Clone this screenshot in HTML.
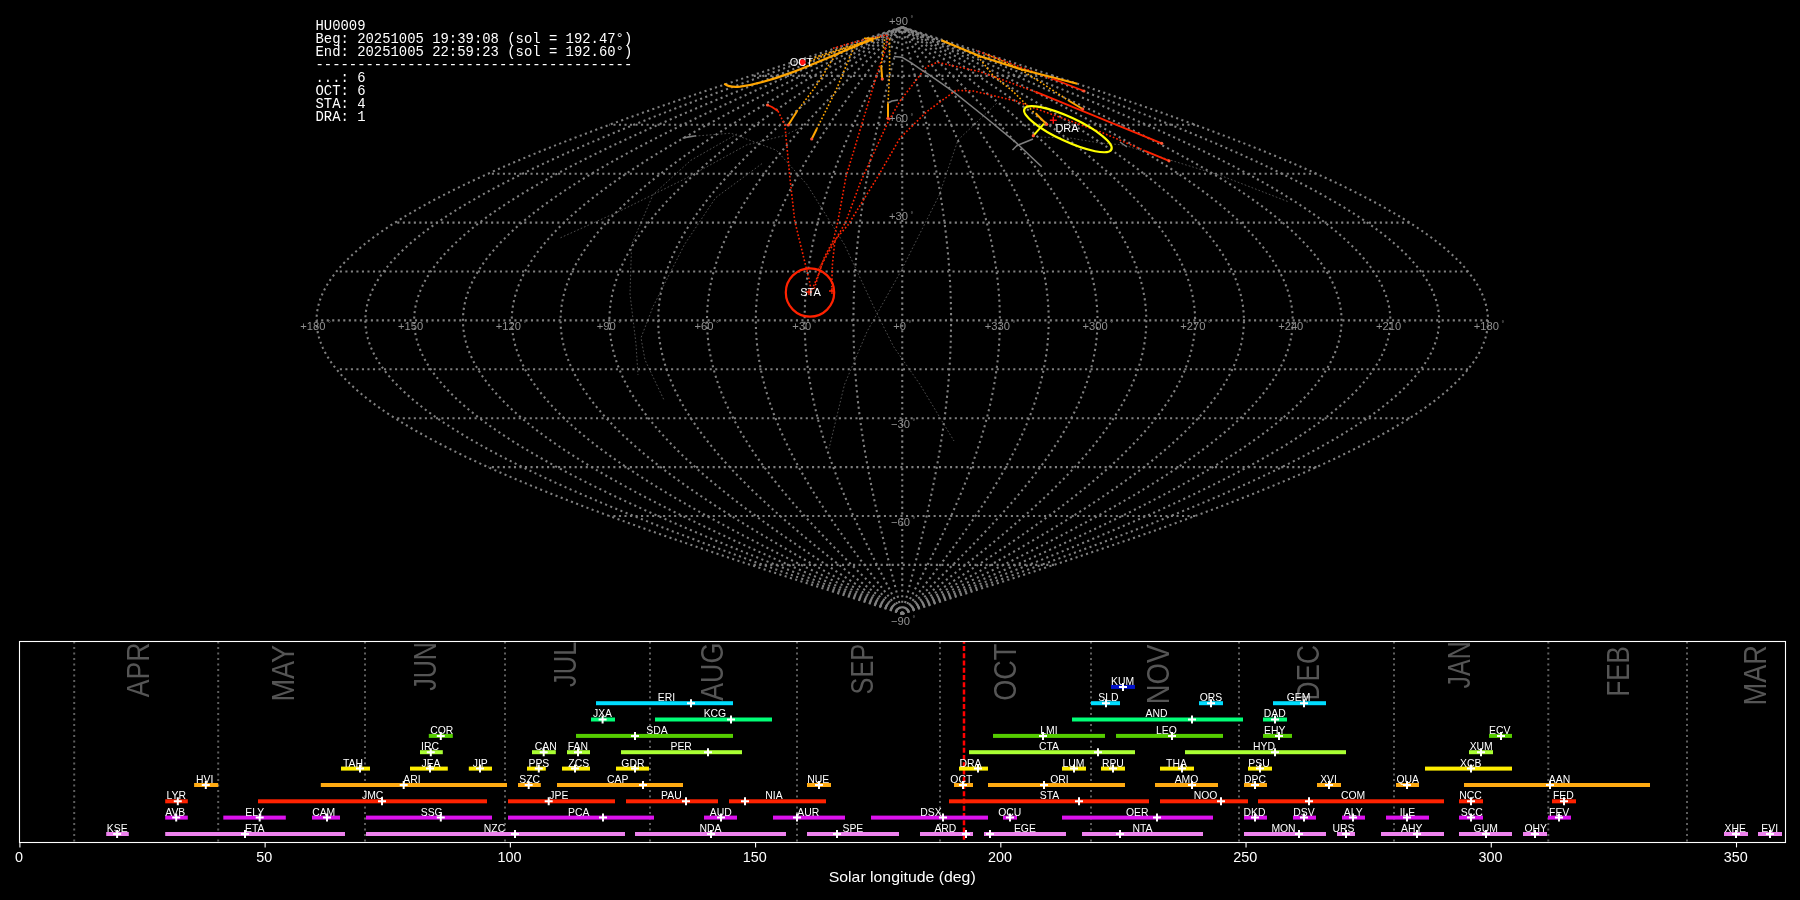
<!DOCTYPE html><html><head><meta charset="utf-8"><style>html,body{margin:0;padding:0;background:#000;width:1800px;height:900px;overflow:hidden}svg{display:block;will-change:transform}</style></head><body><svg width="1800" height="900" viewBox="0 0 1800 900"><rect width="1800" height="900" fill="#000"/><g fill="none" stroke="#808080" stroke-width="2.08" stroke-dasharray="2.08 3.44">
<polyline points="902.25,613.80 907.36,612.17 912.47,610.54 917.58,608.91 922.69,607.28 927.80,605.65 932.90,604.02 938.01,602.39 943.11,600.76 948.21,599.13 953.30,597.50 958.39,595.87 963.47,594.24 968.56,592.61 973.63,590.98 978.70,589.35 983.77,587.72 988.82,586.09 993.88,584.46 998.92,582.83 1003.96,581.20 1008.99,579.57 1014.01,577.94 1019.02,576.31 1024.03,574.68 1029.02,573.05 1034.01,571.42 1038.98,569.79 1043.95,568.16 1048.90,566.53 1053.85,564.90 1058.78,563.27 1063.70,561.64 1068.60,560.01 1073.50,558.38 1078.38,556.75 1083.25,555.12 1088.10,553.49 1092.94,551.86 1097.77,550.23 1102.58,548.60 1107.37,546.97 1112.15,545.34 1116.92,543.71 1121.66,542.08 1126.40,540.45 1131.11,538.82 1135.81,537.19 1140.48,535.56 1145.14,533.93 1149.79,532.30 1154.41,530.67 1159.01,529.04 1163.60,527.41 1168.16,525.78 1172.71,524.15 1177.23,522.52 1181.73,520.89 1186.21,519.26 1190.67,517.63 1195.11,516.00 1199.53,514.37 1203.92,512.74 1208.29,511.11 1212.63,509.48 1216.96,507.85 1221.26,506.22 1225.53,504.59 1229.78,502.96 1234.01,501.33 1238.21,499.70 1242.38,498.07 1246.53,496.44 1250.65,494.81 1254.75,493.18 1258.81,491.55 1262.86,489.92 1266.87,488.29 1270.86,486.66 1274.81,485.03 1278.74,483.40 1282.64,481.77 1286.52,480.14 1290.36,478.51 1294.17,476.88 1297.96,475.25 1301.71,473.62 1305.43,471.99 1309.13,470.36 1312.79,468.73 1316.42,467.10 1320.02,465.47 1323.58,463.84 1327.12,462.21 1330.62,460.58 1334.09,458.95 1337.52,457.32 1340.93,455.69 1344.30,454.06 1347.63,452.43 1350.94,450.80 1354.21,449.17 1357.44,447.54 1360.64,445.91 1363.80,444.28 1366.93,442.65 1370.03,441.02 1373.09,439.39 1376.11,437.76 1379.09,436.13 1382.04,434.50 1384.96,432.87 1387.83,431.24 1390.67,429.61 1393.48,427.98 1396.24,426.35 1398.97,424.72 1401.66,423.09 1404.31,421.46 1406.92,419.83 1409.50,418.20 1412.03,416.57 1414.53,414.94 1416.99,413.31 1419.41,411.68 1421.79,410.05 1424.13,408.42 1426.43,406.79 1428.69,405.16 1430.91,403.53 1433.09,401.90 1435.23,400.27 1437.33,398.64 1439.39,397.01 1441.41,395.38 1443.38,393.75 1445.32,392.12 1447.21,390.49 1449.07,388.86 1450.88,387.23 1452.65,385.60 1454.37,383.97 1456.06,382.34 1457.70,380.71 1459.30,379.08 1460.86,377.45 1462.38,375.82 1463.85,374.19 1465.28,372.56 1466.67,370.93 1468.01,369.30 1469.31,367.67 1470.57,366.04 1471.79,364.41 1472.96,362.78 1474.09,361.15 1475.17,359.52 1476.21,357.89 1477.21,356.26 1478.16,354.63 1479.07,353.00 1479.94,351.37 1480.76,349.74 1481.54,348.11 1482.27,346.48 1482.96,344.85 1483.60,343.22 1484.20,341.59 1484.76,339.96 1485.27,338.33 1485.74,336.70 1486.16,335.07 1486.54,333.44 1486.88,331.81 1487.17,330.18 1487.41,328.55 1487.61,326.92 1487.77,325.29 1487.88,323.66 1487.95,322.03 1487.97,320.40 1487.95,318.77 1487.88,317.14 1487.77,315.51 1487.61,313.88 1487.41,312.25 1487.17,310.62 1486.88,308.99 1486.54,307.36 1486.16,305.73 1485.74,304.10 1485.27,302.47 1484.76,300.84 1484.20,299.21 1483.60,297.58 1482.96,295.95 1482.27,294.32 1481.54,292.69 1480.76,291.06 1479.94,289.43 1479.07,287.80 1478.16,286.17 1477.21,284.54 1476.21,282.91 1475.17,281.28 1474.09,279.65 1472.96,278.02 1471.79,276.39 1470.57,274.76 1469.31,273.13 1468.01,271.50 1466.67,269.87 1465.28,268.24 1463.85,266.61 1462.38,264.98 1460.86,263.35 1459.30,261.72 1457.70,260.09 1456.06,258.46 1454.37,256.83 1452.65,255.20 1450.88,253.57 1449.07,251.94 1447.21,250.31 1445.32,248.68 1443.38,247.05 1441.41,245.42 1439.39,243.79 1437.33,242.16 1435.23,240.53 1433.09,238.90 1430.91,237.27 1428.69,235.64 1426.43,234.01 1424.13,232.38 1421.79,230.75 1419.41,229.12 1416.99,227.49 1414.53,225.86 1412.03,224.23 1409.50,222.60 1406.92,220.97 1404.31,219.34 1401.66,217.71 1398.97,216.08 1396.24,214.45 1393.48,212.82 1390.67,211.19 1387.83,209.56 1384.96,207.93 1382.04,206.30 1379.09,204.67 1376.11,203.04 1373.09,201.41 1370.03,199.78 1366.93,198.15 1363.80,196.52 1360.64,194.89 1357.44,193.26 1354.21,191.63 1350.94,190.00 1347.63,188.37 1344.30,186.74 1340.93,185.11 1337.52,183.48 1334.09,181.85 1330.62,180.22 1327.12,178.59 1323.58,176.96 1320.02,175.33 1316.42,173.70 1312.79,172.07 1309.13,170.44 1305.43,168.81 1301.71,167.18 1297.96,165.55 1294.17,163.92 1290.36,162.29 1286.52,160.66 1282.64,159.03 1278.74,157.40 1274.81,155.77 1270.86,154.14 1266.87,152.51 1262.86,150.88 1258.81,149.25 1254.75,147.62 1250.65,145.99 1246.53,144.36 1242.38,142.73 1238.21,141.10 1234.01,139.47 1229.78,137.84 1225.53,136.21 1221.26,134.58 1216.96,132.95 1212.63,131.32 1208.29,129.69 1203.92,128.06 1199.53,126.43 1195.11,124.80 1190.67,123.17 1186.21,121.54 1181.73,119.91 1177.23,118.28 1172.71,116.65 1168.16,115.02 1163.60,113.39 1159.01,111.76 1154.41,110.13 1149.79,108.50 1145.14,106.87 1140.48,105.24 1135.81,103.61 1131.11,101.98 1126.40,100.35 1121.66,98.72 1116.92,97.09 1112.15,95.46 1107.37,93.83 1102.58,92.20 1097.77,90.57 1092.94,88.94 1088.10,87.31 1083.25,85.68 1078.38,84.05 1073.50,82.42 1068.60,80.79 1063.70,79.16 1058.78,77.53 1053.85,75.90 1048.90,74.27 1043.95,72.64 1038.98,71.01 1034.01,69.38 1029.02,67.75 1024.03,66.12 1019.02,64.49 1014.01,62.86 1008.99,61.23 1003.96,59.60 998.92,57.97 993.88,56.34 988.82,54.71 983.77,53.08 978.70,51.45 973.63,49.82 968.56,48.19 963.47,46.56 958.39,44.93 953.30,43.30 948.21,41.67 943.11,40.04 938.01,38.41 932.90,36.78 927.80,35.15 922.69,33.52 917.58,31.89 912.47,30.26 907.36,28.63 902.25,27.00"/>
<polyline points="902.25,613.80 906.94,612.17 911.62,610.54 916.30,608.91 920.99,607.28 925.67,605.65 930.35,604.02 935.03,602.39 939.70,600.76 944.38,599.13 949.04,597.50 953.71,595.87 958.37,594.24 963.03,592.61 967.68,590.98 972.33,589.35 976.97,587.72 981.61,586.09 986.24,584.46 990.87,582.83 995.48,581.20 1000.09,579.57 1004.70,577.94 1009.29,576.31 1013.88,574.68 1018.46,573.05 1023.03,571.42 1027.59,569.79 1032.14,568.16 1036.68,566.53 1041.21,564.90 1045.73,563.27 1050.24,561.64 1054.74,560.01 1059.23,558.38 1063.70,556.75 1068.16,555.12 1072.61,553.49 1077.05,551.86 1081.47,550.23 1085.88,548.60 1090.28,546.97 1094.66,545.34 1099.03,543.71 1103.38,542.08 1107.72,540.45 1112.04,538.82 1116.34,537.19 1120.63,535.56 1124.90,533.93 1129.16,532.30 1133.40,530.67 1137.62,529.04 1141.82,527.41 1146.00,525.78 1150.17,524.15 1154.31,522.52 1158.44,520.89 1162.55,519.26 1166.64,517.63 1170.70,516.00 1174.75,514.37 1178.78,512.74 1182.78,511.11 1186.77,509.48 1190.73,507.85 1194.67,506.22 1198.59,504.59 1202.49,502.96 1206.36,501.33 1210.21,499.70 1214.04,498.07 1217.84,496.44 1221.62,494.81 1225.37,493.18 1229.10,491.55 1232.80,489.92 1236.48,488.29 1240.14,486.66 1243.77,485.03 1247.37,483.40 1250.95,481.77 1254.49,480.14 1258.02,478.51 1261.51,476.88 1264.98,475.25 1268.42,473.62 1271.83,471.99 1275.22,470.36 1278.58,468.73 1281.90,467.10 1285.20,465.47 1288.47,463.84 1291.71,462.21 1294.92,460.58 1298.10,458.95 1301.25,457.32 1304.37,455.69 1307.46,454.06 1310.52,452.43 1313.55,450.80 1316.54,449.17 1319.51,447.54 1322.44,445.91 1325.34,444.28 1328.21,442.65 1331.05,441.02 1333.85,439.39 1336.62,437.76 1339.36,436.13 1342.06,434.50 1344.73,432.87 1347.37,431.24 1349.97,429.61 1352.54,427.98 1355.08,426.35 1357.58,424.72 1360.04,423.09 1362.47,421.46 1364.87,419.83 1367.23,418.20 1369.55,416.57 1371.84,414.94 1374.10,413.31 1376.31,411.68 1378.49,410.05 1380.64,408.42 1382.75,406.79 1384.82,405.16 1386.86,403.53 1388.86,401.90 1390.82,400.27 1392.74,398.64 1394.63,397.01 1396.48,395.38 1398.29,393.75 1400.06,392.12 1401.80,390.49 1403.50,388.86 1405.16,387.23 1406.78,385.60 1408.36,383.97 1409.91,382.34 1411.41,380.71 1412.88,379.08 1414.31,377.45 1415.70,375.82 1417.05,374.19 1418.36,372.56 1419.63,370.93 1420.87,369.30 1422.06,367.67 1423.21,366.04 1424.33,364.41 1425.40,362.78 1426.43,361.15 1427.43,359.52 1428.38,357.89 1429.30,356.26 1430.17,354.63 1431.00,353.00 1431.80,351.37 1432.55,349.74 1433.26,348.11 1433.93,346.48 1434.57,344.85 1435.16,343.22 1435.71,341.59 1436.22,339.96 1436.69,338.33 1437.12,336.70 1437.50,335.07 1437.85,333.44 1438.16,331.81 1438.42,330.18 1438.65,328.55 1438.83,326.92 1438.98,325.29 1439.08,323.66 1439.14,322.03 1439.16,320.40 1439.14,318.77 1439.08,317.14 1438.98,315.51 1438.83,313.88 1438.65,312.25 1438.42,310.62 1438.16,308.99 1437.85,307.36 1437.50,305.73 1437.12,304.10 1436.69,302.47 1436.22,300.84 1435.71,299.21 1435.16,297.58 1434.57,295.95 1433.93,294.32 1433.26,292.69 1432.55,291.06 1431.80,289.43 1431.00,287.80 1430.17,286.17 1429.30,284.54 1428.38,282.91 1427.43,281.28 1426.43,279.65 1425.40,278.02 1424.33,276.39 1423.21,274.76 1422.06,273.13 1420.87,271.50 1419.63,269.87 1418.36,268.24 1417.05,266.61 1415.70,264.98 1414.31,263.35 1412.88,261.72 1411.41,260.09 1409.91,258.46 1408.36,256.83 1406.78,255.20 1405.16,253.57 1403.50,251.94 1401.80,250.31 1400.06,248.68 1398.29,247.05 1396.48,245.42 1394.63,243.79 1392.74,242.16 1390.82,240.53 1388.86,238.90 1386.86,237.27 1384.82,235.64 1382.75,234.01 1380.64,232.38 1378.49,230.75 1376.31,229.12 1374.10,227.49 1371.84,225.86 1369.55,224.23 1367.23,222.60 1364.87,220.97 1362.47,219.34 1360.04,217.71 1357.58,216.08 1355.08,214.45 1352.54,212.82 1349.97,211.19 1347.37,209.56 1344.73,207.93 1342.06,206.30 1339.36,204.67 1336.62,203.04 1333.85,201.41 1331.05,199.78 1328.21,198.15 1325.34,196.52 1322.44,194.89 1319.51,193.26 1316.54,191.63 1313.55,190.00 1310.52,188.37 1307.46,186.74 1304.37,185.11 1301.25,183.48 1298.10,181.85 1294.92,180.22 1291.71,178.59 1288.47,176.96 1285.20,175.33 1281.90,173.70 1278.58,172.07 1275.22,170.44 1271.83,168.81 1268.42,167.18 1264.98,165.55 1261.51,163.92 1258.02,162.29 1254.49,160.66 1250.95,159.03 1247.37,157.40 1243.77,155.77 1240.14,154.14 1236.48,152.51 1232.80,150.88 1229.10,149.25 1225.37,147.62 1221.62,145.99 1217.84,144.36 1214.04,142.73 1210.21,141.10 1206.36,139.47 1202.49,137.84 1198.59,136.21 1194.67,134.58 1190.73,132.95 1186.77,131.32 1182.78,129.69 1178.78,128.06 1174.75,126.43 1170.70,124.80 1166.64,123.17 1162.55,121.54 1158.44,119.91 1154.31,118.28 1150.17,116.65 1146.00,115.02 1141.82,113.39 1137.62,111.76 1133.40,110.13 1129.16,108.50 1124.90,106.87 1120.63,105.24 1116.34,103.61 1112.04,101.98 1107.72,100.35 1103.38,98.72 1099.03,97.09 1094.66,95.46 1090.28,93.83 1085.88,92.20 1081.47,90.57 1077.05,88.94 1072.61,87.31 1068.16,85.68 1063.70,84.05 1059.23,82.42 1054.74,80.79 1050.24,79.16 1045.73,77.53 1041.21,75.90 1036.68,74.27 1032.14,72.64 1027.59,71.01 1023.03,69.38 1018.46,67.75 1013.88,66.12 1009.29,64.49 1004.70,62.86 1000.09,61.23 995.48,59.60 990.87,57.97 986.24,56.34 981.61,54.71 976.97,53.08 972.33,51.45 967.68,49.82 963.03,48.19 958.37,46.56 953.71,44.93 949.04,43.30 944.38,41.67 939.70,40.04 935.03,38.41 930.35,36.78 925.67,35.15 920.99,33.52 916.30,31.89 911.62,30.26 906.94,28.63 902.25,27.00"/>
<polyline points="902.25,613.80 906.51,612.17 910.77,610.54 915.03,608.91 919.28,607.28 923.54,605.65 927.80,604.02 932.05,602.39 936.30,600.76 940.55,599.13 944.79,597.50 949.03,595.87 953.27,594.24 957.50,592.61 961.73,590.98 965.96,589.35 970.18,587.72 974.40,586.09 978.61,584.46 982.81,582.83 987.01,581.20 991.20,579.57 995.38,577.94 999.56,576.31 1003.73,574.68 1007.89,573.05 1012.05,571.42 1016.19,569.79 1020.33,568.16 1024.46,566.53 1028.58,564.90 1032.69,563.27 1036.79,561.64 1040.88,560.01 1044.96,558.38 1049.02,556.75 1053.08,555.12 1057.13,553.49 1061.16,551.86 1065.18,550.23 1069.19,548.60 1073.19,546.97 1077.17,545.34 1081.14,543.71 1085.10,542.08 1089.04,540.45 1092.97,538.82 1096.88,537.19 1100.78,535.56 1104.66,533.93 1108.53,532.30 1112.38,530.67 1116.22,529.04 1120.04,527.41 1123.84,525.78 1127.63,524.15 1131.40,522.52 1135.15,520.89 1138.89,519.26 1142.60,517.63 1146.30,516.00 1149.98,514.37 1153.64,512.74 1157.28,511.11 1160.90,509.48 1164.51,507.85 1168.09,506.22 1171.65,504.59 1175.19,502.96 1178.71,501.33 1182.21,499.70 1185.69,498.07 1189.15,496.44 1192.58,494.81 1196.00,493.18 1199.39,491.55 1202.75,489.92 1206.10,488.29 1209.42,486.66 1212.72,485.03 1215.99,483.40 1219.25,481.77 1222.47,480.14 1225.67,478.51 1228.85,476.88 1232.01,475.25 1235.13,473.62 1238.24,471.99 1241.31,470.36 1244.36,468.73 1247.39,467.10 1250.39,465.47 1253.36,463.84 1256.31,462.21 1259.22,460.58 1262.12,458.95 1264.98,457.32 1267.82,455.69 1270.62,454.06 1273.40,452.43 1276.16,450.80 1278.88,449.17 1281.57,447.54 1284.24,445.91 1286.88,444.28 1289.49,442.65 1292.06,441.02 1294.61,439.39 1297.13,437.76 1299.62,436.13 1302.08,434.50 1304.51,432.87 1306.90,431.24 1309.27,429.61 1311.61,427.98 1313.91,426.35 1316.18,424.72 1318.42,423.09 1320.63,421.46 1322.81,419.83 1324.96,418.20 1327.07,416.57 1329.15,414.94 1331.20,413.31 1333.22,411.68 1335.20,410.05 1337.15,408.42 1339.07,406.79 1340.95,405.16 1342.80,403.53 1344.62,401.90 1346.40,400.27 1348.15,398.64 1349.87,397.01 1351.55,395.38 1353.20,393.75 1354.81,392.12 1356.39,390.49 1357.93,388.86 1359.44,387.23 1360.91,385.60 1362.35,383.97 1363.76,382.34 1365.13,380.71 1366.46,379.08 1367.76,377.45 1369.02,375.82 1370.25,374.19 1371.44,372.56 1372.60,370.93 1373.72,369.30 1374.80,367.67 1375.85,366.04 1376.86,364.41 1377.84,362.78 1378.78,361.15 1379.68,359.52 1380.55,357.89 1381.38,356.26 1382.18,354.63 1382.93,353.00 1383.66,351.37 1384.34,349.74 1384.99,348.11 1385.60,346.48 1386.17,344.85 1386.71,343.22 1387.21,341.59 1387.68,339.96 1388.10,338.33 1388.49,336.70 1388.85,335.07 1389.16,333.44 1389.44,331.81 1389.68,330.18 1389.89,328.55 1390.05,326.92 1390.18,325.29 1390.28,323.66 1390.33,322.03 1390.35,320.40 1390.33,318.77 1390.28,317.14 1390.18,315.51 1390.05,313.88 1389.89,312.25 1389.68,310.62 1389.44,308.99 1389.16,307.36 1388.85,305.73 1388.49,304.10 1388.10,302.47 1387.68,300.84 1387.21,299.21 1386.71,297.58 1386.17,295.95 1385.60,294.32 1384.99,292.69 1384.34,291.06 1383.66,289.43 1382.93,287.80 1382.18,286.17 1381.38,284.54 1380.55,282.91 1379.68,281.28 1378.78,279.65 1377.84,278.02 1376.86,276.39 1375.85,274.76 1374.80,273.13 1373.72,271.50 1372.60,269.87 1371.44,268.24 1370.25,266.61 1369.02,264.98 1367.76,263.35 1366.46,261.72 1365.13,260.09 1363.76,258.46 1362.35,256.83 1360.91,255.20 1359.44,253.57 1357.93,251.94 1356.39,250.31 1354.81,248.68 1353.20,247.05 1351.55,245.42 1349.87,243.79 1348.15,242.16 1346.40,240.53 1344.62,238.90 1342.80,237.27 1340.95,235.64 1339.07,234.01 1337.15,232.38 1335.20,230.75 1333.22,229.12 1331.20,227.49 1329.15,225.86 1327.07,224.23 1324.96,222.60 1322.81,220.97 1320.63,219.34 1318.42,217.71 1316.18,216.08 1313.91,214.45 1311.61,212.82 1309.27,211.19 1306.90,209.56 1304.51,207.93 1302.08,206.30 1299.62,204.67 1297.13,203.04 1294.61,201.41 1292.06,199.78 1289.49,198.15 1286.88,196.52 1284.24,194.89 1281.57,193.26 1278.88,191.63 1276.16,190.00 1273.40,188.37 1270.62,186.74 1267.82,185.11 1264.98,183.48 1262.12,181.85 1259.22,180.22 1256.31,178.59 1253.36,176.96 1250.39,175.33 1247.39,173.70 1244.36,172.07 1241.31,170.44 1238.24,168.81 1235.13,167.18 1232.01,165.55 1228.85,163.92 1225.67,162.29 1222.47,160.66 1219.25,159.03 1215.99,157.40 1212.72,155.77 1209.42,154.14 1206.10,152.51 1202.75,150.88 1199.39,149.25 1196.00,147.62 1192.58,145.99 1189.15,144.36 1185.69,142.73 1182.21,141.10 1178.71,139.47 1175.19,137.84 1171.65,136.21 1168.09,134.58 1164.51,132.95 1160.90,131.32 1157.28,129.69 1153.64,128.06 1149.98,126.43 1146.30,124.80 1142.60,123.17 1138.89,121.54 1135.15,119.91 1131.40,118.28 1127.63,116.65 1123.84,115.02 1120.04,113.39 1116.22,111.76 1112.38,110.13 1108.53,108.50 1104.66,106.87 1100.78,105.24 1096.88,103.61 1092.97,101.98 1089.04,100.35 1085.10,98.72 1081.14,97.09 1077.17,95.46 1073.19,93.83 1069.19,92.20 1065.18,90.57 1061.16,88.94 1057.13,87.31 1053.08,85.68 1049.02,84.05 1044.96,82.42 1040.88,80.79 1036.79,79.16 1032.69,77.53 1028.58,75.90 1024.46,74.27 1020.33,72.64 1016.19,71.01 1012.05,69.38 1007.89,67.75 1003.73,66.12 999.56,64.49 995.38,62.86 991.20,61.23 987.01,59.60 982.81,57.97 978.61,56.34 974.40,54.71 970.18,53.08 965.96,51.45 961.73,49.82 957.50,48.19 953.27,46.56 949.03,44.93 944.79,43.30 940.55,41.67 936.30,40.04 932.05,38.41 927.80,36.78 923.54,35.15 919.28,33.52 915.03,31.89 910.77,30.26 906.51,28.63 902.25,27.00"/>
<polyline points="902.25,613.80 906.08,612.17 909.92,610.54 913.75,608.91 917.58,607.28 921.41,605.65 925.24,604.02 929.07,602.39 932.89,600.76 936.72,599.13 940.54,597.50 944.35,595.87 948.17,594.24 951.98,592.61 955.79,590.98 959.59,589.35 963.39,587.72 967.18,586.09 970.97,584.46 974.75,582.83 978.53,581.20 982.30,579.57 986.07,577.94 989.83,576.31 993.58,574.68 997.33,573.05 1001.07,571.42 1004.80,569.79 1008.52,568.16 1012.24,566.53 1015.95,564.90 1019.65,563.27 1023.33,561.64 1027.02,560.01 1030.69,558.38 1034.35,556.75 1038.00,555.12 1041.64,553.49 1045.27,551.86 1048.89,550.23 1052.50,548.60 1056.09,546.97 1059.68,545.34 1063.25,543.71 1066.81,542.08 1070.36,540.45 1073.89,538.82 1077.42,537.19 1080.93,535.56 1084.42,533.93 1087.90,532.30 1091.37,530.67 1094.82,529.04 1098.26,527.41 1101.68,525.78 1105.09,524.15 1108.48,522.52 1111.86,520.89 1115.22,519.26 1118.57,517.63 1121.89,516.00 1125.21,514.37 1128.50,512.74 1131.78,511.11 1135.04,509.48 1138.28,507.85 1141.50,506.22 1144.71,504.59 1147.90,502.96 1151.07,501.33 1154.22,499.70 1157.35,498.07 1160.46,496.44 1163.55,494.81 1166.62,493.18 1169.67,491.55 1172.70,489.92 1175.71,488.29 1178.70,486.66 1181.67,485.03 1184.62,483.40 1187.55,481.77 1190.45,480.14 1193.33,478.51 1196.19,476.88 1199.03,475.25 1201.85,473.62 1204.64,471.99 1207.41,470.36 1210.15,468.73 1212.87,467.10 1215.57,465.47 1218.25,463.84 1220.90,462.21 1223.53,460.58 1226.13,458.95 1228.71,457.32 1231.26,455.69 1233.79,454.06 1236.29,452.43 1238.77,450.80 1241.22,449.17 1243.64,447.54 1246.04,445.91 1248.42,444.28 1250.76,442.65 1253.08,441.02 1255.38,439.39 1257.64,437.76 1259.88,436.13 1262.10,434.50 1264.28,432.87 1266.44,431.24 1268.57,429.61 1270.67,427.98 1272.74,426.35 1274.79,424.72 1276.81,423.09 1278.80,421.46 1280.76,419.83 1282.69,418.20 1284.59,416.57 1286.46,414.94 1288.31,413.31 1290.12,411.68 1291.90,410.05 1293.66,408.42 1295.39,406.79 1297.08,405.16 1298.75,403.53 1300.38,401.90 1301.99,400.27 1303.56,398.64 1305.11,397.01 1306.62,395.38 1308.10,393.75 1309.55,392.12 1310.97,390.49 1312.36,388.86 1313.72,387.23 1315.05,385.60 1316.34,383.97 1317.61,382.34 1318.84,380.71 1320.04,379.08 1321.21,377.45 1322.35,375.82 1323.45,374.19 1324.52,372.56 1325.56,370.93 1326.57,369.30 1327.55,367.67 1328.49,366.04 1329.40,364.41 1330.28,362.78 1331.13,361.15 1331.94,359.52 1332.72,357.89 1333.47,356.26 1334.18,354.63 1334.87,353.00 1335.52,351.37 1336.13,349.74 1336.71,348.11 1337.26,346.48 1337.78,344.85 1338.27,343.22 1338.72,341.59 1339.13,339.96 1339.52,338.33 1339.87,336.70 1340.19,335.07 1340.47,333.44 1340.72,331.81 1340.94,330.18 1341.12,328.55 1341.27,326.92 1341.39,325.29 1341.47,323.66 1341.52,322.03 1341.54,320.40 1341.52,318.77 1341.47,317.14 1341.39,315.51 1341.27,313.88 1341.12,312.25 1340.94,310.62 1340.72,308.99 1340.47,307.36 1340.19,305.73 1339.87,304.10 1339.52,302.47 1339.13,300.84 1338.72,299.21 1338.27,297.58 1337.78,295.95 1337.26,294.32 1336.71,292.69 1336.13,291.06 1335.52,289.43 1334.87,287.80 1334.18,286.17 1333.47,284.54 1332.72,282.91 1331.94,281.28 1331.13,279.65 1330.28,278.02 1329.40,276.39 1328.49,274.76 1327.55,273.13 1326.57,271.50 1325.56,269.87 1324.52,268.24 1323.45,266.61 1322.35,264.98 1321.21,263.35 1320.04,261.72 1318.84,260.09 1317.61,258.46 1316.34,256.83 1315.05,255.20 1313.72,253.57 1312.36,251.94 1310.97,250.31 1309.55,248.68 1308.10,247.05 1306.62,245.42 1305.11,243.79 1303.56,242.16 1301.99,240.53 1300.38,238.90 1298.75,237.27 1297.08,235.64 1295.39,234.01 1293.66,232.38 1291.90,230.75 1290.12,229.12 1288.31,227.49 1286.46,225.86 1284.59,224.23 1282.69,222.60 1280.76,220.97 1278.80,219.34 1276.81,217.71 1274.79,216.08 1272.74,214.45 1270.67,212.82 1268.57,211.19 1266.44,209.56 1264.28,207.93 1262.10,206.30 1259.88,204.67 1257.64,203.04 1255.38,201.41 1253.08,199.78 1250.76,198.15 1248.42,196.52 1246.04,194.89 1243.64,193.26 1241.22,191.63 1238.77,190.00 1236.29,188.37 1233.79,186.74 1231.26,185.11 1228.71,183.48 1226.13,181.85 1223.53,180.22 1220.90,178.59 1218.25,176.96 1215.57,175.33 1212.87,173.70 1210.15,172.07 1207.41,170.44 1204.64,168.81 1201.85,167.18 1199.03,165.55 1196.19,163.92 1193.33,162.29 1190.45,160.66 1187.55,159.03 1184.62,157.40 1181.67,155.77 1178.70,154.14 1175.71,152.51 1172.70,150.88 1169.67,149.25 1166.62,147.62 1163.55,145.99 1160.46,144.36 1157.35,142.73 1154.22,141.10 1151.07,139.47 1147.90,137.84 1144.71,136.21 1141.50,134.58 1138.28,132.95 1135.04,131.32 1131.78,129.69 1128.50,128.06 1125.21,126.43 1121.89,124.80 1118.57,123.17 1115.22,121.54 1111.86,119.91 1108.48,118.28 1105.09,116.65 1101.68,115.02 1098.26,113.39 1094.82,111.76 1091.37,110.13 1087.90,108.50 1084.42,106.87 1080.93,105.24 1077.42,103.61 1073.89,101.98 1070.36,100.35 1066.81,98.72 1063.25,97.09 1059.68,95.46 1056.09,93.83 1052.50,92.20 1048.89,90.57 1045.27,88.94 1041.64,87.31 1038.00,85.68 1034.35,84.05 1030.69,82.42 1027.02,80.79 1023.33,79.16 1019.65,77.53 1015.95,75.90 1012.24,74.27 1008.52,72.64 1004.80,71.01 1001.07,69.38 997.33,67.75 993.58,66.12 989.83,64.49 986.07,62.86 982.30,61.23 978.53,59.60 974.75,57.97 970.97,56.34 967.18,54.71 963.39,53.08 959.59,51.45 955.79,49.82 951.98,48.19 948.17,46.56 944.35,44.93 940.54,43.30 936.72,41.67 932.89,40.04 929.07,38.41 925.24,36.78 921.41,35.15 917.58,33.52 913.75,31.89 909.92,30.26 906.08,28.63 902.25,27.00"/>
<polyline points="902.25,613.80 905.66,612.17 909.06,610.54 912.47,608.91 915.88,607.28 919.28,605.65 922.69,604.02 926.09,602.39 929.49,600.76 932.89,599.13 936.28,597.50 939.68,595.87 943.07,594.24 946.45,592.61 949.84,590.98 953.22,589.35 956.59,587.72 959.97,586.09 963.33,584.46 966.70,582.83 970.06,581.20 973.41,579.57 976.76,577.94 980.10,576.31 983.44,574.68 986.77,573.05 990.09,571.42 993.41,569.79 996.72,568.16 1000.02,566.53 1003.31,564.90 1006.60,563.27 1009.88,561.64 1013.15,560.01 1016.42,558.38 1019.67,556.75 1022.91,555.12 1026.15,553.49 1029.38,551.86 1032.59,550.23 1035.80,548.60 1039.00,546.97 1042.19,545.34 1045.36,543.71 1048.53,542.08 1051.68,540.45 1054.82,538.82 1057.95,537.19 1061.07,535.56 1064.18,533.93 1067.27,532.30 1070.36,530.67 1073.43,529.04 1076.48,527.41 1079.52,525.78 1082.55,524.15 1085.57,522.52 1088.57,520.89 1091.56,519.26 1094.53,517.63 1097.49,516.00 1100.43,514.37 1103.36,512.74 1106.28,511.11 1109.17,509.48 1112.05,507.85 1114.92,506.22 1117.77,504.59 1120.60,502.96 1123.42,501.33 1126.22,499.70 1129.00,498.07 1131.77,496.44 1134.52,494.81 1137.25,493.18 1139.96,491.55 1142.65,489.92 1145.33,488.29 1147.99,486.66 1150.63,485.03 1153.25,483.40 1155.85,481.77 1158.43,480.14 1160.99,478.51 1163.53,476.88 1166.05,475.25 1168.56,473.62 1171.04,471.99 1173.50,470.36 1175.94,468.73 1178.36,467.10 1180.76,465.47 1183.14,463.84 1185.49,462.21 1187.83,460.58 1190.14,458.95 1192.43,457.32 1194.70,455.69 1196.95,454.06 1199.17,452.43 1201.38,450.80 1203.55,449.17 1205.71,447.54 1207.84,445.91 1209.95,444.28 1212.04,442.65 1214.10,441.02 1216.14,439.39 1218.15,437.76 1220.15,436.13 1222.11,434.50 1224.05,432.87 1225.97,431.24 1227.87,429.61 1229.73,427.98 1231.58,426.35 1233.40,424.72 1235.19,423.09 1236.96,421.46 1238.70,419.83 1240.42,418.20 1242.11,416.57 1243.77,414.94 1245.41,413.31 1247.02,411.68 1248.61,410.05 1250.17,408.42 1251.70,406.79 1253.21,405.16 1254.69,403.53 1256.15,401.90 1257.57,400.27 1258.97,398.64 1260.34,397.01 1261.69,395.38 1263.01,393.75 1264.30,392.12 1265.56,390.49 1266.79,388.86 1268.00,387.23 1269.18,385.60 1270.33,383.97 1271.46,382.34 1272.55,380.71 1273.62,379.08 1274.66,377.45 1275.67,375.82 1276.65,374.19 1277.60,372.56 1278.53,370.93 1279.42,369.30 1280.29,367.67 1281.13,366.04 1281.94,364.41 1282.72,362.78 1283.47,361.15 1284.20,359.52 1284.89,357.89 1285.56,356.26 1286.19,354.63 1286.80,353.00 1287.37,351.37 1287.92,349.74 1288.44,348.11 1288.93,346.48 1289.39,344.85 1289.82,343.22 1290.22,341.59 1290.59,339.96 1290.93,338.33 1291.24,336.70 1291.53,335.07 1291.78,333.44 1292.00,331.81 1292.19,330.18 1292.36,328.55 1292.49,326.92 1292.60,325.29 1292.67,323.66 1292.72,322.03 1292.73,320.40 1292.72,318.77 1292.67,317.14 1292.60,315.51 1292.49,313.88 1292.36,312.25 1292.19,310.62 1292.00,308.99 1291.78,307.36 1291.53,305.73 1291.24,304.10 1290.93,302.47 1290.59,300.84 1290.22,299.21 1289.82,297.58 1289.39,295.95 1288.93,294.32 1288.44,292.69 1287.92,291.06 1287.37,289.43 1286.80,287.80 1286.19,286.17 1285.56,284.54 1284.89,282.91 1284.20,281.28 1283.47,279.65 1282.72,278.02 1281.94,276.39 1281.13,274.76 1280.29,273.13 1279.42,271.50 1278.53,269.87 1277.60,268.24 1276.65,266.61 1275.67,264.98 1274.66,263.35 1273.62,261.72 1272.55,260.09 1271.46,258.46 1270.33,256.83 1269.18,255.20 1268.00,253.57 1266.79,251.94 1265.56,250.31 1264.30,248.68 1263.01,247.05 1261.69,245.42 1260.34,243.79 1258.97,242.16 1257.57,240.53 1256.15,238.90 1254.69,237.27 1253.21,235.64 1251.70,234.01 1250.17,232.38 1248.61,230.75 1247.02,229.12 1245.41,227.49 1243.77,225.86 1242.11,224.23 1240.42,222.60 1238.70,220.97 1236.96,219.34 1235.19,217.71 1233.40,216.08 1231.58,214.45 1229.73,212.82 1227.87,211.19 1225.97,209.56 1224.05,207.93 1222.11,206.30 1220.15,204.67 1218.15,203.04 1216.14,201.41 1214.10,199.78 1212.04,198.15 1209.95,196.52 1207.84,194.89 1205.71,193.26 1203.55,191.63 1201.38,190.00 1199.17,188.37 1196.95,186.74 1194.70,185.11 1192.43,183.48 1190.14,181.85 1187.83,180.22 1185.49,178.59 1183.14,176.96 1180.76,175.33 1178.36,173.70 1175.94,172.07 1173.50,170.44 1171.04,168.81 1168.56,167.18 1166.05,165.55 1163.53,163.92 1160.99,162.29 1158.43,160.66 1155.85,159.03 1153.25,157.40 1150.63,155.77 1147.99,154.14 1145.33,152.51 1142.65,150.88 1139.96,149.25 1137.25,147.62 1134.52,145.99 1131.77,144.36 1129.00,142.73 1126.22,141.10 1123.42,139.47 1120.60,137.84 1117.77,136.21 1114.92,134.58 1112.05,132.95 1109.17,131.32 1106.28,129.69 1103.36,128.06 1100.43,126.43 1097.49,124.80 1094.53,123.17 1091.56,121.54 1088.57,119.91 1085.57,118.28 1082.55,116.65 1079.52,115.02 1076.48,113.39 1073.43,111.76 1070.36,110.13 1067.27,108.50 1064.18,106.87 1061.07,105.24 1057.95,103.61 1054.82,101.98 1051.68,100.35 1048.53,98.72 1045.36,97.09 1042.19,95.46 1039.00,93.83 1035.80,92.20 1032.59,90.57 1029.38,88.94 1026.15,87.31 1022.91,85.68 1019.67,84.05 1016.42,82.42 1013.15,80.79 1009.88,79.16 1006.60,77.53 1003.31,75.90 1000.02,74.27 996.72,72.64 993.41,71.01 990.09,69.38 986.77,67.75 983.44,66.12 980.10,64.49 976.76,62.86 973.41,61.23 970.06,59.60 966.70,57.97 963.33,56.34 959.97,54.71 956.59,53.08 953.22,51.45 949.84,49.82 946.45,48.19 943.07,46.56 939.68,44.93 936.28,43.30 932.89,41.67 929.49,40.04 926.09,38.41 922.69,36.78 919.28,35.15 915.88,33.52 912.47,31.89 909.06,30.26 905.66,28.63 902.25,27.00"/>
<polyline points="902.25,613.80 905.23,612.17 908.21,610.54 911.19,608.91 914.17,607.28 917.15,605.65 920.13,604.02 923.11,602.39 926.08,600.76 929.06,599.13 932.03,597.50 935.00,595.87 937.96,594.24 940.93,592.61 943.89,590.98 946.85,589.35 949.80,587.72 952.75,586.09 955.70,584.46 958.64,582.83 961.58,581.20 964.51,579.57 967.44,577.94 970.37,576.31 973.29,574.68 976.20,573.05 979.11,571.42 982.01,569.79 984.91,568.16 987.80,566.53 990.68,564.90 993.56,563.27 996.43,561.64 999.29,560.01 1002.14,558.38 1004.99,556.75 1007.83,555.12 1010.66,553.49 1013.49,551.86 1016.30,550.23 1019.11,548.60 1021.91,546.97 1024.69,545.34 1027.47,543.71 1030.24,542.08 1033.00,540.45 1035.75,538.82 1038.49,537.19 1041.22,535.56 1043.94,533.93 1046.65,532.30 1049.34,530.67 1052.03,529.04 1054.70,527.41 1057.36,525.78 1060.02,524.15 1062.65,522.52 1065.28,520.89 1067.89,519.26 1070.50,517.63 1073.09,516.00 1075.66,514.37 1078.22,512.74 1080.77,511.11 1083.31,509.48 1085.83,507.85 1088.34,506.22 1090.83,504.59 1093.31,502.96 1095.77,501.33 1098.22,499.70 1100.66,498.07 1103.08,496.44 1105.48,494.81 1107.87,493.18 1110.25,491.55 1112.60,489.92 1114.94,488.29 1117.27,486.66 1119.58,485.03 1121.87,483.40 1124.15,481.77 1126.41,480.14 1128.65,478.51 1130.87,476.88 1133.08,475.25 1135.27,473.62 1137.44,471.99 1139.59,470.36 1141.73,468.73 1143.85,467.10 1145.95,465.47 1148.03,463.84 1150.09,462.21 1152.13,460.58 1154.16,458.95 1156.16,457.32 1158.15,455.69 1160.11,454.06 1162.06,452.43 1163.98,450.80 1165.89,449.17 1167.78,447.54 1169.64,445.91 1171.49,444.28 1173.32,442.65 1175.12,441.02 1176.90,439.39 1178.67,437.76 1180.41,436.13 1182.13,434.50 1183.83,432.87 1185.51,431.24 1187.16,429.61 1188.80,427.98 1190.41,426.35 1192.00,424.72 1193.57,423.09 1195.12,421.46 1196.64,419.83 1198.14,418.20 1199.62,416.57 1201.08,414.94 1202.52,413.31 1203.93,411.68 1205.31,410.05 1206.68,408.42 1208.02,406.79 1209.34,405.16 1210.64,403.53 1211.91,401.90 1213.16,400.27 1214.38,398.64 1215.58,397.01 1216.76,395.38 1217.91,393.75 1219.04,392.12 1220.15,390.49 1221.23,388.86 1222.28,387.23 1223.31,385.60 1224.32,383.97 1225.31,382.34 1226.26,380.71 1227.20,379.08 1228.11,377.45 1228.99,375.82 1229.85,374.19 1230.68,372.56 1231.49,370.93 1232.28,369.30 1233.04,367.67 1233.77,366.04 1234.48,364.41 1235.16,362.78 1235.82,361.15 1236.45,359.52 1237.06,357.89 1237.64,356.26 1238.20,354.63 1238.73,353.00 1239.23,351.37 1239.71,349.74 1240.17,348.11 1240.59,346.48 1241.00,344.85 1241.37,343.22 1241.72,341.59 1242.05,339.96 1242.35,338.33 1242.62,336.70 1242.87,335.07 1243.09,333.44 1243.28,331.81 1243.45,330.18 1243.59,328.55 1243.71,326.92 1243.80,325.29 1243.87,323.66 1243.91,322.03 1243.92,320.40 1243.91,318.77 1243.87,317.14 1243.80,315.51 1243.71,313.88 1243.59,312.25 1243.45,310.62 1243.28,308.99 1243.09,307.36 1242.87,305.73 1242.62,304.10 1242.35,302.47 1242.05,300.84 1241.72,299.21 1241.37,297.58 1241.00,295.95 1240.59,294.32 1240.17,292.69 1239.71,291.06 1239.23,289.43 1238.73,287.80 1238.20,286.17 1237.64,284.54 1237.06,282.91 1236.45,281.28 1235.82,279.65 1235.16,278.02 1234.48,276.39 1233.77,274.76 1233.04,273.13 1232.28,271.50 1231.49,269.87 1230.68,268.24 1229.85,266.61 1228.99,264.98 1228.11,263.35 1227.20,261.72 1226.26,260.09 1225.31,258.46 1224.32,256.83 1223.31,255.20 1222.28,253.57 1221.23,251.94 1220.15,250.31 1219.04,248.68 1217.91,247.05 1216.76,245.42 1215.58,243.79 1214.38,242.16 1213.16,240.53 1211.91,238.90 1210.64,237.27 1209.34,235.64 1208.02,234.01 1206.68,232.38 1205.31,230.75 1203.93,229.12 1202.52,227.49 1201.08,225.86 1199.62,224.23 1198.14,222.60 1196.64,220.97 1195.12,219.34 1193.57,217.71 1192.00,216.08 1190.41,214.45 1188.80,212.82 1187.16,211.19 1185.51,209.56 1183.83,207.93 1182.13,206.30 1180.41,204.67 1178.67,203.04 1176.90,201.41 1175.12,199.78 1173.32,198.15 1171.49,196.52 1169.64,194.89 1167.78,193.26 1165.89,191.63 1163.98,190.00 1162.06,188.37 1160.11,186.74 1158.15,185.11 1156.16,183.48 1154.16,181.85 1152.13,180.22 1150.09,178.59 1148.03,176.96 1145.95,175.33 1143.85,173.70 1141.73,172.07 1139.59,170.44 1137.44,168.81 1135.27,167.18 1133.08,165.55 1130.87,163.92 1128.65,162.29 1126.41,160.66 1124.15,159.03 1121.87,157.40 1119.58,155.77 1117.27,154.14 1114.94,152.51 1112.60,150.88 1110.25,149.25 1107.87,147.62 1105.48,145.99 1103.08,144.36 1100.66,142.73 1098.22,141.10 1095.77,139.47 1093.31,137.84 1090.83,136.21 1088.34,134.58 1085.83,132.95 1083.31,131.32 1080.77,129.69 1078.22,128.06 1075.66,126.43 1073.09,124.80 1070.50,123.17 1067.89,121.54 1065.28,119.91 1062.65,118.28 1060.02,116.65 1057.36,115.02 1054.70,113.39 1052.03,111.76 1049.34,110.13 1046.65,108.50 1043.94,106.87 1041.22,105.24 1038.49,103.61 1035.75,101.98 1033.00,100.35 1030.24,98.72 1027.47,97.09 1024.69,95.46 1021.91,93.83 1019.11,92.20 1016.30,90.57 1013.49,88.94 1010.66,87.31 1007.83,85.68 1004.99,84.05 1002.14,82.42 999.29,80.79 996.43,79.16 993.56,77.53 990.68,75.90 987.80,74.27 984.91,72.64 982.01,71.01 979.11,69.38 976.20,67.75 973.29,66.12 970.37,64.49 967.44,62.86 964.51,61.23 961.58,59.60 958.64,57.97 955.70,56.34 952.75,54.71 949.80,53.08 946.85,51.45 943.89,49.82 940.93,48.19 937.96,46.56 935.00,44.93 932.03,43.30 929.06,41.67 926.08,40.04 923.11,38.41 920.13,36.78 917.15,35.15 914.17,33.52 911.19,31.89 908.21,30.26 905.23,28.63 902.25,27.00"/>
<polyline points="902.25,613.80 904.81,612.17 907.36,610.54 909.92,608.91 912.47,607.28 915.02,605.65 917.58,604.02 920.13,602.39 922.68,600.76 925.23,599.13 927.77,597.50 930.32,595.87 932.86,594.24 935.40,592.61 937.94,590.98 940.48,589.35 943.01,587.72 945.54,586.09 948.06,584.46 950.59,582.83 953.10,581.20 955.62,579.57 958.13,577.94 960.64,576.31 963.14,574.68 965.64,573.05 968.13,571.42 970.62,569.79 973.10,568.16 975.58,566.53 978.05,564.90 980.51,563.27 982.97,561.64 985.43,560.01 987.87,558.38 990.31,556.75 992.75,555.12 995.18,553.49 997.60,551.86 1000.01,550.23 1002.41,548.60 1004.81,546.97 1007.20,545.34 1009.58,543.71 1011.96,542.08 1014.32,540.45 1016.68,538.82 1019.03,537.19 1021.37,535.56 1023.70,533.93 1026.02,532.30 1028.33,530.67 1030.63,529.04 1032.92,527.41 1035.21,525.78 1037.48,524.15 1039.74,522.52 1041.99,520.89 1044.23,519.26 1046.46,517.63 1048.68,516.00 1050.89,514.37 1053.08,512.74 1055.27,511.11 1057.44,509.48 1059.60,507.85 1061.75,506.22 1063.89,504.59 1066.02,502.96 1068.13,501.33 1070.23,499.70 1072.31,498.07 1074.39,496.44 1076.45,494.81 1078.50,493.18 1080.53,491.55 1082.55,489.92 1084.56,488.29 1086.55,486.66 1088.53,485.03 1090.50,483.40 1092.45,481.77 1094.38,480.14 1096.30,478.51 1098.21,476.88 1100.10,475.25 1101.98,473.62 1103.84,471.99 1105.69,470.36 1107.52,468.73 1109.33,467.10 1111.13,465.47 1112.92,463.84 1114.68,462.21 1116.43,460.58 1118.17,458.95 1119.89,457.32 1121.59,455.69 1123.27,454.06 1124.94,452.43 1126.59,450.80 1128.23,449.17 1129.84,447.54 1131.44,445.91 1133.03,444.28 1134.59,442.65 1136.14,441.02 1137.67,439.39 1139.18,437.76 1140.67,436.13 1142.15,434.50 1143.60,432.87 1145.04,431.24 1146.46,429.61 1147.86,427.98 1149.25,426.35 1150.61,424.72 1151.95,423.09 1153.28,421.46 1154.59,419.83 1155.87,418.20 1157.14,416.57 1158.39,414.94 1159.62,413.31 1160.83,411.68 1162.02,410.05 1163.19,408.42 1164.34,406.79 1165.47,405.16 1166.58,403.53 1167.67,401.90 1168.74,400.27 1169.79,398.64 1170.82,397.01 1171.83,395.38 1172.82,393.75 1173.79,392.12 1174.73,390.49 1175.66,388.86 1176.56,387.23 1177.45,385.60 1178.31,383.97 1179.15,382.34 1179.98,380.71 1180.78,379.08 1181.56,377.45 1182.31,375.82 1183.05,374.19 1183.77,372.56 1184.46,370.93 1185.13,369.30 1185.78,367.67 1186.41,366.04 1187.02,364.41 1187.60,362.78 1188.17,361.15 1188.71,359.52 1189.23,357.89 1189.73,356.26 1190.21,354.63 1190.66,353.00 1191.09,351.37 1191.50,349.74 1191.89,348.11 1192.26,346.48 1192.60,344.85 1192.93,343.22 1193.23,341.59 1193.51,339.96 1193.76,338.33 1194.00,336.70 1194.21,335.07 1194.40,333.44 1194.56,331.81 1194.71,330.18 1194.83,328.55 1194.93,326.92 1195.01,325.29 1195.07,323.66 1195.10,322.03 1195.11,320.40 1195.10,318.77 1195.07,317.14 1195.01,315.51 1194.93,313.88 1194.83,312.25 1194.71,310.62 1194.56,308.99 1194.40,307.36 1194.21,305.73 1194.00,304.10 1193.76,302.47 1193.51,300.84 1193.23,299.21 1192.93,297.58 1192.60,295.95 1192.26,294.32 1191.89,292.69 1191.50,291.06 1191.09,289.43 1190.66,287.80 1190.21,286.17 1189.73,284.54 1189.23,282.91 1188.71,281.28 1188.17,279.65 1187.60,278.02 1187.02,276.39 1186.41,274.76 1185.78,273.13 1185.13,271.50 1184.46,269.87 1183.77,268.24 1183.05,266.61 1182.31,264.98 1181.56,263.35 1180.78,261.72 1179.98,260.09 1179.15,258.46 1178.31,256.83 1177.45,255.20 1176.56,253.57 1175.66,251.94 1174.73,250.31 1173.79,248.68 1172.82,247.05 1171.83,245.42 1170.82,243.79 1169.79,242.16 1168.74,240.53 1167.67,238.90 1166.58,237.27 1165.47,235.64 1164.34,234.01 1163.19,232.38 1162.02,230.75 1160.83,229.12 1159.62,227.49 1158.39,225.86 1157.14,224.23 1155.87,222.60 1154.59,220.97 1153.28,219.34 1151.95,217.71 1150.61,216.08 1149.25,214.45 1147.86,212.82 1146.46,211.19 1145.04,209.56 1143.60,207.93 1142.15,206.30 1140.67,204.67 1139.18,203.04 1137.67,201.41 1136.14,199.78 1134.59,198.15 1133.03,196.52 1131.44,194.89 1129.84,193.26 1128.23,191.63 1126.59,190.00 1124.94,188.37 1123.27,186.74 1121.59,185.11 1119.89,183.48 1118.17,181.85 1116.43,180.22 1114.68,178.59 1112.92,176.96 1111.13,175.33 1109.33,173.70 1107.52,172.07 1105.69,170.44 1103.84,168.81 1101.98,167.18 1100.10,165.55 1098.21,163.92 1096.30,162.29 1094.38,160.66 1092.45,159.03 1090.50,157.40 1088.53,155.77 1086.55,154.14 1084.56,152.51 1082.55,150.88 1080.53,149.25 1078.50,147.62 1076.45,145.99 1074.39,144.36 1072.31,142.73 1070.23,141.10 1068.13,139.47 1066.02,137.84 1063.89,136.21 1061.75,134.58 1059.60,132.95 1057.44,131.32 1055.27,129.69 1053.08,128.06 1050.89,126.43 1048.68,124.80 1046.46,123.17 1044.23,121.54 1041.99,119.91 1039.74,118.28 1037.48,116.65 1035.21,115.02 1032.92,113.39 1030.63,111.76 1028.33,110.13 1026.02,108.50 1023.70,106.87 1021.37,105.24 1019.03,103.61 1016.68,101.98 1014.32,100.35 1011.96,98.72 1009.58,97.09 1007.20,95.46 1004.81,93.83 1002.41,92.20 1000.01,90.57 997.60,88.94 995.18,87.31 992.75,85.68 990.31,84.05 987.87,82.42 985.43,80.79 982.97,79.16 980.51,77.53 978.05,75.90 975.58,74.27 973.10,72.64 970.62,71.01 968.13,69.38 965.64,67.75 963.14,66.12 960.64,64.49 958.13,62.86 955.62,61.23 953.10,59.60 950.59,57.97 948.06,56.34 945.54,54.71 943.01,53.08 940.48,51.45 937.94,49.82 935.40,48.19 932.86,46.56 930.32,44.93 927.77,43.30 925.23,41.67 922.68,40.04 920.13,38.41 917.58,36.78 915.02,35.15 912.47,33.52 909.92,31.89 907.36,30.26 904.81,28.63 902.25,27.00"/>
<polyline points="902.25,613.80 904.38,612.17 906.51,610.54 908.64,608.91 910.77,607.28 912.90,605.65 915.02,604.02 917.15,602.39 919.27,600.76 921.40,599.13 923.52,597.50 925.64,595.87 927.76,594.24 929.88,592.61 931.99,590.98 934.10,589.35 936.22,587.72 938.32,586.09 940.43,584.46 942.53,582.83 944.63,581.20 946.72,579.57 948.82,577.94 950.91,576.31 952.99,574.68 955.07,573.05 957.15,571.42 959.22,569.79 961.29,568.16 963.36,566.53 965.41,564.90 967.47,563.27 969.52,561.64 971.56,560.01 973.60,558.38 975.64,556.75 977.67,555.12 979.69,553.49 981.70,551.86 983.72,550.23 985.72,548.60 987.72,546.97 989.71,545.34 991.69,543.71 993.67,542.08 995.64,540.45 997.61,538.82 999.56,537.19 1001.51,535.56 1003.46,533.93 1005.39,532.30 1007.32,530.67 1009.23,529.04 1011.14,527.41 1013.05,525.78 1014.94,524.15 1016.82,522.52 1018.70,520.89 1020.57,519.26 1022.43,517.63 1024.28,516.00 1026.11,514.37 1027.95,512.74 1029.77,511.11 1031.58,509.48 1033.38,507.85 1035.17,506.22 1036.95,504.59 1038.72,502.96 1040.48,501.33 1042.23,499.70 1043.97,498.07 1045.70,496.44 1047.42,494.81 1049.12,493.18 1050.82,491.55 1052.50,489.92 1054.17,488.29 1055.84,486.66 1057.48,485.03 1059.12,483.40 1060.75,481.77 1062.36,480.14 1063.96,478.51 1065.55,476.88 1067.13,475.25 1068.69,473.62 1070.24,471.99 1071.78,470.36 1073.31,468.73 1074.82,467.10 1076.32,465.47 1077.80,463.84 1079.28,462.21 1080.74,460.58 1082.18,458.95 1083.61,457.32 1085.03,455.69 1086.44,454.06 1087.83,452.43 1089.20,450.80 1090.56,449.17 1091.91,447.54 1093.25,445.91 1094.56,444.28 1095.87,442.65 1097.16,441.02 1098.43,439.39 1099.69,437.76 1100.93,436.13 1102.16,434.50 1103.38,432.87 1104.58,431.24 1105.76,429.61 1106.93,427.98 1108.08,426.35 1109.22,424.72 1110.34,423.09 1111.44,421.46 1112.53,419.83 1113.60,418.20 1114.66,416.57 1115.70,414.94 1116.73,413.31 1117.73,411.68 1118.72,410.05 1119.70,408.42 1120.66,406.79 1121.60,405.16 1122.53,403.53 1123.43,401.90 1124.33,400.27 1125.20,398.64 1126.06,397.01 1126.90,395.38 1127.72,393.75 1128.53,392.12 1129.32,390.49 1130.09,388.86 1130.84,387.23 1131.58,385.60 1132.30,383.97 1133.00,382.34 1133.69,380.71 1134.36,379.08 1135.00,377.45 1135.64,375.82 1136.25,374.19 1136.85,372.56 1137.42,370.93 1137.98,369.30 1138.53,367.67 1139.05,366.04 1139.56,364.41 1140.05,362.78 1140.52,361.15 1140.97,359.52 1141.40,357.89 1141.82,356.26 1142.21,354.63 1142.59,353.00 1142.95,351.37 1143.30,349.74 1143.62,348.11 1143.92,346.48 1144.21,344.85 1144.48,343.22 1144.73,341.59 1144.96,339.96 1145.18,338.33 1145.37,336.70 1145.55,335.07 1145.71,333.44 1145.84,331.81 1145.97,330.18 1146.07,328.55 1146.15,326.92 1146.22,325.29 1146.26,323.66 1146.29,322.03 1146.30,320.40 1146.29,318.77 1146.26,317.14 1146.22,315.51 1146.15,313.88 1146.07,312.25 1145.97,310.62 1145.84,308.99 1145.71,307.36 1145.55,305.73 1145.37,304.10 1145.18,302.47 1144.96,300.84 1144.73,299.21 1144.48,297.58 1144.21,295.95 1143.92,294.32 1143.62,292.69 1143.30,291.06 1142.95,289.43 1142.59,287.80 1142.21,286.17 1141.82,284.54 1141.40,282.91 1140.97,281.28 1140.52,279.65 1140.05,278.02 1139.56,276.39 1139.05,274.76 1138.53,273.13 1137.98,271.50 1137.42,269.87 1136.85,268.24 1136.25,266.61 1135.64,264.98 1135.00,263.35 1134.36,261.72 1133.69,260.09 1133.00,258.46 1132.30,256.83 1131.58,255.20 1130.84,253.57 1130.09,251.94 1129.32,250.31 1128.53,248.68 1127.72,247.05 1126.90,245.42 1126.06,243.79 1125.20,242.16 1124.33,240.53 1123.43,238.90 1122.53,237.27 1121.60,235.64 1120.66,234.01 1119.70,232.38 1118.72,230.75 1117.73,229.12 1116.73,227.49 1115.70,225.86 1114.66,224.23 1113.60,222.60 1112.53,220.97 1111.44,219.34 1110.34,217.71 1109.22,216.08 1108.08,214.45 1106.93,212.82 1105.76,211.19 1104.58,209.56 1103.38,207.93 1102.16,206.30 1100.93,204.67 1099.69,203.04 1098.43,201.41 1097.16,199.78 1095.87,198.15 1094.56,196.52 1093.25,194.89 1091.91,193.26 1090.56,191.63 1089.20,190.00 1087.83,188.37 1086.44,186.74 1085.03,185.11 1083.61,183.48 1082.18,181.85 1080.74,180.22 1079.28,178.59 1077.80,176.96 1076.32,175.33 1074.82,173.70 1073.31,172.07 1071.78,170.44 1070.24,168.81 1068.69,167.18 1067.13,165.55 1065.55,163.92 1063.96,162.29 1062.36,160.66 1060.75,159.03 1059.12,157.40 1057.48,155.77 1055.84,154.14 1054.17,152.51 1052.50,150.88 1050.82,149.25 1049.12,147.62 1047.42,145.99 1045.70,144.36 1043.97,142.73 1042.23,141.10 1040.48,139.47 1038.72,137.84 1036.95,136.21 1035.17,134.58 1033.38,132.95 1031.58,131.32 1029.77,129.69 1027.95,128.06 1026.11,126.43 1024.28,124.80 1022.43,123.17 1020.57,121.54 1018.70,119.91 1016.82,118.28 1014.94,116.65 1013.05,115.02 1011.14,113.39 1009.23,111.76 1007.32,110.13 1005.39,108.50 1003.46,106.87 1001.51,105.24 999.56,103.61 997.61,101.98 995.64,100.35 993.67,98.72 991.69,97.09 989.71,95.46 987.72,93.83 985.72,92.20 983.72,90.57 981.70,88.94 979.69,87.31 977.67,85.68 975.64,84.05 973.60,82.42 971.56,80.79 969.52,79.16 967.47,77.53 965.41,75.90 963.36,74.27 961.29,72.64 959.22,71.01 957.15,69.38 955.07,67.75 952.99,66.12 950.91,64.49 948.82,62.86 946.72,61.23 944.63,59.60 942.53,57.97 940.43,56.34 938.32,54.71 936.22,53.08 934.10,51.45 931.99,49.82 929.88,48.19 927.76,46.56 925.64,44.93 923.52,43.30 921.40,41.67 919.27,40.04 917.15,38.41 915.02,36.78 912.90,35.15 910.77,33.52 908.64,31.89 906.51,30.26 904.38,28.63 902.25,27.00"/>
<polyline points="902.25,613.80 903.95,612.17 905.66,610.54 907.36,608.91 909.06,607.28 910.77,605.65 912.47,604.02 914.17,602.39 915.87,600.76 917.57,599.13 919.27,597.50 920.96,595.87 922.66,594.24 924.35,592.61 926.04,590.98 927.73,589.35 929.42,587.72 931.11,586.09 932.79,584.46 934.47,582.83 936.15,581.20 937.83,579.57 939.50,577.94 941.17,576.31 942.84,574.68 944.51,573.05 946.17,571.42 947.83,569.79 949.48,568.16 951.13,566.53 952.78,564.90 954.43,563.27 956.07,561.64 957.70,560.01 959.33,558.38 960.96,556.75 962.58,555.12 964.20,553.49 965.81,551.86 967.42,550.23 969.03,548.60 970.62,546.97 972.22,545.34 973.81,543.71 975.39,542.08 976.97,540.45 978.54,538.82 980.10,537.19 981.66,535.56 983.21,533.93 984.76,532.30 986.30,530.67 987.84,529.04 989.37,527.41 990.89,525.78 992.40,524.15 993.91,522.52 995.41,520.89 996.90,519.26 998.39,517.63 999.87,516.00 1001.34,514.37 1002.81,512.74 1004.26,511.11 1005.71,509.48 1007.15,507.85 1008.59,506.22 1010.01,504.59 1011.43,502.96 1012.84,501.33 1014.24,499.70 1015.63,498.07 1017.01,496.44 1018.38,494.81 1019.75,493.18 1021.10,491.55 1022.45,489.92 1023.79,488.29 1025.12,486.66 1026.44,485.03 1027.75,483.40 1029.05,481.77 1030.34,480.14 1031.62,478.51 1032.89,476.88 1034.15,475.25 1035.40,473.62 1036.64,471.99 1037.88,470.36 1039.10,468.73 1040.31,467.10 1041.51,465.47 1042.69,463.84 1043.87,462.21 1045.04,460.58 1046.20,458.95 1047.34,457.32 1048.48,455.69 1049.60,454.06 1050.71,452.43 1051.81,450.80 1052.90,449.17 1053.98,447.54 1055.05,445.91 1056.10,444.28 1057.14,442.65 1058.18,441.02 1059.20,439.39 1060.20,437.76 1061.20,436.13 1062.18,434.50 1063.15,432.87 1064.11,431.24 1065.06,429.61 1065.99,427.98 1066.91,426.35 1067.82,424.72 1068.72,423.09 1069.60,421.46 1070.47,419.83 1071.33,418.20 1072.18,416.57 1073.01,414.94 1073.83,413.31 1074.64,411.68 1075.43,410.05 1076.21,408.42 1076.98,406.79 1077.73,405.16 1078.47,403.53 1079.20,401.90 1079.91,400.27 1080.61,398.64 1081.30,397.01 1081.97,395.38 1082.63,393.75 1083.27,392.12 1083.90,390.49 1084.52,388.86 1085.13,387.23 1085.72,385.60 1086.29,383.97 1086.85,382.34 1087.40,380.71 1087.93,379.08 1088.45,377.45 1088.96,375.82 1089.45,374.19 1089.93,372.56 1090.39,370.93 1090.84,369.30 1091.27,367.67 1091.69,366.04 1092.10,364.41 1092.49,362.78 1092.86,361.15 1093.22,359.52 1093.57,357.89 1093.90,356.26 1094.22,354.63 1094.52,353.00 1094.81,351.37 1095.09,349.74 1095.35,348.11 1095.59,346.48 1095.82,344.85 1096.03,343.22 1096.23,341.59 1096.42,339.96 1096.59,338.33 1096.75,336.70 1096.89,335.07 1097.01,333.44 1097.13,331.81 1097.22,330.18 1097.30,328.55 1097.37,326.92 1097.42,325.29 1097.46,323.66 1097.48,322.03 1097.49,320.40 1097.48,318.77 1097.46,317.14 1097.42,315.51 1097.37,313.88 1097.30,312.25 1097.22,310.62 1097.13,308.99 1097.01,307.36 1096.89,305.73 1096.75,304.10 1096.59,302.47 1096.42,300.84 1096.23,299.21 1096.03,297.58 1095.82,295.95 1095.59,294.32 1095.35,292.69 1095.09,291.06 1094.81,289.43 1094.52,287.80 1094.22,286.17 1093.90,284.54 1093.57,282.91 1093.22,281.28 1092.86,279.65 1092.49,278.02 1092.10,276.39 1091.69,274.76 1091.27,273.13 1090.84,271.50 1090.39,269.87 1089.93,268.24 1089.45,266.61 1088.96,264.98 1088.45,263.35 1087.93,261.72 1087.40,260.09 1086.85,258.46 1086.29,256.83 1085.72,255.20 1085.13,253.57 1084.52,251.94 1083.90,250.31 1083.27,248.68 1082.63,247.05 1081.97,245.42 1081.30,243.79 1080.61,242.16 1079.91,240.53 1079.20,238.90 1078.47,237.27 1077.73,235.64 1076.98,234.01 1076.21,232.38 1075.43,230.75 1074.64,229.12 1073.83,227.49 1073.01,225.86 1072.18,224.23 1071.33,222.60 1070.47,220.97 1069.60,219.34 1068.72,217.71 1067.82,216.08 1066.91,214.45 1065.99,212.82 1065.06,211.19 1064.11,209.56 1063.15,207.93 1062.18,206.30 1061.20,204.67 1060.20,203.04 1059.20,201.41 1058.18,199.78 1057.14,198.15 1056.10,196.52 1055.05,194.89 1053.98,193.26 1052.90,191.63 1051.81,190.00 1050.71,188.37 1049.60,186.74 1048.48,185.11 1047.34,183.48 1046.20,181.85 1045.04,180.22 1043.87,178.59 1042.69,176.96 1041.51,175.33 1040.31,173.70 1039.10,172.07 1037.88,170.44 1036.64,168.81 1035.40,167.18 1034.15,165.55 1032.89,163.92 1031.62,162.29 1030.34,160.66 1029.05,159.03 1027.75,157.40 1026.44,155.77 1025.12,154.14 1023.79,152.51 1022.45,150.88 1021.10,149.25 1019.75,147.62 1018.38,145.99 1017.01,144.36 1015.63,142.73 1014.24,141.10 1012.84,139.47 1011.43,137.84 1010.01,136.21 1008.59,134.58 1007.15,132.95 1005.71,131.32 1004.26,129.69 1002.81,128.06 1001.34,126.43 999.87,124.80 998.39,123.17 996.90,121.54 995.41,119.91 993.91,118.28 992.40,116.65 990.89,115.02 989.37,113.39 987.84,111.76 986.30,110.13 984.76,108.50 983.21,106.87 981.66,105.24 980.10,103.61 978.54,101.98 976.97,100.35 975.39,98.72 973.81,97.09 972.22,95.46 970.62,93.83 969.03,92.20 967.42,90.57 965.81,88.94 964.20,87.31 962.58,85.68 960.96,84.05 959.33,82.42 957.70,80.79 956.07,79.16 954.43,77.53 952.78,75.90 951.13,74.27 949.48,72.64 947.83,71.01 946.17,69.38 944.51,67.75 942.84,66.12 941.17,64.49 939.50,62.86 937.83,61.23 936.15,59.60 934.47,57.97 932.79,56.34 931.11,54.71 929.42,53.08 927.73,51.45 926.04,49.82 924.35,48.19 922.66,46.56 920.96,44.93 919.27,43.30 917.57,41.67 915.87,40.04 914.17,38.41 912.47,36.78 910.77,35.15 909.06,33.52 907.36,31.89 905.66,30.26 903.95,28.63 902.25,27.00"/>
<polyline points="902.25,613.80 903.53,612.17 904.81,610.54 906.08,608.91 907.36,607.28 908.64,605.65 909.91,604.02 911.19,602.39 912.46,600.76 913.74,599.13 915.01,597.50 916.28,595.87 917.56,594.24 918.83,592.61 920.10,590.98 921.36,589.35 922.63,587.72 923.89,586.09 925.16,584.46 926.42,582.83 927.68,581.20 928.93,579.57 930.19,577.94 931.44,576.31 932.69,574.68 933.94,573.05 935.19,571.42 936.43,569.79 937.67,568.16 938.91,566.53 940.15,564.90 941.38,563.27 942.61,561.64 943.84,560.01 945.06,558.38 946.28,556.75 947.50,555.12 948.71,553.49 949.92,551.86 951.13,550.23 952.33,548.60 953.53,546.97 954.73,545.34 955.92,543.71 957.10,542.08 958.29,540.45 959.46,538.82 960.64,537.19 961.81,535.56 962.97,533.93 964.13,532.30 965.29,530.67 966.44,529.04 967.59,527.41 968.73,525.78 969.86,524.15 970.99,522.52 972.12,520.89 973.24,519.26 974.36,517.63 975.47,516.00 976.57,514.37 977.67,512.74 978.76,511.11 979.85,509.48 980.93,507.85 982.00,506.22 983.07,504.59 984.13,502.96 985.19,501.33 986.24,499.70 987.28,498.07 988.32,496.44 989.35,494.81 990.37,493.18 991.39,491.55 992.40,489.92 993.40,488.29 994.40,486.66 995.39,485.03 996.37,483.40 997.35,481.77 998.32,480.14 999.28,478.51 1000.23,476.88 1001.18,475.25 1002.12,473.62 1003.05,471.99 1003.97,470.36 1004.88,468.73 1005.79,467.10 1006.69,465.47 1007.58,463.84 1008.47,462.21 1009.34,460.58 1010.21,458.95 1011.07,457.32 1011.92,455.69 1012.76,454.06 1013.60,452.43 1014.42,450.80 1015.24,449.17 1016.05,447.54 1016.85,445.91 1017.64,444.28 1018.42,442.65 1019.19,441.02 1019.96,439.39 1020.71,437.76 1021.46,436.13 1022.20,434.50 1022.93,432.87 1023.65,431.24 1024.36,429.61 1025.06,427.98 1025.75,426.35 1026.43,424.72 1027.10,423.09 1027.77,421.46 1028.42,419.83 1029.06,418.20 1029.70,416.57 1030.32,414.94 1030.94,413.31 1031.54,411.68 1032.13,410.05 1032.72,408.42 1033.30,406.79 1033.86,405.16 1034.42,403.53 1034.96,401.90 1035.50,400.27 1036.02,398.64 1036.54,397.01 1037.04,395.38 1037.53,393.75 1038.02,392.12 1038.49,390.49 1038.95,388.86 1039.41,387.23 1039.85,385.60 1040.28,383.97 1040.70,382.34 1041.11,380.71 1041.51,379.08 1041.90,377.45 1042.28,375.82 1042.65,374.19 1043.01,372.56 1043.35,370.93 1043.69,369.30 1044.02,367.67 1044.33,366.04 1044.63,364.41 1044.93,362.78 1045.21,361.15 1045.48,359.52 1045.74,357.89 1045.99,356.26 1046.23,354.63 1046.46,353.00 1046.67,351.37 1046.88,349.74 1047.07,348.11 1047.25,346.48 1047.43,344.85 1047.59,343.22 1047.74,341.59 1047.88,339.96 1048.01,338.33 1048.12,336.70 1048.23,335.07 1048.32,333.44 1048.41,331.81 1048.48,330.18 1048.54,328.55 1048.59,326.92 1048.63,325.29 1048.66,323.66 1048.67,322.03 1048.68,320.40 1048.67,318.77 1048.66,317.14 1048.63,315.51 1048.59,313.88 1048.54,312.25 1048.48,310.62 1048.41,308.99 1048.32,307.36 1048.23,305.73 1048.12,304.10 1048.01,302.47 1047.88,300.84 1047.74,299.21 1047.59,297.58 1047.43,295.95 1047.25,294.32 1047.07,292.69 1046.88,291.06 1046.67,289.43 1046.46,287.80 1046.23,286.17 1045.99,284.54 1045.74,282.91 1045.48,281.28 1045.21,279.65 1044.93,278.02 1044.63,276.39 1044.33,274.76 1044.02,273.13 1043.69,271.50 1043.35,269.87 1043.01,268.24 1042.65,266.61 1042.28,264.98 1041.90,263.35 1041.51,261.72 1041.11,260.09 1040.70,258.46 1040.28,256.83 1039.85,255.20 1039.41,253.57 1038.95,251.94 1038.49,250.31 1038.02,248.68 1037.53,247.05 1037.04,245.42 1036.54,243.79 1036.02,242.16 1035.50,240.53 1034.96,238.90 1034.42,237.27 1033.86,235.64 1033.30,234.01 1032.72,232.38 1032.13,230.75 1031.54,229.12 1030.94,227.49 1030.32,225.86 1029.70,224.23 1029.06,222.60 1028.42,220.97 1027.77,219.34 1027.10,217.71 1026.43,216.08 1025.75,214.45 1025.06,212.82 1024.36,211.19 1023.65,209.56 1022.93,207.93 1022.20,206.30 1021.46,204.67 1020.71,203.04 1019.96,201.41 1019.19,199.78 1018.42,198.15 1017.64,196.52 1016.85,194.89 1016.05,193.26 1015.24,191.63 1014.42,190.00 1013.60,188.37 1012.76,186.74 1011.92,185.11 1011.07,183.48 1010.21,181.85 1009.34,180.22 1008.47,178.59 1007.58,176.96 1006.69,175.33 1005.79,173.70 1004.88,172.07 1003.97,170.44 1003.05,168.81 1002.12,167.18 1001.18,165.55 1000.23,163.92 999.28,162.29 998.32,160.66 997.35,159.03 996.37,157.40 995.39,155.77 994.40,154.14 993.40,152.51 992.40,150.88 991.39,149.25 990.37,147.62 989.35,145.99 988.32,144.36 987.28,142.73 986.24,141.10 985.19,139.47 984.13,137.84 983.07,136.21 982.00,134.58 980.93,132.95 979.85,131.32 978.76,129.69 977.67,128.06 976.57,126.43 975.47,124.80 974.36,123.17 973.24,121.54 972.12,119.91 970.99,118.28 969.86,116.65 968.73,115.02 967.59,113.39 966.44,111.76 965.29,110.13 964.13,108.50 962.97,106.87 961.81,105.24 960.64,103.61 959.46,101.98 958.29,100.35 957.10,98.72 955.92,97.09 954.73,95.46 953.53,93.83 952.33,92.20 951.13,90.57 949.92,88.94 948.71,87.31 947.50,85.68 946.28,84.05 945.06,82.42 943.84,80.79 942.61,79.16 941.38,77.53 940.15,75.90 938.91,74.27 937.67,72.64 936.43,71.01 935.19,69.38 933.94,67.75 932.69,66.12 931.44,64.49 930.19,62.86 928.93,61.23 927.68,59.60 926.42,57.97 925.16,56.34 923.89,54.71 922.63,53.08 921.36,51.45 920.10,49.82 918.83,48.19 917.56,46.56 916.28,44.93 915.01,43.30 913.74,41.67 912.46,40.04 911.19,38.41 909.91,36.78 908.64,35.15 907.36,33.52 906.08,31.89 904.81,30.26 903.53,28.63 902.25,27.00"/>
<polyline points="902.25,613.80 903.10,612.17 903.95,610.54 904.81,608.91 905.66,607.28 906.51,605.65 907.36,604.02 908.21,602.39 909.06,600.76 909.91,599.13 910.76,597.50 911.61,595.87 912.45,594.24 913.30,592.61 914.15,590.98 914.99,589.35 915.84,587.72 916.68,586.09 917.52,584.46 918.36,582.83 919.20,581.20 920.04,579.57 920.88,577.94 921.71,576.31 922.55,574.68 923.38,573.05 924.21,571.42 925.04,569.79 925.87,568.16 926.69,566.53 927.52,564.90 928.34,563.27 929.16,561.64 929.98,560.01 930.79,558.38 931.60,556.75 932.42,555.12 933.23,553.49 934.03,551.86 934.84,550.23 935.64,548.60 936.44,546.97 937.23,545.34 938.03,543.71 938.82,542.08 939.61,540.45 940.39,538.82 941.18,537.19 941.96,535.56 942.73,533.93 943.51,532.30 944.28,530.67 945.04,529.04 945.81,527.41 946.57,525.78 947.33,524.15 948.08,522.52 948.83,520.89 949.58,519.26 950.32,517.63 951.06,516.00 951.80,514.37 952.53,512.74 953.26,511.11 953.98,509.48 954.70,507.85 955.42,506.22 956.13,504.59 956.84,502.96 957.54,501.33 958.24,499.70 958.94,498.07 959.63,496.44 960.32,494.81 961.00,493.18 961.68,491.55 962.35,489.92 963.02,488.29 963.68,486.66 964.34,485.03 965.00,483.40 965.65,481.77 966.29,480.14 966.93,478.51 967.57,476.88 968.20,475.25 968.83,473.62 969.45,471.99 970.06,470.36 970.67,468.73 971.28,467.10 971.88,465.47 972.47,463.84 973.06,462.21 973.64,460.58 974.22,458.95 974.80,457.32 975.36,455.69 975.92,454.06 976.48,452.43 977.03,450.80 977.58,449.17 978.11,447.54 978.65,445.91 979.18,444.28 979.70,442.65 980.21,441.02 980.72,439.39 981.23,437.76 981.72,436.13 982.22,434.50 982.70,432.87 983.18,431.24 983.65,429.61 984.12,427.98 984.58,426.35 985.04,424.72 985.48,423.09 985.93,421.46 986.36,419.83 986.79,418.20 987.21,416.57 987.63,414.94 988.04,413.31 988.44,411.68 988.84,410.05 989.23,408.42 989.61,406.79 989.99,405.16 990.36,403.53 990.72,401.90 991.08,400.27 991.43,398.64 991.77,397.01 992.11,395.38 992.44,393.75 992.76,392.12 993.08,390.49 993.39,388.86 993.69,387.23 993.98,385.60 994.27,383.97 994.55,382.34 994.83,380.71 995.09,379.08 995.35,377.45 995.60,375.82 995.85,374.19 996.09,372.56 996.32,370.93 996.54,369.30 996.76,367.67 996.97,366.04 997.17,364.41 997.37,362.78 997.56,361.15 997.74,359.52 997.91,357.89 998.08,356.26 998.24,354.63 998.39,353.00 998.53,351.37 998.67,349.74 998.80,348.11 998.92,346.48 999.03,344.85 999.14,343.22 999.24,341.59 999.34,339.96 999.42,338.33 999.50,336.70 999.57,335.07 999.63,333.44 999.69,331.81 999.74,330.18 999.78,328.55 999.81,326.92 999.84,325.29 999.86,323.66 999.87,322.03 999.87,320.40 999.87,318.77 999.86,317.14 999.84,315.51 999.81,313.88 999.78,312.25 999.74,310.62 999.69,308.99 999.63,307.36 999.57,305.73 999.50,304.10 999.42,302.47 999.34,300.84 999.24,299.21 999.14,297.58 999.03,295.95 998.92,294.32 998.80,292.69 998.67,291.06 998.53,289.43 998.39,287.80 998.24,286.17 998.08,284.54 997.91,282.91 997.74,281.28 997.56,279.65 997.37,278.02 997.17,276.39 996.97,274.76 996.76,273.13 996.54,271.50 996.32,269.87 996.09,268.24 995.85,266.61 995.60,264.98 995.35,263.35 995.09,261.72 994.83,260.09 994.55,258.46 994.27,256.83 993.98,255.20 993.69,253.57 993.39,251.94 993.08,250.31 992.76,248.68 992.44,247.05 992.11,245.42 991.77,243.79 991.43,242.16 991.08,240.53 990.72,238.90 990.36,237.27 989.99,235.64 989.61,234.01 989.23,232.38 988.84,230.75 988.44,229.12 988.04,227.49 987.63,225.86 987.21,224.23 986.79,222.60 986.36,220.97 985.93,219.34 985.48,217.71 985.04,216.08 984.58,214.45 984.12,212.82 983.65,211.19 983.18,209.56 982.70,207.93 982.22,206.30 981.72,204.67 981.23,203.04 980.72,201.41 980.21,199.78 979.70,198.15 979.18,196.52 978.65,194.89 978.11,193.26 977.58,191.63 977.03,190.00 976.48,188.37 975.92,186.74 975.36,185.11 974.80,183.48 974.22,181.85 973.64,180.22 973.06,178.59 972.47,176.96 971.88,175.33 971.28,173.70 970.67,172.07 970.06,170.44 969.45,168.81 968.83,167.18 968.20,165.55 967.57,163.92 966.93,162.29 966.29,160.66 965.65,159.03 965.00,157.40 964.34,155.77 963.68,154.14 963.02,152.51 962.35,150.88 961.68,149.25 961.00,147.62 960.32,145.99 959.63,144.36 958.94,142.73 958.24,141.10 957.54,139.47 956.84,137.84 956.13,136.21 955.42,134.58 954.70,132.95 953.98,131.32 953.26,129.69 952.53,128.06 951.80,126.43 951.06,124.80 950.32,123.17 949.58,121.54 948.83,119.91 948.08,118.28 947.33,116.65 946.57,115.02 945.81,113.39 945.04,111.76 944.28,110.13 943.51,108.50 942.73,106.87 941.96,105.24 941.18,103.61 940.39,101.98 939.61,100.35 938.82,98.72 938.03,97.09 937.23,95.46 936.44,93.83 935.64,92.20 934.84,90.57 934.03,88.94 933.23,87.31 932.42,85.68 931.60,84.05 930.79,82.42 929.98,80.79 929.16,79.16 928.34,77.53 927.52,75.90 926.69,74.27 925.87,72.64 925.04,71.01 924.21,69.38 923.38,67.75 922.55,66.12 921.71,64.49 920.88,62.86 920.04,61.23 919.20,59.60 918.36,57.97 917.52,56.34 916.68,54.71 915.84,53.08 914.99,51.45 914.15,49.82 913.30,48.19 912.45,46.56 911.61,44.93 910.76,43.30 909.91,41.67 909.06,40.04 908.21,38.41 907.36,36.78 906.51,35.15 905.66,33.52 904.81,31.89 903.95,30.26 903.10,28.63 902.25,27.00"/>
<polyline points="902.25,613.80 902.68,612.17 903.10,610.54 903.53,608.91 903.95,607.28 904.38,605.65 904.80,604.02 905.23,602.39 905.65,600.76 906.08,599.13 906.50,597.50 906.93,595.87 907.35,594.24 907.78,592.61 908.20,590.98 908.62,589.35 909.04,587.72 909.46,586.09 909.89,584.46 910.31,582.83 910.73,581.20 911.14,579.57 911.56,577.94 911.98,576.31 912.40,574.68 912.81,573.05 913.23,571.42 913.64,569.79 914.06,568.16 914.47,566.53 914.88,564.90 915.29,563.27 915.70,561.64 916.11,560.01 916.52,558.38 916.93,556.75 917.33,555.12 917.74,553.49 918.14,551.86 918.54,550.23 918.94,548.60 919.34,546.97 919.74,545.34 920.14,543.71 920.53,542.08 920.93,540.45 921.32,538.82 921.71,537.19 922.10,535.56 922.49,533.93 922.88,532.30 923.26,530.67 923.65,529.04 924.03,527.41 924.41,525.78 924.79,524.15 925.16,522.52 925.54,520.89 925.91,519.26 926.29,517.63 926.65,516.00 927.02,514.37 927.39,512.74 927.75,511.11 928.12,509.48 928.48,507.85 928.83,506.22 929.19,504.59 929.54,502.96 929.90,501.33 930.25,499.70 930.59,498.07 930.94,496.44 931.28,494.81 931.62,493.18 931.96,491.55 932.30,489.92 932.63,488.29 932.97,486.66 933.30,485.03 933.62,483.40 933.95,481.77 934.27,480.14 934.59,478.51 934.91,476.88 935.23,475.25 935.54,473.62 935.85,471.99 936.16,470.36 936.46,468.73 936.76,467.10 937.06,465.47 937.36,463.84 937.66,462.21 937.95,460.58 938.24,458.95 938.52,457.32 938.81,455.69 939.09,454.06 939.37,452.43 939.64,450.80 939.91,449.17 940.18,447.54 940.45,445.91 940.71,444.28 940.97,442.65 941.23,441.02 941.49,439.39 941.74,437.76 941.99,436.13 942.23,434.50 942.48,432.87 942.72,431.24 942.95,429.61 943.19,427.98 943.42,426.35 943.64,424.72 943.87,423.09 944.09,421.46 944.31,419.83 944.52,418.20 944.73,416.57 944.94,414.94 945.15,413.31 945.35,411.68 945.54,410.05 945.74,408.42 945.93,406.79 946.12,405.16 946.31,403.53 946.49,401.90 946.67,400.27 946.84,398.64 947.01,397.01 947.18,395.38 947.34,393.75 947.51,392.12 947.66,390.49 947.82,388.86 947.97,387.23 948.12,385.60 948.26,383.97 948.40,382.34 948.54,380.71 948.67,379.08 948.80,377.45 948.93,375.82 949.05,374.19 949.17,372.56 949.28,370.93 949.40,369.30 949.51,367.67 949.61,366.04 949.71,364.41 949.81,362.78 949.90,361.15 949.99,359.52 950.08,357.89 950.16,356.26 950.24,354.63 950.32,353.00 950.39,351.37 950.46,349.74 950.52,348.11 950.58,346.48 950.64,344.85 950.70,343.22 950.75,341.59 950.79,339.96 950.84,338.33 950.87,336.70 950.91,335.07 950.94,333.44 950.97,331.81 950.99,330.18 951.01,328.55 951.03,326.92 951.04,325.29 951.05,323.66 951.06,322.03 951.06,320.40 951.06,318.77 951.05,317.14 951.04,315.51 951.03,313.88 951.01,312.25 950.99,310.62 950.97,308.99 950.94,307.36 950.91,305.73 950.87,304.10 950.84,302.47 950.79,300.84 950.75,299.21 950.70,297.58 950.64,295.95 950.58,294.32 950.52,292.69 950.46,291.06 950.39,289.43 950.32,287.80 950.24,286.17 950.16,284.54 950.08,282.91 949.99,281.28 949.90,279.65 949.81,278.02 949.71,276.39 949.61,274.76 949.51,273.13 949.40,271.50 949.28,269.87 949.17,268.24 949.05,266.61 948.93,264.98 948.80,263.35 948.67,261.72 948.54,260.09 948.40,258.46 948.26,256.83 948.12,255.20 947.97,253.57 947.82,251.94 947.66,250.31 947.51,248.68 947.34,247.05 947.18,245.42 947.01,243.79 946.84,242.16 946.67,240.53 946.49,238.90 946.31,237.27 946.12,235.64 945.93,234.01 945.74,232.38 945.54,230.75 945.35,229.12 945.15,227.49 944.94,225.86 944.73,224.23 944.52,222.60 944.31,220.97 944.09,219.34 943.87,217.71 943.64,216.08 943.42,214.45 943.19,212.82 942.95,211.19 942.72,209.56 942.48,207.93 942.23,206.30 941.99,204.67 941.74,203.04 941.49,201.41 941.23,199.78 940.97,198.15 940.71,196.52 940.45,194.89 940.18,193.26 939.91,191.63 939.64,190.00 939.37,188.37 939.09,186.74 938.81,185.11 938.52,183.48 938.24,181.85 937.95,180.22 937.66,178.59 937.36,176.96 937.06,175.33 936.76,173.70 936.46,172.07 936.16,170.44 935.85,168.81 935.54,167.18 935.23,165.55 934.91,163.92 934.59,162.29 934.27,160.66 933.95,159.03 933.62,157.40 933.30,155.77 932.97,154.14 932.63,152.51 932.30,150.88 931.96,149.25 931.62,147.62 931.28,145.99 930.94,144.36 930.59,142.73 930.25,141.10 929.90,139.47 929.54,137.84 929.19,136.21 928.83,134.58 928.48,132.95 928.12,131.32 927.75,129.69 927.39,128.06 927.02,126.43 926.65,124.80 926.29,123.17 925.91,121.54 925.54,119.91 925.16,118.28 924.79,116.65 924.41,115.02 924.03,113.39 923.65,111.76 923.26,110.13 922.88,108.50 922.49,106.87 922.10,105.24 921.71,103.61 921.32,101.98 920.93,100.35 920.53,98.72 920.14,97.09 919.74,95.46 919.34,93.83 918.94,92.20 918.54,90.57 918.14,88.94 917.74,87.31 917.33,85.68 916.93,84.05 916.52,82.42 916.11,80.79 915.70,79.16 915.29,77.53 914.88,75.90 914.47,74.27 914.06,72.64 913.64,71.01 913.23,69.38 912.81,67.75 912.40,66.12 911.98,64.49 911.56,62.86 911.14,61.23 910.73,59.60 910.31,57.97 909.89,56.34 909.46,54.71 909.04,53.08 908.62,51.45 908.20,49.82 907.78,48.19 907.35,46.56 906.93,44.93 906.50,43.30 906.08,41.67 905.65,40.04 905.23,38.41 904.80,36.78 904.38,35.15 903.95,33.52 903.53,31.89 903.10,30.26 902.68,28.63 902.25,27.00"/>
<polyline points="902.25,613.80 902.25,612.17 902.25,610.54 902.25,608.91 902.25,607.28 902.25,605.65 902.25,604.02 902.25,602.39 902.25,600.76 902.25,599.13 902.25,597.50 902.25,595.87 902.25,594.24 902.25,592.61 902.25,590.98 902.25,589.35 902.25,587.72 902.25,586.09 902.25,584.46 902.25,582.83 902.25,581.20 902.25,579.57 902.25,577.94 902.25,576.31 902.25,574.68 902.25,573.05 902.25,571.42 902.25,569.79 902.25,568.16 902.25,566.53 902.25,564.90 902.25,563.27 902.25,561.64 902.25,560.01 902.25,558.38 902.25,556.75 902.25,555.12 902.25,553.49 902.25,551.86 902.25,550.23 902.25,548.60 902.25,546.97 902.25,545.34 902.25,543.71 902.25,542.08 902.25,540.45 902.25,538.82 902.25,537.19 902.25,535.56 902.25,533.93 902.25,532.30 902.25,530.67 902.25,529.04 902.25,527.41 902.25,525.78 902.25,524.15 902.25,522.52 902.25,520.89 902.25,519.26 902.25,517.63 902.25,516.00 902.25,514.37 902.25,512.74 902.25,511.11 902.25,509.48 902.25,507.85 902.25,506.22 902.25,504.59 902.25,502.96 902.25,501.33 902.25,499.70 902.25,498.07 902.25,496.44 902.25,494.81 902.25,493.18 902.25,491.55 902.25,489.92 902.25,488.29 902.25,486.66 902.25,485.03 902.25,483.40 902.25,481.77 902.25,480.14 902.25,478.51 902.25,476.88 902.25,475.25 902.25,473.62 902.25,471.99 902.25,470.36 902.25,468.73 902.25,467.10 902.25,465.47 902.25,463.84 902.25,462.21 902.25,460.58 902.25,458.95 902.25,457.32 902.25,455.69 902.25,454.06 902.25,452.43 902.25,450.80 902.25,449.17 902.25,447.54 902.25,445.91 902.25,444.28 902.25,442.65 902.25,441.02 902.25,439.39 902.25,437.76 902.25,436.13 902.25,434.50 902.25,432.87 902.25,431.24 902.25,429.61 902.25,427.98 902.25,426.35 902.25,424.72 902.25,423.09 902.25,421.46 902.25,419.83 902.25,418.20 902.25,416.57 902.25,414.94 902.25,413.31 902.25,411.68 902.25,410.05 902.25,408.42 902.25,406.79 902.25,405.16 902.25,403.53 902.25,401.90 902.25,400.27 902.25,398.64 902.25,397.01 902.25,395.38 902.25,393.75 902.25,392.12 902.25,390.49 902.25,388.86 902.25,387.23 902.25,385.60 902.25,383.97 902.25,382.34 902.25,380.71 902.25,379.08 902.25,377.45 902.25,375.82 902.25,374.19 902.25,372.56 902.25,370.93 902.25,369.30 902.25,367.67 902.25,366.04 902.25,364.41 902.25,362.78 902.25,361.15 902.25,359.52 902.25,357.89 902.25,356.26 902.25,354.63 902.25,353.00 902.25,351.37 902.25,349.74 902.25,348.11 902.25,346.48 902.25,344.85 902.25,343.22 902.25,341.59 902.25,339.96 902.25,338.33 902.25,336.70 902.25,335.07 902.25,333.44 902.25,331.81 902.25,330.18 902.25,328.55 902.25,326.92 902.25,325.29 902.25,323.66 902.25,322.03 902.25,320.40 902.25,318.77 902.25,317.14 902.25,315.51 902.25,313.88 902.25,312.25 902.25,310.62 902.25,308.99 902.25,307.36 902.25,305.73 902.25,304.10 902.25,302.47 902.25,300.84 902.25,299.21 902.25,297.58 902.25,295.95 902.25,294.32 902.25,292.69 902.25,291.06 902.25,289.43 902.25,287.80 902.25,286.17 902.25,284.54 902.25,282.91 902.25,281.28 902.25,279.65 902.25,278.02 902.25,276.39 902.25,274.76 902.25,273.13 902.25,271.50 902.25,269.87 902.25,268.24 902.25,266.61 902.25,264.98 902.25,263.35 902.25,261.72 902.25,260.09 902.25,258.46 902.25,256.83 902.25,255.20 902.25,253.57 902.25,251.94 902.25,250.31 902.25,248.68 902.25,247.05 902.25,245.42 902.25,243.79 902.25,242.16 902.25,240.53 902.25,238.90 902.25,237.27 902.25,235.64 902.25,234.01 902.25,232.38 902.25,230.75 902.25,229.12 902.25,227.49 902.25,225.86 902.25,224.23 902.25,222.60 902.25,220.97 902.25,219.34 902.25,217.71 902.25,216.08 902.25,214.45 902.25,212.82 902.25,211.19 902.25,209.56 902.25,207.93 902.25,206.30 902.25,204.67 902.25,203.04 902.25,201.41 902.25,199.78 902.25,198.15 902.25,196.52 902.25,194.89 902.25,193.26 902.25,191.63 902.25,190.00 902.25,188.37 902.25,186.74 902.25,185.11 902.25,183.48 902.25,181.85 902.25,180.22 902.25,178.59 902.25,176.96 902.25,175.33 902.25,173.70 902.25,172.07 902.25,170.44 902.25,168.81 902.25,167.18 902.25,165.55 902.25,163.92 902.25,162.29 902.25,160.66 902.25,159.03 902.25,157.40 902.25,155.77 902.25,154.14 902.25,152.51 902.25,150.88 902.25,149.25 902.25,147.62 902.25,145.99 902.25,144.36 902.25,142.73 902.25,141.10 902.25,139.47 902.25,137.84 902.25,136.21 902.25,134.58 902.25,132.95 902.25,131.32 902.25,129.69 902.25,128.06 902.25,126.43 902.25,124.80 902.25,123.17 902.25,121.54 902.25,119.91 902.25,118.28 902.25,116.65 902.25,115.02 902.25,113.39 902.25,111.76 902.25,110.13 902.25,108.50 902.25,106.87 902.25,105.24 902.25,103.61 902.25,101.98 902.25,100.35 902.25,98.72 902.25,97.09 902.25,95.46 902.25,93.83 902.25,92.20 902.25,90.57 902.25,88.94 902.25,87.31 902.25,85.68 902.25,84.05 902.25,82.42 902.25,80.79 902.25,79.16 902.25,77.53 902.25,75.90 902.25,74.27 902.25,72.64 902.25,71.01 902.25,69.38 902.25,67.75 902.25,66.12 902.25,64.49 902.25,62.86 902.25,61.23 902.25,59.60 902.25,57.97 902.25,56.34 902.25,54.71 902.25,53.08 902.25,51.45 902.25,49.82 902.25,48.19 902.25,46.56 902.25,44.93 902.25,43.30 902.25,41.67 902.25,40.04 902.25,38.41 902.25,36.78 902.25,35.15 902.25,33.52 902.25,31.89 902.25,30.26 902.25,28.63 902.25,27.00"/>
<polyline points="902.25,613.80 901.82,612.17 901.40,610.54 900.97,608.91 900.55,607.28 900.12,605.65 899.70,604.02 899.27,602.39 898.85,600.76 898.42,599.13 898.00,597.50 897.57,595.87 897.15,594.24 896.72,592.61 896.30,590.98 895.88,589.35 895.46,587.72 895.04,586.09 894.61,584.46 894.19,582.83 893.77,581.20 893.36,579.57 892.94,577.94 892.52,576.31 892.10,574.68 891.69,573.05 891.27,571.42 890.86,569.79 890.44,568.16 890.03,566.53 889.62,564.90 889.21,563.27 888.80,561.64 888.39,560.01 887.98,558.38 887.57,556.75 887.17,555.12 886.76,553.49 886.36,551.86 885.96,550.23 885.56,548.60 885.16,546.97 884.76,545.34 884.36,543.71 883.97,542.08 883.57,540.45 883.18,538.82 882.79,537.19 882.40,535.56 882.01,533.93 881.62,532.30 881.24,530.67 880.85,529.04 880.47,527.41 880.09,525.78 879.71,524.15 879.34,522.52 878.96,520.89 878.59,519.26 878.21,517.63 877.85,516.00 877.48,514.37 877.11,512.74 876.75,511.11 876.38,509.48 876.02,507.85 875.67,506.22 875.31,504.59 874.96,502.96 874.60,501.33 874.25,499.70 873.91,498.07 873.56,496.44 873.22,494.81 872.88,493.18 872.54,491.55 872.20,489.92 871.87,488.29 871.53,486.66 871.20,485.03 870.88,483.40 870.55,481.77 870.23,480.14 869.91,478.51 869.59,476.88 869.27,475.25 868.96,473.62 868.65,471.99 868.34,470.36 868.04,468.73 867.74,467.10 867.44,465.47 867.14,463.84 866.84,462.21 866.55,460.58 866.26,458.95 865.98,457.32 865.69,455.69 865.41,454.06 865.13,452.43 864.86,450.80 864.59,449.17 864.32,447.54 864.05,445.91 863.79,444.28 863.53,442.65 863.27,441.02 863.01,439.39 862.76,437.76 862.51,436.13 862.27,434.50 862.02,432.87 861.78,431.24 861.55,429.61 861.31,427.98 861.08,426.35 860.86,424.72 860.63,423.09 860.41,421.46 860.19,419.83 859.98,418.20 859.77,416.57 859.56,414.94 859.35,413.31 859.15,411.68 858.96,410.05 858.76,408.42 858.57,406.79 858.38,405.16 858.19,403.53 858.01,401.90 857.83,400.27 857.66,398.64 857.49,397.01 857.32,395.38 857.16,393.75 856.99,392.12 856.84,390.49 856.68,388.86 856.53,387.23 856.38,385.60 856.24,383.97 856.10,382.34 855.96,380.71 855.83,379.08 855.70,377.45 855.57,375.82 855.45,374.19 855.33,372.56 855.22,370.93 855.10,369.30 854.99,367.67 854.89,366.04 854.79,364.41 854.69,362.78 854.60,361.15 854.51,359.52 854.42,357.89 854.34,356.26 854.26,354.63 854.18,353.00 854.11,351.37 854.04,349.74 853.98,348.11 853.92,346.48 853.86,344.85 853.80,343.22 853.75,341.59 853.71,339.96 853.66,338.33 853.63,336.70 853.59,335.07 853.56,333.44 853.53,331.81 853.51,330.18 853.49,328.55 853.47,326.92 853.46,325.29 853.45,323.66 853.44,322.03 853.44,320.40 853.44,318.77 853.45,317.14 853.46,315.51 853.47,313.88 853.49,312.25 853.51,310.62 853.53,308.99 853.56,307.36 853.59,305.73 853.63,304.10 853.66,302.47 853.71,300.84 853.75,299.21 853.80,297.58 853.86,295.95 853.92,294.32 853.98,292.69 854.04,291.06 854.11,289.43 854.18,287.80 854.26,286.17 854.34,284.54 854.42,282.91 854.51,281.28 854.60,279.65 854.69,278.02 854.79,276.39 854.89,274.76 854.99,273.13 855.10,271.50 855.22,269.87 855.33,268.24 855.45,266.61 855.57,264.98 855.70,263.35 855.83,261.72 855.96,260.09 856.10,258.46 856.24,256.83 856.38,255.20 856.53,253.57 856.68,251.94 856.84,250.31 856.99,248.68 857.16,247.05 857.32,245.42 857.49,243.79 857.66,242.16 857.83,240.53 858.01,238.90 858.19,237.27 858.38,235.64 858.57,234.01 858.76,232.38 858.96,230.75 859.15,229.12 859.35,227.49 859.56,225.86 859.77,224.23 859.98,222.60 860.19,220.97 860.41,219.34 860.63,217.71 860.86,216.08 861.08,214.45 861.31,212.82 861.55,211.19 861.78,209.56 862.02,207.93 862.27,206.30 862.51,204.67 862.76,203.04 863.01,201.41 863.27,199.78 863.53,198.15 863.79,196.52 864.05,194.89 864.32,193.26 864.59,191.63 864.86,190.00 865.13,188.37 865.41,186.74 865.69,185.11 865.98,183.48 866.26,181.85 866.55,180.22 866.84,178.59 867.14,176.96 867.44,175.33 867.74,173.70 868.04,172.07 868.34,170.44 868.65,168.81 868.96,167.18 869.27,165.55 869.59,163.92 869.91,162.29 870.23,160.66 870.55,159.03 870.88,157.40 871.20,155.77 871.53,154.14 871.87,152.51 872.20,150.88 872.54,149.25 872.88,147.62 873.22,145.99 873.56,144.36 873.91,142.73 874.25,141.10 874.60,139.47 874.96,137.84 875.31,136.21 875.67,134.58 876.02,132.95 876.38,131.32 876.75,129.69 877.11,128.06 877.48,126.43 877.85,124.80 878.21,123.17 878.59,121.54 878.96,119.91 879.34,118.28 879.71,116.65 880.09,115.02 880.47,113.39 880.85,111.76 881.24,110.13 881.62,108.50 882.01,106.87 882.40,105.24 882.79,103.61 883.18,101.98 883.57,100.35 883.97,98.72 884.36,97.09 884.76,95.46 885.16,93.83 885.56,92.20 885.96,90.57 886.36,88.94 886.76,87.31 887.17,85.68 887.57,84.05 887.98,82.42 888.39,80.79 888.80,79.16 889.21,77.53 889.62,75.90 890.03,74.27 890.44,72.64 890.86,71.01 891.27,69.38 891.69,67.75 892.10,66.12 892.52,64.49 892.94,62.86 893.36,61.23 893.77,59.60 894.19,57.97 894.61,56.34 895.04,54.71 895.46,53.08 895.88,51.45 896.30,49.82 896.72,48.19 897.15,46.56 897.57,44.93 898.00,43.30 898.42,41.67 898.85,40.04 899.27,38.41 899.70,36.78 900.12,35.15 900.55,33.52 900.97,31.89 901.40,30.26 901.82,28.63 902.25,27.00"/>
<polyline points="902.25,613.80 901.40,612.17 900.55,610.54 899.69,608.91 898.84,607.28 897.99,605.65 897.14,604.02 896.29,602.39 895.44,600.76 894.59,599.13 893.74,597.50 892.89,595.87 892.05,594.24 891.20,592.61 890.35,590.98 889.51,589.35 888.66,587.72 887.82,586.09 886.98,584.46 886.14,582.83 885.30,581.20 884.46,579.57 883.62,577.94 882.79,576.31 881.95,574.68 881.12,573.05 880.29,571.42 879.46,569.79 878.63,568.16 877.81,566.53 876.98,564.90 876.16,563.27 875.34,561.64 874.52,560.01 873.71,558.38 872.90,556.75 872.08,555.12 871.27,553.49 870.47,551.86 869.66,550.23 868.86,548.60 868.06,546.97 867.27,545.34 866.47,543.71 865.68,542.08 864.89,540.45 864.11,538.82 863.32,537.19 862.54,535.56 861.77,533.93 860.99,532.30 860.22,530.67 859.46,529.04 858.69,527.41 857.93,525.78 857.17,524.15 856.42,522.52 855.67,520.89 854.92,519.26 854.18,517.63 853.44,516.00 852.70,514.37 851.97,512.74 851.24,511.11 850.52,509.48 849.80,507.85 849.08,506.22 848.37,504.59 847.66,502.96 846.96,501.33 846.26,499.70 845.56,498.07 844.87,496.44 844.18,494.81 843.50,493.18 842.82,491.55 842.15,489.92 841.48,488.29 840.82,486.66 840.16,485.03 839.50,483.40 838.85,481.77 838.21,480.14 837.57,478.51 836.93,476.88 836.30,475.25 835.67,473.62 835.05,471.99 834.44,470.36 833.83,468.73 833.22,467.10 832.62,465.47 832.03,463.84 831.44,462.21 830.86,460.58 830.28,458.95 829.70,457.32 829.14,455.69 828.58,454.06 828.02,452.43 827.47,450.80 826.92,449.17 826.39,447.54 825.85,445.91 825.32,444.28 824.80,442.65 824.29,441.02 823.78,439.39 823.27,437.76 822.78,436.13 822.28,434.50 821.80,432.87 821.32,431.24 820.85,429.61 820.38,427.98 819.92,426.35 819.46,424.72 819.02,423.09 818.57,421.46 818.14,419.83 817.71,418.20 817.29,416.57 816.87,414.94 816.46,413.31 816.06,411.68 815.66,410.05 815.27,408.42 814.89,406.79 814.51,405.16 814.14,403.53 813.78,401.90 813.42,400.27 813.07,398.64 812.73,397.01 812.39,395.38 812.06,393.75 811.74,392.12 811.42,390.49 811.11,388.86 810.81,387.23 810.52,385.60 810.23,383.97 809.95,382.34 809.67,380.71 809.41,379.08 809.15,377.45 808.90,375.82 808.65,374.19 808.41,372.56 808.18,370.93 807.96,369.30 807.74,367.67 807.53,366.04 807.33,364.41 807.13,362.78 806.94,361.15 806.76,359.52 806.59,357.89 806.42,356.26 806.26,354.63 806.11,353.00 805.97,351.37 805.83,349.74 805.70,348.11 805.58,346.48 805.47,344.85 805.36,343.22 805.26,341.59 805.16,339.96 805.08,338.33 805.00,336.70 804.93,335.07 804.87,333.44 804.81,331.81 804.76,330.18 804.72,328.55 804.69,326.92 804.66,325.29 804.64,323.66 804.63,322.03 804.63,320.40 804.63,318.77 804.64,317.14 804.66,315.51 804.69,313.88 804.72,312.25 804.76,310.62 804.81,308.99 804.87,307.36 804.93,305.73 805.00,304.10 805.08,302.47 805.16,300.84 805.26,299.21 805.36,297.58 805.47,295.95 805.58,294.32 805.70,292.69 805.83,291.06 805.97,289.43 806.11,287.80 806.26,286.17 806.42,284.54 806.59,282.91 806.76,281.28 806.94,279.65 807.13,278.02 807.33,276.39 807.53,274.76 807.74,273.13 807.96,271.50 808.18,269.87 808.41,268.24 808.65,266.61 808.90,264.98 809.15,263.35 809.41,261.72 809.67,260.09 809.95,258.46 810.23,256.83 810.52,255.20 810.81,253.57 811.11,251.94 811.42,250.31 811.74,248.68 812.06,247.05 812.39,245.42 812.73,243.79 813.07,242.16 813.42,240.53 813.78,238.90 814.14,237.27 814.51,235.64 814.89,234.01 815.27,232.38 815.66,230.75 816.06,229.12 816.46,227.49 816.87,225.86 817.29,224.23 817.71,222.60 818.14,220.97 818.57,219.34 819.02,217.71 819.46,216.08 819.92,214.45 820.38,212.82 820.85,211.19 821.32,209.56 821.80,207.93 822.28,206.30 822.78,204.67 823.27,203.04 823.78,201.41 824.29,199.78 824.80,198.15 825.32,196.52 825.85,194.89 826.39,193.26 826.92,191.63 827.47,190.00 828.02,188.37 828.58,186.74 829.14,185.11 829.70,183.48 830.28,181.85 830.86,180.22 831.44,178.59 832.03,176.96 832.62,175.33 833.22,173.70 833.83,172.07 834.44,170.44 835.05,168.81 835.67,167.18 836.30,165.55 836.93,163.92 837.57,162.29 838.21,160.66 838.85,159.03 839.50,157.40 840.16,155.77 840.82,154.14 841.48,152.51 842.15,150.88 842.82,149.25 843.50,147.62 844.18,145.99 844.87,144.36 845.56,142.73 846.26,141.10 846.96,139.47 847.66,137.84 848.37,136.21 849.08,134.58 849.80,132.95 850.52,131.32 851.24,129.69 851.97,128.06 852.70,126.43 853.44,124.80 854.18,123.17 854.92,121.54 855.67,119.91 856.42,118.28 857.17,116.65 857.93,115.02 858.69,113.39 859.46,111.76 860.22,110.13 860.99,108.50 861.77,106.87 862.54,105.24 863.32,103.61 864.11,101.98 864.89,100.35 865.68,98.72 866.47,97.09 867.27,95.46 868.06,93.83 868.86,92.20 869.66,90.57 870.47,88.94 871.27,87.31 872.08,85.68 872.90,84.05 873.71,82.42 874.52,80.79 875.34,79.16 876.16,77.53 876.98,75.90 877.81,74.27 878.63,72.64 879.46,71.01 880.29,69.38 881.12,67.75 881.95,66.12 882.79,64.49 883.62,62.86 884.46,61.23 885.30,59.60 886.14,57.97 886.98,56.34 887.82,54.71 888.66,53.08 889.51,51.45 890.35,49.82 891.20,48.19 892.05,46.56 892.89,44.93 893.74,43.30 894.59,41.67 895.44,40.04 896.29,38.41 897.14,36.78 897.99,35.15 898.84,33.52 899.69,31.89 900.55,30.26 901.40,28.63 902.25,27.00"/>
<polyline points="902.25,613.80 900.97,612.17 899.69,610.54 898.42,608.91 897.14,607.28 895.86,605.65 894.59,604.02 893.31,602.39 892.04,600.76 890.76,599.13 889.49,597.50 888.22,595.87 886.94,594.24 885.67,592.61 884.40,590.98 883.14,589.35 881.87,587.72 880.61,586.09 879.34,584.46 878.08,582.83 876.82,581.20 875.57,579.57 874.31,577.94 873.06,576.31 871.81,574.68 870.56,573.05 869.31,571.42 868.07,569.79 866.83,568.16 865.59,566.53 864.35,564.90 863.12,563.27 861.89,561.64 860.66,560.01 859.44,558.38 858.22,556.75 857.00,555.12 855.79,553.49 854.58,551.86 853.37,550.23 852.17,548.60 850.97,546.97 849.77,545.34 848.58,543.71 847.40,542.08 846.21,540.45 845.04,538.82 843.86,537.19 842.69,535.56 841.53,533.93 840.37,532.30 839.21,530.67 838.06,529.04 836.91,527.41 835.77,525.78 834.64,524.15 833.51,522.52 832.38,520.89 831.26,519.26 830.14,517.63 829.03,516.00 827.93,514.37 826.83,512.74 825.74,511.11 824.65,509.48 823.57,507.85 822.50,506.22 821.43,504.59 820.37,502.96 819.31,501.33 818.26,499.70 817.22,498.07 816.18,496.44 815.15,494.81 814.13,493.18 813.11,491.55 812.10,489.92 811.10,488.29 810.10,486.66 809.11,485.03 808.13,483.40 807.15,481.77 806.18,480.14 805.22,478.51 804.27,476.88 803.32,475.25 802.38,473.62 801.45,471.99 800.53,470.36 799.62,468.73 798.71,467.10 797.81,465.47 796.92,463.84 796.03,462.21 795.16,460.58 794.29,458.95 793.43,457.32 792.58,455.69 791.74,454.06 790.90,452.43 790.08,450.80 789.26,449.17 788.45,447.54 787.65,445.91 786.86,444.28 786.08,442.65 785.31,441.02 784.54,439.39 783.79,437.76 783.04,436.13 782.30,434.50 781.57,432.87 780.85,431.24 780.14,429.61 779.44,427.98 778.75,426.35 778.07,424.72 777.40,423.09 776.73,421.46 776.08,419.83 775.44,418.20 774.80,416.57 774.18,414.94 773.56,413.31 772.96,411.68 772.37,410.05 771.78,408.42 771.20,406.79 770.64,405.16 770.08,403.53 769.54,401.90 769.00,400.27 768.48,398.64 767.96,397.01 767.46,395.38 766.97,393.75 766.48,392.12 766.01,390.49 765.55,388.86 765.09,387.23 764.65,385.60 764.22,383.97 763.80,382.34 763.39,380.71 762.99,379.08 762.60,377.45 762.22,375.82 761.85,374.19 761.49,372.56 761.15,370.93 760.81,369.30 760.48,367.67 760.17,366.04 759.87,364.41 759.57,362.78 759.29,361.15 759.02,359.52 758.76,357.89 758.51,356.26 758.27,354.63 758.04,353.00 757.83,351.37 757.62,349.74 757.43,348.11 757.25,346.48 757.07,344.85 756.91,343.22 756.76,341.59 756.62,339.96 756.49,338.33 756.38,336.70 756.27,335.07 756.18,333.44 756.09,331.81 756.02,330.18 755.96,328.55 755.91,326.92 755.87,325.29 755.84,323.66 755.83,322.03 755.82,320.40 755.83,318.77 755.84,317.14 755.87,315.51 755.91,313.88 755.96,312.25 756.02,310.62 756.09,308.99 756.18,307.36 756.27,305.73 756.38,304.10 756.49,302.47 756.62,300.84 756.76,299.21 756.91,297.58 757.07,295.95 757.25,294.32 757.43,292.69 757.62,291.06 757.83,289.43 758.04,287.80 758.27,286.17 758.51,284.54 758.76,282.91 759.02,281.28 759.29,279.65 759.57,278.02 759.87,276.39 760.17,274.76 760.48,273.13 760.81,271.50 761.15,269.87 761.49,268.24 761.85,266.61 762.22,264.98 762.60,263.35 762.99,261.72 763.39,260.09 763.80,258.46 764.22,256.83 764.65,255.20 765.09,253.57 765.55,251.94 766.01,250.31 766.48,248.68 766.97,247.05 767.46,245.42 767.96,243.79 768.48,242.16 769.00,240.53 769.54,238.90 770.08,237.27 770.64,235.64 771.20,234.01 771.78,232.38 772.37,230.75 772.96,229.12 773.56,227.49 774.18,225.86 774.80,224.23 775.44,222.60 776.08,220.97 776.73,219.34 777.40,217.71 778.07,216.08 778.75,214.45 779.44,212.82 780.14,211.19 780.85,209.56 781.57,207.93 782.30,206.30 783.04,204.67 783.79,203.04 784.54,201.41 785.31,199.78 786.08,198.15 786.86,196.52 787.65,194.89 788.45,193.26 789.26,191.63 790.08,190.00 790.90,188.37 791.74,186.74 792.58,185.11 793.43,183.48 794.29,181.85 795.16,180.22 796.03,178.59 796.92,176.96 797.81,175.33 798.71,173.70 799.62,172.07 800.53,170.44 801.45,168.81 802.38,167.18 803.32,165.55 804.27,163.92 805.22,162.29 806.18,160.66 807.15,159.03 808.13,157.40 809.11,155.77 810.10,154.14 811.10,152.51 812.10,150.88 813.11,149.25 814.13,147.62 815.15,145.99 816.18,144.36 817.22,142.73 818.26,141.10 819.31,139.47 820.37,137.84 821.43,136.21 822.50,134.58 823.57,132.95 824.65,131.32 825.74,129.69 826.83,128.06 827.93,126.43 829.03,124.80 830.14,123.17 831.26,121.54 832.38,119.91 833.51,118.28 834.64,116.65 835.77,115.02 836.91,113.39 838.06,111.76 839.21,110.13 840.37,108.50 841.53,106.87 842.69,105.24 843.86,103.61 845.04,101.98 846.21,100.35 847.40,98.72 848.58,97.09 849.77,95.46 850.97,93.83 852.17,92.20 853.37,90.57 854.58,88.94 855.79,87.31 857.00,85.68 858.22,84.05 859.44,82.42 860.66,80.79 861.89,79.16 863.12,77.53 864.35,75.90 865.59,74.27 866.83,72.64 868.07,71.01 869.31,69.38 870.56,67.75 871.81,66.12 873.06,64.49 874.31,62.86 875.57,61.23 876.82,59.60 878.08,57.97 879.34,56.34 880.61,54.71 881.87,53.08 883.14,51.45 884.40,49.82 885.67,48.19 886.94,46.56 888.22,44.93 889.49,43.30 890.76,41.67 892.04,40.04 893.31,38.41 894.59,36.78 895.86,35.15 897.14,33.52 898.42,31.89 899.69,30.26 900.97,28.63 902.25,27.00"/>
<polyline points="902.25,613.80 900.55,612.17 898.84,610.54 897.14,608.91 895.44,607.28 893.73,605.65 892.03,604.02 890.33,602.39 888.63,600.76 886.93,599.13 885.23,597.50 883.54,595.87 881.84,594.24 880.15,592.61 878.46,590.98 876.77,589.35 875.08,587.72 873.39,586.09 871.71,584.46 870.03,582.83 868.35,581.20 866.67,579.57 865.00,577.94 863.33,576.31 861.66,574.68 859.99,573.05 858.33,571.42 856.67,569.79 855.02,568.16 853.37,566.53 851.72,564.90 850.07,563.27 848.43,561.64 846.80,560.01 845.17,558.38 843.54,556.75 841.92,555.12 840.30,553.49 838.69,551.86 837.08,550.23 835.47,548.60 833.88,546.97 832.28,545.34 830.69,543.71 829.11,542.08 827.53,540.45 825.96,538.82 824.40,537.19 822.84,535.56 821.29,533.93 819.74,532.30 818.20,530.67 816.66,529.04 815.13,527.41 813.61,525.78 812.10,524.15 810.59,522.52 809.09,520.89 807.60,519.26 806.11,517.63 804.63,516.00 803.16,514.37 801.69,512.74 800.24,511.11 798.79,509.48 797.35,507.85 795.91,506.22 794.49,504.59 793.07,502.96 791.66,501.33 790.26,499.70 788.87,498.07 787.49,496.44 786.12,494.81 784.75,493.18 783.40,491.55 782.05,489.92 780.71,488.29 779.38,486.66 778.06,485.03 776.75,483.40 775.45,481.77 774.16,480.14 772.88,478.51 771.61,476.88 770.35,475.25 769.10,473.62 767.86,471.99 766.62,470.36 765.40,468.73 764.19,467.10 762.99,465.47 761.81,463.84 760.63,462.21 759.46,460.58 758.30,458.95 757.16,457.32 756.02,455.69 754.90,454.06 753.79,452.43 752.69,450.80 751.60,449.17 750.52,447.54 749.45,445.91 748.40,444.28 747.36,442.65 746.32,441.02 745.30,439.39 744.30,437.76 743.30,436.13 742.32,434.50 741.35,432.87 740.39,431.24 739.44,429.61 738.51,427.98 737.59,426.35 736.68,424.72 735.78,423.09 734.90,421.46 734.03,419.83 733.17,418.20 732.32,416.57 731.49,414.94 730.67,413.31 729.86,411.68 729.07,410.05 728.29,408.42 727.52,406.79 726.77,405.16 726.03,403.53 725.30,401.90 724.59,400.27 723.89,398.64 723.20,397.01 722.53,395.38 721.87,393.75 721.23,392.12 720.60,390.49 719.98,388.86 719.37,387.23 718.78,385.60 718.21,383.97 717.65,382.34 717.10,380.71 716.57,379.08 716.05,377.45 715.54,375.82 715.05,374.19 714.57,372.56 714.11,370.93 713.66,369.30 713.23,367.67 712.81,366.04 712.40,364.41 712.01,362.78 711.64,361.15 711.28,359.52 710.93,357.89 710.60,356.26 710.28,354.63 709.98,353.00 709.69,351.37 709.41,349.74 709.15,348.11 708.91,346.48 708.68,344.85 708.47,343.22 708.27,341.59 708.08,339.96 707.91,338.33 707.75,336.70 707.61,335.07 707.49,333.44 707.37,331.81 707.28,330.18 707.20,328.55 707.13,326.92 707.08,325.29 707.04,323.66 707.02,322.03 707.01,320.40 707.02,318.77 707.04,317.14 707.08,315.51 707.13,313.88 707.20,312.25 707.28,310.62 707.37,308.99 707.49,307.36 707.61,305.73 707.75,304.10 707.91,302.47 708.08,300.84 708.27,299.21 708.47,297.58 708.68,295.95 708.91,294.32 709.15,292.69 709.41,291.06 709.69,289.43 709.98,287.80 710.28,286.17 710.60,284.54 710.93,282.91 711.28,281.28 711.64,279.65 712.01,278.02 712.40,276.39 712.81,274.76 713.23,273.13 713.66,271.50 714.11,269.87 714.57,268.24 715.05,266.61 715.54,264.98 716.05,263.35 716.57,261.72 717.10,260.09 717.65,258.46 718.21,256.83 718.78,255.20 719.37,253.57 719.98,251.94 720.60,250.31 721.23,248.68 721.87,247.05 722.53,245.42 723.20,243.79 723.89,242.16 724.59,240.53 725.30,238.90 726.03,237.27 726.77,235.64 727.52,234.01 728.29,232.38 729.07,230.75 729.86,229.12 730.67,227.49 731.49,225.86 732.32,224.23 733.17,222.60 734.03,220.97 734.90,219.34 735.78,217.71 736.68,216.08 737.59,214.45 738.51,212.82 739.44,211.19 740.39,209.56 741.35,207.93 742.32,206.30 743.30,204.67 744.30,203.04 745.30,201.41 746.32,199.78 747.36,198.15 748.40,196.52 749.45,194.89 750.52,193.26 751.60,191.63 752.69,190.00 753.79,188.37 754.90,186.74 756.02,185.11 757.16,183.48 758.30,181.85 759.46,180.22 760.63,178.59 761.81,176.96 762.99,175.33 764.19,173.70 765.40,172.07 766.62,170.44 767.86,168.81 769.10,167.18 770.35,165.55 771.61,163.92 772.88,162.29 774.16,160.66 775.45,159.03 776.75,157.40 778.06,155.77 779.38,154.14 780.71,152.51 782.05,150.88 783.40,149.25 784.75,147.62 786.12,145.99 787.49,144.36 788.87,142.73 790.26,141.10 791.66,139.47 793.07,137.84 794.49,136.21 795.91,134.58 797.35,132.95 798.79,131.32 800.24,129.69 801.69,128.06 803.16,126.43 804.63,124.80 806.11,123.17 807.60,121.54 809.09,119.91 810.59,118.28 812.10,116.65 813.61,115.02 815.13,113.39 816.66,111.76 818.20,110.13 819.74,108.50 821.29,106.87 822.84,105.24 824.40,103.61 825.96,101.98 827.53,100.35 829.11,98.72 830.69,97.09 832.28,95.46 833.88,93.83 835.47,92.20 837.08,90.57 838.69,88.94 840.30,87.31 841.92,85.68 843.54,84.05 845.17,82.42 846.80,80.79 848.43,79.16 850.07,77.53 851.72,75.90 853.37,74.27 855.02,72.64 856.67,71.01 858.33,69.38 859.99,67.75 861.66,66.12 863.33,64.49 865.00,62.86 866.67,61.23 868.35,59.60 870.03,57.97 871.71,56.34 873.39,54.71 875.08,53.08 876.77,51.45 878.46,49.82 880.15,48.19 881.84,46.56 883.54,44.93 885.23,43.30 886.93,41.67 888.63,40.04 890.33,38.41 892.03,36.78 893.73,35.15 895.44,33.52 897.14,31.89 898.84,30.26 900.55,28.63 902.25,27.00"/>
<polyline points="902.25,613.80 900.12,612.17 897.99,610.54 895.86,608.91 893.73,607.28 891.60,605.65 889.48,604.02 887.35,602.39 885.23,600.76 883.10,599.13 880.98,597.50 878.86,595.87 876.74,594.24 874.62,592.61 872.51,590.98 870.40,589.35 868.28,587.72 866.18,586.09 864.07,584.46 861.97,582.83 859.87,581.20 857.78,579.57 855.68,577.94 853.59,576.31 851.51,574.68 849.43,573.05 847.35,571.42 845.28,569.79 843.21,568.16 841.14,566.53 839.09,564.90 837.03,563.27 834.98,561.64 832.94,560.01 830.90,558.38 828.86,556.75 826.83,555.12 824.81,553.49 822.80,551.86 820.78,550.23 818.78,548.60 816.78,546.97 814.79,545.34 812.81,543.71 810.83,542.08 808.86,540.45 806.89,538.82 804.94,537.19 802.99,535.56 801.04,533.93 799.11,532.30 797.18,530.67 795.27,529.04 793.36,527.41 791.45,525.78 789.56,524.15 787.68,522.52 785.80,520.89 783.93,519.26 782.07,517.63 780.23,516.00 778.39,514.37 776.55,512.74 774.73,511.11 772.92,509.48 771.12,507.85 769.33,506.22 767.55,504.59 765.78,502.96 764.02,501.33 762.27,499.70 760.53,498.07 758.80,496.44 757.08,494.81 755.38,493.18 753.68,491.55 752.00,489.92 750.33,488.29 748.66,486.66 747.02,485.03 745.38,483.40 743.75,481.77 742.14,480.14 740.54,478.51 738.95,476.88 737.37,475.25 735.81,473.62 734.26,471.99 732.72,470.36 731.19,468.73 729.68,467.10 728.18,465.47 726.70,463.84 725.22,462.21 723.76,460.58 722.32,458.95 720.89,457.32 719.47,455.69 718.06,454.06 716.67,452.43 715.30,450.80 713.94,449.17 712.59,447.54 711.25,445.91 709.94,444.28 708.63,442.65 707.34,441.02 706.07,439.39 704.81,437.76 703.57,436.13 702.34,434.50 701.12,432.87 699.92,431.24 698.74,429.61 697.57,427.98 696.42,426.35 695.28,424.72 694.16,423.09 693.06,421.46 691.97,419.83 690.90,418.20 689.84,416.57 688.80,414.94 687.77,413.31 686.77,411.68 685.78,410.05 684.80,408.42 683.84,406.79 682.90,405.16 681.97,403.53 681.07,401.90 680.17,400.27 679.30,398.64 678.44,397.01 677.60,395.38 676.78,393.75 675.97,392.12 675.18,390.49 674.41,388.86 673.66,387.23 672.92,385.60 672.20,383.97 671.50,382.34 670.81,380.71 670.14,379.08 669.50,377.45 668.86,375.82 668.25,374.19 667.65,372.56 667.08,370.93 666.52,369.30 665.97,367.67 665.45,366.04 664.94,364.41 664.45,362.78 663.98,361.15 663.53,359.52 663.10,357.89 662.68,356.26 662.29,354.63 661.91,353.00 661.55,351.37 661.20,349.74 660.88,348.11 660.58,346.48 660.29,344.85 660.02,343.22 659.77,341.59 659.54,339.96 659.32,338.33 659.13,336.70 658.95,335.07 658.79,333.44 658.66,331.81 658.53,330.18 658.43,328.55 658.35,326.92 658.28,325.29 658.24,323.66 658.21,322.03 658.20,320.40 658.21,318.77 658.24,317.14 658.28,315.51 658.35,313.88 658.43,312.25 658.53,310.62 658.66,308.99 658.79,307.36 658.95,305.73 659.13,304.10 659.32,302.47 659.54,300.84 659.77,299.21 660.02,297.58 660.29,295.95 660.58,294.32 660.88,292.69 661.20,291.06 661.55,289.43 661.91,287.80 662.29,286.17 662.68,284.54 663.10,282.91 663.53,281.28 663.98,279.65 664.45,278.02 664.94,276.39 665.45,274.76 665.97,273.13 666.52,271.50 667.08,269.87 667.65,268.24 668.25,266.61 668.86,264.98 669.50,263.35 670.14,261.72 670.81,260.09 671.50,258.46 672.20,256.83 672.92,255.20 673.66,253.57 674.41,251.94 675.18,250.31 675.97,248.68 676.78,247.05 677.60,245.42 678.44,243.79 679.30,242.16 680.17,240.53 681.07,238.90 681.97,237.27 682.90,235.64 683.84,234.01 684.80,232.38 685.78,230.75 686.77,229.12 687.77,227.49 688.80,225.86 689.84,224.23 690.90,222.60 691.97,220.97 693.06,219.34 694.16,217.71 695.28,216.08 696.42,214.45 697.57,212.82 698.74,211.19 699.92,209.56 701.12,207.93 702.34,206.30 703.57,204.67 704.81,203.04 706.07,201.41 707.34,199.78 708.63,198.15 709.94,196.52 711.25,194.89 712.59,193.26 713.94,191.63 715.30,190.00 716.67,188.37 718.06,186.74 719.47,185.11 720.89,183.48 722.32,181.85 723.76,180.22 725.22,178.59 726.70,176.96 728.18,175.33 729.68,173.70 731.19,172.07 732.72,170.44 734.26,168.81 735.81,167.18 737.37,165.55 738.95,163.92 740.54,162.29 742.14,160.66 743.75,159.03 745.38,157.40 747.02,155.77 748.66,154.14 750.33,152.51 752.00,150.88 753.68,149.25 755.38,147.62 757.08,145.99 758.80,144.36 760.53,142.73 762.27,141.10 764.02,139.47 765.78,137.84 767.55,136.21 769.33,134.58 771.12,132.95 772.92,131.32 774.73,129.69 776.55,128.06 778.39,126.43 780.23,124.80 782.07,123.17 783.93,121.54 785.80,119.91 787.68,118.28 789.56,116.65 791.45,115.02 793.36,113.39 795.27,111.76 797.18,110.13 799.11,108.50 801.04,106.87 802.99,105.24 804.94,103.61 806.89,101.98 808.86,100.35 810.83,98.72 812.81,97.09 814.79,95.46 816.78,93.83 818.78,92.20 820.78,90.57 822.80,88.94 824.81,87.31 826.83,85.68 828.86,84.05 830.90,82.42 832.94,80.79 834.98,79.16 837.03,77.53 839.09,75.90 841.14,74.27 843.21,72.64 845.28,71.01 847.35,69.38 849.43,67.75 851.51,66.12 853.59,64.49 855.68,62.86 857.78,61.23 859.87,59.60 861.97,57.97 864.07,56.34 866.18,54.71 868.28,53.08 870.40,51.45 872.51,49.82 874.62,48.19 876.74,46.56 878.86,44.93 880.98,43.30 883.10,41.67 885.23,40.04 887.35,38.41 889.48,36.78 891.60,35.15 893.73,33.52 895.86,31.89 897.99,30.26 900.12,28.63 902.25,27.00"/>
<polyline points="902.25,613.80 899.69,612.17 897.14,610.54 894.58,608.91 892.03,607.28 889.48,605.65 886.92,604.02 884.37,602.39 881.82,600.76 879.27,599.13 876.73,597.50 874.18,595.87 871.64,594.24 869.10,592.61 866.56,590.98 864.02,589.35 861.49,587.72 858.96,586.09 856.44,584.46 853.91,582.83 851.40,581.20 848.88,579.57 846.37,577.94 843.86,576.31 841.36,574.68 838.86,573.05 836.37,571.42 833.88,569.79 831.40,568.16 828.92,566.53 826.45,564.90 823.99,563.27 821.53,561.64 819.07,560.01 816.63,558.38 814.19,556.75 811.75,555.12 809.32,553.49 806.90,551.86 804.49,550.23 802.09,548.60 799.69,546.97 797.30,545.34 794.92,543.71 792.54,542.08 790.18,540.45 787.82,538.82 785.47,537.19 783.13,535.56 780.80,533.93 778.48,532.30 776.17,530.67 773.87,529.04 771.58,527.41 769.29,525.78 767.02,524.15 764.76,522.52 762.51,520.89 760.27,519.26 758.04,517.63 755.82,516.00 753.61,514.37 751.42,512.74 749.23,511.11 747.06,509.48 744.90,507.85 742.75,506.22 740.61,504.59 738.48,502.96 736.37,501.33 734.27,499.70 732.19,498.07 730.11,496.44 728.05,494.81 726.00,493.18 723.97,491.55 721.95,489.92 719.94,488.29 717.95,486.66 715.97,485.03 714.00,483.40 712.05,481.77 710.12,480.14 708.20,478.51 706.29,476.88 704.40,475.25 702.52,473.62 700.66,471.99 698.81,470.36 696.98,468.73 695.17,467.10 693.37,465.47 691.58,463.84 689.82,462.21 688.07,460.58 686.33,458.95 684.61,457.32 682.91,455.69 681.23,454.06 679.56,452.43 677.91,450.80 676.27,449.17 674.66,447.54 673.06,445.91 671.47,444.28 669.91,442.65 668.36,441.02 666.83,439.39 665.32,437.76 663.83,436.13 662.35,434.50 660.90,432.87 659.46,431.24 658.04,429.61 656.64,427.98 655.25,426.35 653.89,424.72 652.55,423.09 651.22,421.46 649.91,419.83 648.63,418.20 647.36,416.57 646.11,414.94 644.88,413.31 643.67,411.68 642.48,410.05 641.31,408.42 640.16,406.79 639.03,405.16 637.92,403.53 636.83,401.90 635.76,400.27 634.71,398.64 633.68,397.01 632.67,395.38 631.68,393.75 630.71,392.12 629.77,390.49 628.84,388.86 627.94,387.23 627.05,385.60 626.19,383.97 625.35,382.34 624.52,380.71 623.72,379.08 622.94,377.45 622.19,375.82 621.45,374.19 620.73,372.56 620.04,370.93 619.37,369.30 618.72,367.67 618.09,366.04 617.48,364.41 616.90,362.78 616.33,361.15 615.79,359.52 615.27,357.89 614.77,356.26 614.29,354.63 613.84,353.00 613.41,351.37 613.00,349.74 612.61,348.11 612.24,346.48 611.90,344.85 611.57,343.22 611.27,341.59 610.99,339.96 610.74,338.33 610.50,336.70 610.29,335.07 610.10,333.44 609.94,331.81 609.79,330.18 609.67,328.55 609.57,326.92 609.49,325.29 609.43,323.66 609.40,322.03 609.39,320.40 609.40,318.77 609.43,317.14 609.49,315.51 609.57,313.88 609.67,312.25 609.79,310.62 609.94,308.99 610.10,307.36 610.29,305.73 610.50,304.10 610.74,302.47 610.99,300.84 611.27,299.21 611.57,297.58 611.90,295.95 612.24,294.32 612.61,292.69 613.00,291.06 613.41,289.43 613.84,287.80 614.29,286.17 614.77,284.54 615.27,282.91 615.79,281.28 616.33,279.65 616.90,278.02 617.48,276.39 618.09,274.76 618.72,273.13 619.37,271.50 620.04,269.87 620.73,268.24 621.45,266.61 622.19,264.98 622.94,263.35 623.72,261.72 624.52,260.09 625.35,258.46 626.19,256.83 627.05,255.20 627.94,253.57 628.84,251.94 629.77,250.31 630.71,248.68 631.68,247.05 632.67,245.42 633.68,243.79 634.71,242.16 635.76,240.53 636.83,238.90 637.92,237.27 639.03,235.64 640.16,234.01 641.31,232.38 642.48,230.75 643.67,229.12 644.88,227.49 646.11,225.86 647.36,224.23 648.63,222.60 649.91,220.97 651.22,219.34 652.55,217.71 653.89,216.08 655.25,214.45 656.64,212.82 658.04,211.19 659.46,209.56 660.90,207.93 662.35,206.30 663.83,204.67 665.32,203.04 666.83,201.41 668.36,199.78 669.91,198.15 671.47,196.52 673.06,194.89 674.66,193.26 676.27,191.63 677.91,190.00 679.56,188.37 681.23,186.74 682.91,185.11 684.61,183.48 686.33,181.85 688.07,180.22 689.82,178.59 691.58,176.96 693.37,175.33 695.17,173.70 696.98,172.07 698.81,170.44 700.66,168.81 702.52,167.18 704.40,165.55 706.29,163.92 708.20,162.29 710.12,160.66 712.05,159.03 714.00,157.40 715.97,155.77 717.95,154.14 719.94,152.51 721.95,150.88 723.97,149.25 726.00,147.62 728.05,145.99 730.11,144.36 732.19,142.73 734.27,141.10 736.37,139.47 738.48,137.84 740.61,136.21 742.75,134.58 744.90,132.95 747.06,131.32 749.23,129.69 751.42,128.06 753.61,126.43 755.82,124.80 758.04,123.17 760.27,121.54 762.51,119.91 764.76,118.28 767.02,116.65 769.29,115.02 771.58,113.39 773.87,111.76 776.17,110.13 778.48,108.50 780.80,106.87 783.13,105.24 785.47,103.61 787.82,101.98 790.18,100.35 792.54,98.72 794.92,97.09 797.30,95.46 799.69,93.83 802.09,92.20 804.49,90.57 806.90,88.94 809.32,87.31 811.75,85.68 814.19,84.05 816.63,82.42 819.07,80.79 821.53,79.16 823.99,77.53 826.45,75.90 828.92,74.27 831.40,72.64 833.88,71.01 836.37,69.38 838.86,67.75 841.36,66.12 843.86,64.49 846.37,62.86 848.88,61.23 851.40,59.60 853.91,57.97 856.44,56.34 858.96,54.71 861.49,53.08 864.02,51.45 866.56,49.82 869.10,48.19 871.64,46.56 874.18,44.93 876.73,43.30 879.27,41.67 881.82,40.04 884.37,38.41 886.92,36.78 889.48,35.15 892.03,33.52 894.58,31.89 897.14,30.26 899.69,28.63 902.25,27.00"/>
<polyline points="902.25,613.80 899.27,612.17 896.29,610.54 893.31,608.91 890.33,607.28 887.35,605.65 884.37,604.02 881.39,602.39 878.42,600.76 875.44,599.13 872.47,597.50 869.50,595.87 866.54,594.24 863.57,592.61 860.61,590.98 857.65,589.35 854.70,587.72 851.75,586.09 848.80,584.46 845.86,582.83 842.92,581.20 839.99,579.57 837.06,577.94 834.13,576.31 831.21,574.68 828.30,573.05 825.39,571.42 822.49,569.79 819.59,568.16 816.70,566.53 813.82,564.90 810.94,563.27 808.07,561.64 805.21,560.01 802.36,558.38 799.51,556.75 796.67,555.12 793.84,553.49 791.01,551.86 788.20,550.23 785.39,548.60 782.59,546.97 779.81,545.34 777.03,543.71 774.26,542.08 771.50,540.45 768.75,538.82 766.01,537.19 763.28,535.56 760.56,533.93 757.85,532.30 755.16,530.67 752.47,529.04 749.80,527.41 747.14,525.78 744.48,524.15 741.85,522.52 739.22,520.89 736.61,519.26 734.00,517.63 731.41,516.00 728.84,514.37 726.28,512.74 723.73,511.11 721.19,509.48 718.67,507.85 716.16,506.22 713.67,504.59 711.19,502.96 708.73,501.33 706.28,499.70 703.84,498.07 701.42,496.44 699.02,494.81 696.63,493.18 694.25,491.55 691.90,489.92 689.56,488.29 687.23,486.66 684.92,485.03 682.63,483.40 680.35,481.77 678.09,480.14 675.85,478.51 673.63,476.88 671.42,475.25 669.23,473.62 667.06,471.99 664.91,470.36 662.77,468.73 660.65,467.10 658.55,465.47 656.47,463.84 654.41,462.21 652.37,460.58 650.34,458.95 648.34,457.32 646.35,455.69 644.39,454.06 642.44,452.43 640.52,450.80 638.61,449.17 636.72,447.54 634.86,445.91 633.01,444.28 631.18,442.65 629.38,441.02 627.60,439.39 625.83,437.76 624.09,436.13 622.37,434.50 620.67,432.87 618.99,431.24 617.34,429.61 615.70,427.98 614.09,426.35 612.50,424.72 610.93,423.09 609.38,421.46 607.86,419.83 606.36,418.20 604.88,416.57 603.42,414.94 601.98,413.31 600.57,411.68 599.19,410.05 597.82,408.42 596.48,406.79 595.16,405.16 593.86,403.53 592.59,401.90 591.34,400.27 590.12,398.64 588.92,397.01 587.74,395.38 586.59,393.75 585.46,392.12 584.35,390.49 583.27,388.86 582.22,387.23 581.19,385.60 580.18,383.97 579.19,382.34 578.24,380.71 577.30,379.08 576.39,377.45 575.51,375.82 574.65,374.19 573.82,372.56 573.01,370.93 572.22,369.30 571.46,367.67 570.73,366.04 570.02,364.41 569.34,362.78 568.68,361.15 568.05,359.52 567.44,357.89 566.86,356.26 566.30,354.63 565.77,353.00 565.27,351.37 564.79,349.74 564.33,348.11 563.91,346.48 563.50,344.85 563.13,343.22 562.78,341.59 562.45,339.96 562.15,338.33 561.88,336.70 561.63,335.07 561.41,333.44 561.22,331.81 561.05,330.18 560.91,328.55 560.79,326.92 560.70,325.29 560.63,323.66 560.59,322.03 560.58,320.40 560.59,318.77 560.63,317.14 560.70,315.51 560.79,313.88 560.91,312.25 561.05,310.62 561.22,308.99 561.41,307.36 561.63,305.73 561.88,304.10 562.15,302.47 562.45,300.84 562.78,299.21 563.13,297.58 563.50,295.95 563.91,294.32 564.33,292.69 564.79,291.06 565.27,289.43 565.77,287.80 566.30,286.17 566.86,284.54 567.44,282.91 568.05,281.28 568.68,279.65 569.34,278.02 570.02,276.39 570.73,274.76 571.46,273.13 572.22,271.50 573.01,269.87 573.82,268.24 574.65,266.61 575.51,264.98 576.39,263.35 577.30,261.72 578.24,260.09 579.19,258.46 580.18,256.83 581.19,255.20 582.22,253.57 583.27,251.94 584.35,250.31 585.46,248.68 586.59,247.05 587.74,245.42 588.92,243.79 590.12,242.16 591.34,240.53 592.59,238.90 593.86,237.27 595.16,235.64 596.48,234.01 597.82,232.38 599.19,230.75 600.57,229.12 601.98,227.49 603.42,225.86 604.88,224.23 606.36,222.60 607.86,220.97 609.38,219.34 610.93,217.71 612.50,216.08 614.09,214.45 615.70,212.82 617.34,211.19 618.99,209.56 620.67,207.93 622.37,206.30 624.09,204.67 625.83,203.04 627.60,201.41 629.38,199.78 631.18,198.15 633.01,196.52 634.86,194.89 636.72,193.26 638.61,191.63 640.52,190.00 642.44,188.37 644.39,186.74 646.35,185.11 648.34,183.48 650.34,181.85 652.37,180.22 654.41,178.59 656.47,176.96 658.55,175.33 660.65,173.70 662.77,172.07 664.91,170.44 667.06,168.81 669.23,167.18 671.42,165.55 673.63,163.92 675.85,162.29 678.09,160.66 680.35,159.03 682.63,157.40 684.92,155.77 687.23,154.14 689.56,152.51 691.90,150.88 694.25,149.25 696.63,147.62 699.02,145.99 701.42,144.36 703.84,142.73 706.28,141.10 708.73,139.47 711.19,137.84 713.67,136.21 716.16,134.58 718.67,132.95 721.19,131.32 723.73,129.69 726.28,128.06 728.84,126.43 731.41,124.80 734.00,123.17 736.61,121.54 739.22,119.91 741.85,118.28 744.48,116.65 747.14,115.02 749.80,113.39 752.47,111.76 755.16,110.13 757.85,108.50 760.56,106.87 763.28,105.24 766.01,103.61 768.75,101.98 771.50,100.35 774.26,98.72 777.03,97.09 779.81,95.46 782.59,93.83 785.39,92.20 788.20,90.57 791.01,88.94 793.84,87.31 796.67,85.68 799.51,84.05 802.36,82.42 805.21,80.79 808.07,79.16 810.94,77.53 813.82,75.90 816.70,74.27 819.59,72.64 822.49,71.01 825.39,69.38 828.30,67.75 831.21,66.12 834.13,64.49 837.06,62.86 839.99,61.23 842.92,59.60 845.86,57.97 848.80,56.34 851.75,54.71 854.70,53.08 857.65,51.45 860.61,49.82 863.57,48.19 866.54,46.56 869.50,44.93 872.47,43.30 875.44,41.67 878.42,40.04 881.39,38.41 884.37,36.78 887.35,35.15 890.33,33.52 893.31,31.89 896.29,30.26 899.27,28.63 902.25,27.00"/>
<polyline points="902.25,613.80 898.84,612.17 895.44,610.54 892.03,608.91 888.62,607.28 885.22,605.65 881.81,604.02 878.41,602.39 875.01,600.76 871.61,599.13 868.22,597.50 864.82,595.87 861.43,594.24 858.05,592.61 854.66,590.98 851.28,589.35 847.91,587.72 844.53,586.09 841.17,584.46 837.80,582.83 834.44,581.20 831.09,579.57 827.74,577.94 824.40,576.31 821.06,574.68 817.73,573.05 814.41,571.42 811.09,569.79 807.78,568.16 804.48,566.53 801.19,564.90 797.90,563.27 794.62,561.64 791.35,560.01 788.08,558.38 784.83,556.75 781.59,555.12 778.35,553.49 775.12,551.86 771.91,550.23 768.70,548.60 765.50,546.97 762.31,545.34 759.14,543.71 755.97,542.08 752.82,540.45 749.68,538.82 746.55,537.19 743.43,535.56 740.32,533.93 737.23,532.30 734.14,530.67 731.07,529.04 728.02,527.41 724.98,525.78 721.95,524.15 718.93,522.52 715.93,520.89 712.94,519.26 709.97,517.63 707.01,516.00 704.07,514.37 701.14,512.74 698.22,511.11 695.33,509.48 692.45,507.85 689.58,506.22 686.73,504.59 683.90,502.96 681.08,501.33 678.28,499.70 675.50,498.07 672.73,496.44 669.98,494.81 667.25,493.18 664.54,491.55 661.85,489.92 659.17,488.29 656.51,486.66 653.87,485.03 651.25,483.40 648.65,481.77 646.07,480.14 643.51,478.51 640.97,476.88 638.45,475.25 635.94,473.62 633.46,471.99 631.00,470.36 628.56,468.73 626.14,467.10 623.74,465.47 621.36,463.84 619.01,462.21 616.67,460.58 614.36,458.95 612.07,457.32 609.80,455.69 607.55,454.06 605.33,452.43 603.12,450.80 600.95,449.17 598.79,447.54 596.66,445.91 594.55,444.28 592.46,442.65 590.40,441.02 588.36,439.39 586.35,437.76 584.35,436.13 582.39,434.50 580.45,432.87 578.53,431.24 576.63,429.61 574.77,427.98 572.92,426.35 571.10,424.72 569.31,423.09 567.54,421.46 565.80,419.83 564.08,418.20 562.39,416.57 560.73,414.94 559.09,413.31 557.48,411.68 555.89,410.05 554.33,408.42 552.80,406.79 551.29,405.16 549.81,403.53 548.35,401.90 546.93,400.27 545.53,398.64 544.16,397.01 542.81,395.38 541.49,393.75 540.20,392.12 538.94,390.49 537.71,388.86 536.50,387.23 535.32,385.60 534.17,383.97 533.04,382.34 531.95,380.71 530.88,379.08 529.84,377.45 528.83,375.82 527.85,374.19 526.90,372.56 525.97,370.93 525.08,369.30 524.21,367.67 523.37,366.04 522.56,364.41 521.78,362.78 521.03,361.15 520.30,359.52 519.61,357.89 518.94,356.26 518.31,354.63 517.70,353.00 517.13,351.37 516.58,349.74 516.06,348.11 515.57,346.48 515.11,344.85 514.68,343.22 514.28,341.59 513.91,339.96 513.57,338.33 513.26,336.70 512.97,335.07 512.72,333.44 512.50,331.81 512.31,330.18 512.14,328.55 512.01,326.92 511.90,325.29 511.83,323.66 511.78,322.03 511.77,320.40 511.78,318.77 511.83,317.14 511.90,315.51 512.01,313.88 512.14,312.25 512.31,310.62 512.50,308.99 512.72,307.36 512.97,305.73 513.26,304.10 513.57,302.47 513.91,300.84 514.28,299.21 514.68,297.58 515.11,295.95 515.57,294.32 516.06,292.69 516.58,291.06 517.13,289.43 517.70,287.80 518.31,286.17 518.94,284.54 519.61,282.91 520.30,281.28 521.03,279.65 521.78,278.02 522.56,276.39 523.37,274.76 524.21,273.13 525.08,271.50 525.97,269.87 526.90,268.24 527.85,266.61 528.83,264.98 529.84,263.35 530.88,261.72 531.95,260.09 533.04,258.46 534.17,256.83 535.32,255.20 536.50,253.57 537.71,251.94 538.94,250.31 540.20,248.68 541.49,247.05 542.81,245.42 544.16,243.79 545.53,242.16 546.93,240.53 548.35,238.90 549.81,237.27 551.29,235.64 552.80,234.01 554.33,232.38 555.89,230.75 557.48,229.12 559.09,227.49 560.73,225.86 562.39,224.23 564.08,222.60 565.80,220.97 567.54,219.34 569.31,217.71 571.10,216.08 572.92,214.45 574.77,212.82 576.63,211.19 578.53,209.56 580.45,207.93 582.39,206.30 584.35,204.67 586.35,203.04 588.36,201.41 590.40,199.78 592.46,198.15 594.55,196.52 596.66,194.89 598.79,193.26 600.95,191.63 603.12,190.00 605.33,188.37 607.55,186.74 609.80,185.11 612.07,183.48 614.36,181.85 616.67,180.22 619.01,178.59 621.36,176.96 623.74,175.33 626.14,173.70 628.56,172.07 631.00,170.44 633.46,168.81 635.94,167.18 638.45,165.55 640.97,163.92 643.51,162.29 646.07,160.66 648.65,159.03 651.25,157.40 653.87,155.77 656.51,154.14 659.17,152.51 661.85,150.88 664.54,149.25 667.25,147.62 669.98,145.99 672.73,144.36 675.50,142.73 678.28,141.10 681.08,139.47 683.90,137.84 686.73,136.21 689.58,134.58 692.45,132.95 695.33,131.32 698.22,129.69 701.14,128.06 704.07,126.43 707.01,124.80 709.97,123.17 712.94,121.54 715.93,119.91 718.93,118.28 721.95,116.65 724.98,115.02 728.02,113.39 731.07,111.76 734.14,110.13 737.23,108.50 740.32,106.87 743.43,105.24 746.55,103.61 749.68,101.98 752.82,100.35 755.97,98.72 759.14,97.09 762.31,95.46 765.50,93.83 768.70,92.20 771.91,90.57 775.12,88.94 778.35,87.31 781.59,85.68 784.83,84.05 788.08,82.42 791.35,80.79 794.62,79.16 797.90,77.53 801.19,75.90 804.48,74.27 807.78,72.64 811.09,71.01 814.41,69.38 817.73,67.75 821.06,66.12 824.40,64.49 827.74,62.86 831.09,61.23 834.44,59.60 837.80,57.97 841.17,56.34 844.53,54.71 847.91,53.08 851.28,51.45 854.66,49.82 858.05,48.19 861.43,46.56 864.82,44.93 868.22,43.30 871.61,41.67 875.01,40.04 878.41,38.41 881.81,36.78 885.22,35.15 888.62,33.52 892.03,31.89 895.44,30.26 898.84,28.63 902.25,27.00"/>
<polyline points="902.25,613.80 898.42,612.17 894.58,610.54 890.75,608.91 886.92,607.28 883.09,605.65 879.26,604.02 875.43,602.39 871.61,600.76 867.78,599.13 863.96,597.50 860.15,595.87 856.33,594.24 852.52,592.61 848.71,590.98 844.91,589.35 841.11,587.72 837.32,586.09 833.53,584.46 829.75,582.83 825.97,581.20 822.20,579.57 818.43,577.94 814.67,576.31 810.92,574.68 807.17,573.05 803.43,571.42 799.70,569.79 795.98,568.16 792.26,566.53 788.55,564.90 784.85,563.27 781.17,561.64 777.48,560.01 773.81,558.38 770.15,556.75 766.50,555.12 762.86,553.49 759.23,551.86 755.61,550.23 752.00,548.60 748.41,546.97 744.82,545.34 741.25,543.71 737.69,542.08 734.14,540.45 730.61,538.82 727.08,537.19 723.57,535.56 720.08,533.93 716.60,532.30 713.13,530.67 709.68,529.04 706.24,527.41 702.82,525.78 699.41,524.15 696.02,522.52 692.64,520.89 689.28,519.26 685.93,517.63 682.61,516.00 679.29,514.37 676.00,512.74 672.72,511.11 669.46,509.48 666.22,507.85 663.00,506.22 659.79,504.59 656.60,502.96 653.43,501.33 650.28,499.70 647.15,498.07 644.04,496.44 640.95,494.81 637.88,493.18 634.83,491.55 631.80,489.92 628.79,488.29 625.80,486.66 622.83,485.03 619.88,483.40 616.95,481.77 614.05,480.14 611.17,478.51 608.31,476.88 605.47,475.25 602.65,473.62 599.86,471.99 597.09,470.36 594.35,468.73 591.63,467.10 588.93,465.47 586.25,463.84 583.60,462.21 580.97,460.58 578.37,458.95 575.79,457.32 573.24,455.69 570.71,454.06 568.21,452.43 565.73,450.80 563.28,449.17 560.86,447.54 558.46,445.91 556.08,444.28 553.74,442.65 551.42,441.02 549.12,439.39 546.86,437.76 544.62,436.13 542.40,434.50 540.22,432.87 538.06,431.24 535.93,429.61 533.83,427.98 531.76,426.35 529.71,424.72 527.69,423.09 525.70,421.46 523.74,419.83 521.81,418.20 519.91,416.57 518.04,414.94 516.19,413.31 514.38,411.68 512.60,410.05 510.84,408.42 509.11,406.79 507.42,405.16 505.75,403.53 504.12,401.90 502.51,400.27 500.94,398.64 499.39,397.01 497.88,395.38 496.40,393.75 494.95,392.12 493.53,390.49 492.14,388.86 490.78,387.23 489.45,385.60 488.16,383.97 486.89,382.34 485.66,380.71 484.46,379.08 483.29,377.45 482.15,375.82 481.05,374.19 479.98,372.56 478.94,370.93 477.93,369.30 476.95,367.67 476.01,366.04 475.10,364.41 474.22,362.78 473.37,361.15 472.56,359.52 471.78,357.89 471.03,356.26 470.32,354.63 469.63,353.00 468.98,351.37 468.37,349.74 467.79,348.11 467.24,346.48 466.72,344.85 466.23,343.22 465.78,341.59 465.37,339.96 464.98,338.33 464.63,336.70 464.31,335.07 464.03,333.44 463.78,331.81 463.56,330.18 463.38,328.55 463.23,326.92 463.11,325.29 463.03,323.66 462.98,322.03 462.96,320.40 462.98,318.77 463.03,317.14 463.11,315.51 463.23,313.88 463.38,312.25 463.56,310.62 463.78,308.99 464.03,307.36 464.31,305.73 464.63,304.10 464.98,302.47 465.37,300.84 465.78,299.21 466.23,297.58 466.72,295.95 467.24,294.32 467.79,292.69 468.37,291.06 468.98,289.43 469.63,287.80 470.32,286.17 471.03,284.54 471.78,282.91 472.56,281.28 473.37,279.65 474.22,278.02 475.10,276.39 476.01,274.76 476.95,273.13 477.93,271.50 478.94,269.87 479.98,268.24 481.05,266.61 482.15,264.98 483.29,263.35 484.46,261.72 485.66,260.09 486.89,258.46 488.16,256.83 489.45,255.20 490.78,253.57 492.14,251.94 493.53,250.31 494.95,248.68 496.40,247.05 497.88,245.42 499.39,243.79 500.94,242.16 502.51,240.53 504.12,238.90 505.75,237.27 507.42,235.64 509.11,234.01 510.84,232.38 512.60,230.75 514.38,229.12 516.19,227.49 518.04,225.86 519.91,224.23 521.81,222.60 523.74,220.97 525.70,219.34 527.69,217.71 529.71,216.08 531.76,214.45 533.83,212.82 535.93,211.19 538.06,209.56 540.22,207.93 542.40,206.30 544.62,204.67 546.86,203.04 549.12,201.41 551.42,199.78 553.74,198.15 556.08,196.52 558.46,194.89 560.86,193.26 563.28,191.63 565.73,190.00 568.21,188.37 570.71,186.74 573.24,185.11 575.79,183.48 578.37,181.85 580.97,180.22 583.60,178.59 586.25,176.96 588.93,175.33 591.63,173.70 594.35,172.07 597.09,170.44 599.86,168.81 602.65,167.18 605.47,165.55 608.31,163.92 611.17,162.29 614.05,160.66 616.95,159.03 619.88,157.40 622.83,155.77 625.80,154.14 628.79,152.51 631.80,150.88 634.83,149.25 637.88,147.62 640.95,145.99 644.04,144.36 647.15,142.73 650.28,141.10 653.43,139.47 656.60,137.84 659.79,136.21 663.00,134.58 666.22,132.95 669.46,131.32 672.72,129.69 676.00,128.06 679.29,126.43 682.61,124.80 685.93,123.17 689.28,121.54 692.64,119.91 696.02,118.28 699.41,116.65 702.82,115.02 706.24,113.39 709.68,111.76 713.13,110.13 716.60,108.50 720.08,106.87 723.57,105.24 727.08,103.61 730.61,101.98 734.14,100.35 737.69,98.72 741.25,97.09 744.82,95.46 748.41,93.83 752.00,92.20 755.61,90.57 759.23,88.94 762.86,87.31 766.50,85.68 770.15,84.05 773.81,82.42 777.48,80.79 781.17,79.16 784.85,77.53 788.55,75.90 792.26,74.27 795.98,72.64 799.70,71.01 803.43,69.38 807.17,67.75 810.92,66.12 814.67,64.49 818.43,62.86 822.20,61.23 825.97,59.60 829.75,57.97 833.53,56.34 837.32,54.71 841.11,53.08 844.91,51.45 848.71,49.82 852.52,48.19 856.33,46.56 860.15,44.93 863.96,43.30 867.78,41.67 871.61,40.04 875.43,38.41 879.26,36.78 883.09,35.15 886.92,33.52 890.75,31.89 894.58,30.26 898.42,28.63 902.25,27.00"/>
<polyline points="902.25,613.80 897.99,612.17 893.73,610.54 889.47,608.91 885.22,607.28 880.96,605.65 876.70,604.02 872.45,602.39 868.20,600.76 863.95,599.13 859.71,597.50 855.47,595.87 851.23,594.24 847.00,592.61 842.77,590.98 838.54,589.35 834.32,587.72 830.10,586.09 825.89,584.46 821.69,582.83 817.49,581.20 813.30,579.57 809.12,577.94 804.94,576.31 800.77,574.68 796.61,573.05 792.45,571.42 788.31,569.79 784.17,568.16 780.04,566.53 775.92,564.90 771.81,563.27 767.71,561.64 763.62,560.01 759.54,558.38 755.48,556.75 751.42,555.12 747.37,553.49 743.34,551.86 739.32,550.23 735.31,548.60 731.31,546.97 727.33,545.34 723.36,543.71 719.40,542.08 715.46,540.45 711.53,538.82 707.62,537.19 703.72,535.56 699.84,533.93 695.97,532.30 692.12,530.67 688.28,529.04 684.46,527.41 680.66,525.78 676.87,524.15 673.10,522.52 669.35,520.89 665.61,519.26 661.90,517.63 658.20,516.00 654.52,514.37 650.86,512.74 647.22,511.11 643.60,509.48 639.99,507.85 636.41,506.22 632.85,504.59 629.31,502.96 625.79,501.33 622.29,499.70 618.81,498.07 615.35,496.44 611.92,494.81 608.50,493.18 605.11,491.55 601.75,489.92 598.40,488.29 595.08,486.66 591.78,485.03 588.51,483.40 585.25,481.77 582.03,480.14 578.83,478.51 575.65,476.88 572.49,475.25 569.37,473.62 566.26,471.99 563.19,470.36 560.14,468.73 557.11,467.10 554.11,465.47 551.14,463.84 548.19,462.21 545.28,460.58 542.38,458.95 539.52,457.32 536.68,455.69 533.88,454.06 531.10,452.43 528.34,450.80 525.62,449.17 522.93,447.54 520.26,445.91 517.62,444.28 515.01,442.65 512.44,441.02 509.89,439.39 507.37,437.76 504.88,436.13 502.42,434.50 499.99,432.87 497.60,431.24 495.23,429.61 492.89,427.98 490.59,426.35 488.32,424.72 486.08,423.09 483.87,421.46 481.69,419.83 479.54,418.20 477.43,416.57 475.35,414.94 473.30,413.31 471.28,411.68 469.30,410.05 467.35,408.42 465.43,406.79 463.55,405.16 461.70,403.53 459.88,401.90 458.10,400.27 456.35,398.64 454.63,397.01 452.95,395.38 451.30,393.75 449.69,392.12 448.11,390.49 446.57,388.86 445.06,387.23 443.59,385.60 442.15,383.97 440.74,382.34 439.37,380.71 438.04,379.08 436.74,377.45 435.48,375.82 434.25,374.19 433.06,372.56 431.90,370.93 430.78,369.30 429.70,367.67 428.65,366.04 427.64,364.41 426.66,362.78 425.72,361.15 424.82,359.52 423.95,357.89 423.12,356.26 422.32,354.63 421.57,353.00 420.84,351.37 420.16,349.74 419.51,348.11 418.90,346.48 418.33,344.85 417.79,343.22 417.29,341.59 416.82,339.96 416.40,338.33 416.01,336.70 415.65,335.07 415.34,333.44 415.06,331.81 414.82,330.18 414.61,328.55 414.45,326.92 414.32,325.29 414.22,323.66 414.17,322.03 414.15,320.40 414.17,318.77 414.22,317.14 414.32,315.51 414.45,313.88 414.61,312.25 414.82,310.62 415.06,308.99 415.34,307.36 415.65,305.73 416.01,304.10 416.40,302.47 416.82,300.84 417.29,299.21 417.79,297.58 418.33,295.95 418.90,294.32 419.51,292.69 420.16,291.06 420.84,289.43 421.57,287.80 422.32,286.17 423.12,284.54 423.95,282.91 424.82,281.28 425.72,279.65 426.66,278.02 427.64,276.39 428.65,274.76 429.70,273.13 430.78,271.50 431.90,269.87 433.06,268.24 434.25,266.61 435.48,264.98 436.74,263.35 438.04,261.72 439.37,260.09 440.74,258.46 442.15,256.83 443.59,255.20 445.06,253.57 446.57,251.94 448.11,250.31 449.69,248.68 451.30,247.05 452.95,245.42 454.63,243.79 456.35,242.16 458.10,240.53 459.88,238.90 461.70,237.27 463.55,235.64 465.43,234.01 467.35,232.38 469.30,230.75 471.28,229.12 473.30,227.49 475.35,225.86 477.43,224.23 479.54,222.60 481.69,220.97 483.87,219.34 486.08,217.71 488.32,216.08 490.59,214.45 492.89,212.82 495.23,211.19 497.60,209.56 499.99,207.93 502.42,206.30 504.88,204.67 507.37,203.04 509.89,201.41 512.44,199.78 515.01,198.15 517.62,196.52 520.26,194.89 522.93,193.26 525.62,191.63 528.34,190.00 531.10,188.37 533.88,186.74 536.68,185.11 539.52,183.48 542.38,181.85 545.28,180.22 548.19,178.59 551.14,176.96 554.11,175.33 557.11,173.70 560.14,172.07 563.19,170.44 566.26,168.81 569.37,167.18 572.49,165.55 575.65,163.92 578.83,162.29 582.03,160.66 585.25,159.03 588.51,157.40 591.78,155.77 595.08,154.14 598.40,152.51 601.75,150.88 605.11,149.25 608.50,147.62 611.92,145.99 615.35,144.36 618.81,142.73 622.29,141.10 625.79,139.47 629.31,137.84 632.85,136.21 636.41,134.58 639.99,132.95 643.60,131.32 647.22,129.69 650.86,128.06 654.52,126.43 658.20,124.80 661.90,123.17 665.61,121.54 669.35,119.91 673.10,118.28 676.87,116.65 680.66,115.02 684.46,113.39 688.28,111.76 692.12,110.13 695.97,108.50 699.84,106.87 703.72,105.24 707.62,103.61 711.53,101.98 715.46,100.35 719.40,98.72 723.36,97.09 727.33,95.46 731.31,93.83 735.31,92.20 739.32,90.57 743.34,88.94 747.37,87.31 751.42,85.68 755.48,84.05 759.54,82.42 763.62,80.79 767.71,79.16 771.81,77.53 775.92,75.90 780.04,74.27 784.17,72.64 788.31,71.01 792.45,69.38 796.61,67.75 800.77,66.12 804.94,64.49 809.12,62.86 813.30,61.23 817.49,59.60 821.69,57.97 825.89,56.34 830.10,54.71 834.32,53.08 838.54,51.45 842.77,49.82 847.00,48.19 851.23,46.56 855.47,44.93 859.71,43.30 863.95,41.67 868.20,40.04 872.45,38.41 876.70,36.78 880.96,35.15 885.22,33.52 889.47,31.89 893.73,30.26 897.99,28.63 902.25,27.00"/>
<polyline points="902.25,613.80 897.56,612.17 892.88,610.54 888.20,608.91 883.51,607.28 878.83,605.65 874.15,604.02 869.47,602.39 864.80,600.76 860.12,599.13 855.46,597.50 850.79,595.87 846.13,594.24 841.47,592.61 836.82,590.98 832.17,589.35 827.53,587.72 822.89,586.09 818.26,584.46 813.63,582.83 809.02,581.20 804.41,579.57 799.80,577.94 795.21,576.31 790.62,574.68 786.04,573.05 781.47,571.42 776.91,569.79 772.36,568.16 767.82,566.53 763.29,564.90 758.77,563.27 754.26,561.64 749.76,560.01 745.27,558.38 740.80,556.75 736.34,555.12 731.89,553.49 727.45,551.86 723.03,550.23 718.62,548.60 714.22,546.97 709.84,545.34 705.47,543.71 701.12,542.08 696.78,540.45 692.46,538.82 688.16,537.19 683.87,535.56 679.60,533.93 675.34,532.30 671.10,530.67 666.88,529.04 662.68,527.41 658.50,525.78 654.33,524.15 650.19,522.52 646.06,520.89 641.95,519.26 637.86,517.63 633.79,516.00 629.75,514.37 625.72,512.74 621.72,511.11 617.73,509.48 613.77,507.85 609.83,506.22 605.91,504.59 602.01,502.96 598.14,501.33 594.29,499.70 590.46,498.07 586.66,496.44 582.88,494.81 579.13,493.18 575.40,491.55 571.70,489.92 568.02,488.29 564.36,486.66 560.73,485.03 557.13,483.40 553.55,481.77 550.01,480.14 546.48,478.51 542.99,476.88 539.52,475.25 536.08,473.62 532.67,471.99 529.28,470.36 525.92,468.73 522.60,467.10 519.30,465.47 516.03,463.84 512.79,462.21 509.58,460.58 506.40,458.95 503.25,457.32 500.13,455.69 497.04,454.06 493.98,452.43 490.95,450.80 487.96,449.17 484.99,447.54 482.06,445.91 479.16,444.28 476.29,442.65 473.45,441.02 470.65,439.39 467.88,437.76 465.14,436.13 462.44,434.50 459.77,432.87 457.13,431.24 454.53,429.61 451.96,427.98 449.42,426.35 446.92,424.72 444.46,423.09 442.03,421.46 439.63,419.83 437.27,418.20 434.95,416.57 432.66,414.94 430.40,413.31 428.19,411.68 426.01,410.05 423.86,408.42 421.75,406.79 419.68,405.16 417.64,403.53 415.64,401.90 413.68,400.27 411.76,398.64 409.87,397.01 408.02,395.38 406.21,393.75 404.44,392.12 402.70,390.49 401.00,388.86 399.34,387.23 397.72,385.60 396.14,383.97 394.59,382.34 393.09,380.71 391.62,379.08 390.19,377.45 388.80,375.82 387.45,374.19 386.14,372.56 384.87,370.93 383.63,369.30 382.44,367.67 381.29,366.04 380.17,364.41 379.10,362.78 378.07,361.15 377.07,359.52 376.12,357.89 375.20,356.26 374.33,354.63 373.50,353.00 372.70,351.37 371.95,349.74 371.24,348.11 370.57,346.48 369.93,344.85 369.34,343.22 368.79,341.59 368.28,339.96 367.81,338.33 367.38,336.70 367.00,335.07 366.65,333.44 366.34,331.81 366.08,330.18 365.85,328.55 365.67,326.92 365.52,325.29 365.42,323.66 365.36,322.03 365.34,320.40 365.36,318.77 365.42,317.14 365.52,315.51 365.67,313.88 365.85,312.25 366.08,310.62 366.34,308.99 366.65,307.36 367.00,305.73 367.38,304.10 367.81,302.47 368.28,300.84 368.79,299.21 369.34,297.58 369.93,295.95 370.57,294.32 371.24,292.69 371.95,291.06 372.70,289.43 373.50,287.80 374.33,286.17 375.20,284.54 376.12,282.91 377.07,281.28 378.07,279.65 379.10,278.02 380.17,276.39 381.29,274.76 382.44,273.13 383.63,271.50 384.87,269.87 386.14,268.24 387.45,266.61 388.80,264.98 390.19,263.35 391.62,261.72 393.09,260.09 394.59,258.46 396.14,256.83 397.72,255.20 399.34,253.57 401.00,251.94 402.70,250.31 404.44,248.68 406.21,247.05 408.02,245.42 409.87,243.79 411.76,242.16 413.68,240.53 415.64,238.90 417.64,237.27 419.68,235.64 421.75,234.01 423.86,232.38 426.01,230.75 428.19,229.12 430.40,227.49 432.66,225.86 434.95,224.23 437.27,222.60 439.63,220.97 442.03,219.34 444.46,217.71 446.92,216.08 449.42,214.45 451.96,212.82 454.53,211.19 457.13,209.56 459.77,207.93 462.44,206.30 465.14,204.67 467.88,203.04 470.65,201.41 473.45,199.78 476.29,198.15 479.16,196.52 482.06,194.89 484.99,193.26 487.96,191.63 490.95,190.00 493.98,188.37 497.04,186.74 500.13,185.11 503.25,183.48 506.40,181.85 509.58,180.22 512.79,178.59 516.03,176.96 519.30,175.33 522.60,173.70 525.92,172.07 529.28,170.44 532.67,168.81 536.08,167.18 539.52,165.55 542.99,163.92 546.48,162.29 550.01,160.66 553.55,159.03 557.13,157.40 560.73,155.77 564.36,154.14 568.02,152.51 571.70,150.88 575.40,149.25 579.13,147.62 582.88,145.99 586.66,144.36 590.46,142.73 594.29,141.10 598.14,139.47 602.01,137.84 605.91,136.21 609.83,134.58 613.77,132.95 617.73,131.32 621.72,129.69 625.72,128.06 629.75,126.43 633.79,124.80 637.86,123.17 641.95,121.54 646.06,119.91 650.19,118.28 654.33,116.65 658.50,115.02 662.68,113.39 666.88,111.76 671.10,110.13 675.34,108.50 679.60,106.87 683.87,105.24 688.16,103.61 692.46,101.98 696.78,100.35 701.12,98.72 705.47,97.09 709.84,95.46 714.22,93.83 718.62,92.20 723.03,90.57 727.45,88.94 731.89,87.31 736.34,85.68 740.80,84.05 745.27,82.42 749.76,80.79 754.26,79.16 758.77,77.53 763.29,75.90 767.82,74.27 772.36,72.64 776.91,71.01 781.47,69.38 786.04,67.75 790.62,66.12 795.21,64.49 799.80,62.86 804.41,61.23 809.02,59.60 813.63,57.97 818.26,56.34 822.89,54.71 827.53,53.08 832.17,51.45 836.82,49.82 841.47,48.19 846.13,46.56 850.79,44.93 855.46,43.30 860.12,41.67 864.80,40.04 869.47,38.41 874.15,36.78 878.83,35.15 883.51,33.52 888.20,31.89 892.88,30.26 897.56,28.63 902.25,27.00"/>
<polyline points="902.25,613.80 897.14,612.17 892.03,610.54 886.92,608.91 881.81,607.28 876.70,605.65 871.60,604.02 866.49,602.39 861.39,600.76 856.29,599.13 851.20,597.50 846.11,595.87 841.03,594.24 835.94,592.61 830.87,590.98 825.80,589.35 820.73,587.72 815.68,586.09 810.62,584.46 805.58,582.83 800.54,581.20 795.51,579.57 790.49,577.94 785.48,576.31 780.47,574.68 775.48,573.05 770.49,571.42 765.52,569.79 760.55,568.16 755.60,566.53 750.65,564.90 745.72,563.27 740.80,561.64 735.90,560.01 731.00,558.38 726.12,556.75 721.25,555.12 716.40,553.49 711.56,551.86 706.73,550.23 701.92,548.60 697.13,546.97 692.35,545.34 687.58,543.71 682.84,542.08 678.10,540.45 673.39,538.82 668.69,537.19 664.02,535.56 659.36,533.93 654.71,532.30 650.09,530.67 645.49,529.04 640.90,527.41 636.34,525.78 631.79,524.15 627.27,522.52 622.77,520.89 618.29,519.26 613.83,517.63 609.39,516.00 604.97,514.37 600.58,512.74 596.21,511.11 591.87,509.48 587.54,507.85 583.24,506.22 578.97,504.59 574.72,502.96 570.49,501.33 566.29,499.70 562.12,498.07 557.97,496.44 553.85,494.81 549.75,493.18 545.69,491.55 541.64,489.92 537.63,488.29 533.64,486.66 529.69,485.03 525.76,483.40 521.86,481.77 517.98,480.14 514.14,478.51 510.33,476.88 506.54,475.25 502.79,473.62 499.07,471.99 495.37,470.36 491.71,468.73 488.08,467.10 484.48,465.47 480.92,463.84 477.38,462.21 473.88,460.58 470.41,458.95 466.98,457.32 463.57,455.69 460.20,454.06 456.87,452.43 453.56,450.80 450.29,449.17 447.06,447.54 443.86,445.91 440.70,444.28 437.57,442.65 434.47,441.02 431.41,439.39 428.39,437.76 425.41,436.13 422.46,434.50 419.54,432.87 416.67,431.24 413.83,429.61 411.02,427.98 408.26,426.35 405.53,424.72 402.84,423.09 400.19,421.46 397.58,419.83 395.00,418.20 392.47,416.57 389.97,414.94 387.51,413.31 385.09,411.68 382.71,410.05 380.37,408.42 378.07,406.79 375.81,405.16 373.59,403.53 371.41,401.90 369.27,400.27 367.17,398.64 365.11,397.01 363.09,395.38 361.12,393.75 359.18,392.12 357.29,390.49 355.43,388.86 353.62,387.23 351.85,385.60 350.13,383.97 348.44,382.34 346.80,380.71 345.20,379.08 343.64,377.45 342.12,375.82 340.65,374.19 339.22,372.56 337.83,370.93 336.49,369.30 335.19,367.67 333.93,366.04 332.71,364.41 331.54,362.78 330.41,361.15 329.33,359.52 328.29,357.89 327.29,356.26 326.34,354.63 325.43,353.00 324.56,351.37 323.74,349.74 322.96,348.11 322.23,346.48 321.54,344.85 320.90,343.22 320.30,341.59 319.74,339.96 319.23,338.33 318.76,336.70 318.34,335.07 317.96,333.44 317.62,331.81 317.33,330.18 317.09,328.55 316.89,326.92 316.73,325.29 316.62,323.66 316.55,322.03 316.53,320.40 316.55,318.77 316.62,317.14 316.73,315.51 316.89,313.88 317.09,312.25 317.33,310.62 317.62,308.99 317.96,307.36 318.34,305.73 318.76,304.10 319.23,302.47 319.74,300.84 320.30,299.21 320.90,297.58 321.54,295.95 322.23,294.32 322.96,292.69 323.74,291.06 324.56,289.43 325.43,287.80 326.34,286.17 327.29,284.54 328.29,282.91 329.33,281.28 330.41,279.65 331.54,278.02 332.71,276.39 333.93,274.76 335.19,273.13 336.49,271.50 337.83,269.87 339.22,268.24 340.65,266.61 342.12,264.98 343.64,263.35 345.20,261.72 346.80,260.09 348.44,258.46 350.13,256.83 351.85,255.20 353.62,253.57 355.43,251.94 357.29,250.31 359.18,248.68 361.12,247.05 363.09,245.42 365.11,243.79 367.17,242.16 369.27,240.53 371.41,238.90 373.59,237.27 375.81,235.64 378.07,234.01 380.37,232.38 382.71,230.75 385.09,229.12 387.51,227.49 389.97,225.86 392.47,224.23 395.00,222.60 397.58,220.97 400.19,219.34 402.84,217.71 405.53,216.08 408.26,214.45 411.02,212.82 413.83,211.19 416.67,209.56 419.54,207.93 422.46,206.30 425.41,204.67 428.39,203.04 431.41,201.41 434.47,199.78 437.57,198.15 440.70,196.52 443.86,194.89 447.06,193.26 450.29,191.63 453.56,190.00 456.87,188.37 460.20,186.74 463.57,185.11 466.98,183.48 470.41,181.85 473.88,180.22 477.38,178.59 480.92,176.96 484.48,175.33 488.08,173.70 491.71,172.07 495.37,170.44 499.07,168.81 502.79,167.18 506.54,165.55 510.33,163.92 514.14,162.29 517.98,160.66 521.86,159.03 525.76,157.40 529.69,155.77 533.64,154.14 537.63,152.51 541.64,150.88 545.69,149.25 549.75,147.62 553.85,145.99 557.97,144.36 562.12,142.73 566.29,141.10 570.49,139.47 574.72,137.84 578.97,136.21 583.24,134.58 587.54,132.95 591.87,131.32 596.21,129.69 600.58,128.06 604.97,126.43 609.39,124.80 613.83,123.17 618.29,121.54 622.77,119.91 627.27,118.28 631.79,116.65 636.34,115.02 640.90,113.39 645.49,111.76 650.09,110.13 654.71,108.50 659.36,106.87 664.02,105.24 668.69,103.61 673.39,101.98 678.10,100.35 682.84,98.72 687.58,97.09 692.35,95.46 697.13,93.83 701.92,92.20 706.73,90.57 711.56,88.94 716.40,87.31 721.25,85.68 726.12,84.05 731.00,82.42 735.90,80.79 740.80,79.16 745.72,77.53 750.65,75.90 755.60,74.27 760.55,72.64 765.52,71.01 770.49,69.38 775.48,67.75 780.47,66.12 785.48,64.49 790.49,62.86 795.51,61.23 800.54,59.60 805.58,57.97 810.62,56.34 815.68,54.71 820.73,53.08 825.80,51.45 830.87,49.82 835.94,48.19 841.03,46.56 846.11,44.93 851.20,43.30 856.29,41.67 861.39,40.04 866.49,38.41 871.60,36.78 876.70,35.15 881.81,33.52 886.92,31.89 892.03,30.26 897.14,28.63 902.25,27.00"/>
<line x1="1053.85" y1="564.90" x2="750.65" y2="564.90"/>
<line x1="1195.11" y1="516.00" x2="609.39" y2="516.00"/>
<line x1="1316.42" y1="467.10" x2="488.08" y2="467.10"/>
<line x1="1409.50" y1="418.20" x2="395.00" y2="418.20"/>
<line x1="1468.01" y1="369.30" x2="336.49" y2="369.30"/>
<line x1="1487.97" y1="320.40" x2="316.53" y2="320.40"/>
<line x1="1468.01" y1="271.50" x2="336.49" y2="271.50"/>
<line x1="1409.50" y1="222.60" x2="395.00" y2="222.60"/>
<line x1="1316.42" y1="173.70" x2="488.08" y2="173.70"/>
<line x1="1195.11" y1="124.80" x2="609.39" y2="124.80"/>
<line x1="1053.85" y1="75.90" x2="750.65" y2="75.90"/>
</g>
<g fill="#909090" font-family="Liberation Sans" font-size="11.2" text-anchor="middle">
<text x="315.5" y="329.9">+180<tspan font-size="7" dx="2.5" dy="-3.5">°</tspan></text>
<text x="413.3" y="329.9">+150<tspan font-size="7" dx="2.5" dy="-3.5">°</tspan></text>
<text x="511.1" y="329.9">+120<tspan font-size="7" dx="2.5" dy="-3.5">°</tspan></text>
<text x="608.9" y="329.9">+90<tspan font-size="7" dx="2.5" dy="-3.5">°</tspan></text>
<text x="706.7" y="329.9">+60<tspan font-size="7" dx="2.5" dy="-3.5">°</tspan></text>
<text x="804.5" y="329.9">+30<tspan font-size="7" dx="2.5" dy="-3.5">°</tspan></text>
<text x="902.2" y="329.9">+0<tspan font-size="7" dx="2.5" dy="-3.5">°</tspan></text>
<text x="1000.0" y="329.9">+330<tspan font-size="7" dx="2.5" dy="-3.5">°</tspan></text>
<text x="1097.8" y="329.9">+300<tspan font-size="7" dx="2.5" dy="-3.5">°</tspan></text>
<text x="1195.6" y="329.9">+270<tspan font-size="7" dx="2.5" dy="-3.5">°</tspan></text>
<text x="1293.4" y="329.9">+240<tspan font-size="7" dx="2.5" dy="-3.5">°</tspan></text>
<text x="1391.2" y="329.9">+210<tspan font-size="7" dx="2.5" dy="-3.5">°</tspan></text>
<text x="1489.0" y="329.9">+180<tspan font-size="7" dx="2.5" dy="-3.5">°</tspan></text>
<text x="901.2" y="24.5">+90<tspan font-size="7" dx="2.5" dy="-3.5">°</tspan></text>
<text x="901.2" y="122.3">+60<tspan font-size="7" dx="2.5" dy="-3.5">°</tspan></text>
<text x="901.2" y="220.1">+30<tspan font-size="7" dx="2.5" dy="-3.5">°</tspan></text>
<text x="903.2" y="427.7">−30<tspan font-size="7" dx="2.5" dy="-3.5">°</tspan></text>
<text x="903.2" y="525.5">−60<tspan font-size="7" dx="2.5" dy="-3.5">°</tspan></text>
<text x="903.2" y="624.8">−90<tspan font-size="7" dx="2.5" dy="-3.5">°</tspan></text>
</g>
<polyline fill="none" stroke="#808080" stroke-width="1.0" stroke-dasharray="1.7 2.0" stroke-opacity="0.6" stroke-linejoin="round" points="683.90,137.00 731.00,133.20 776.40,150.20 806.70,184.20 844.50,244.70 874.70,308.90 893.60,346.70 920.00,384.50 954.00,441.00"/>
<polyline fill="none" stroke="#808080" stroke-width="1.0" stroke-dasharray="1.7 2.0" stroke-opacity="0.6" stroke-linejoin="round" points="996.70,103.30 958.00,140.00 939.00,195.60 901.00,271.00 867.00,331.60 844.50,384.50 829.00,448.70"/>
<polyline fill="none" stroke="#808080" stroke-width="1.0" stroke-dasharray="1.7 2.0" stroke-opacity="0.6" stroke-linejoin="round" points="800.00,128.00 784.00,135.60 746.70,144.90 684.50,179.00 622.00,210.00 560.00,238.00"/>
<polyline fill="none" stroke="#808080" stroke-width="1.0" stroke-dasharray="1.7 2.0" stroke-opacity="0.6" stroke-linejoin="round" points="737.00,134.00 690.70,160.40 653.00,194.70 631.60,244.50 630.00,294.00 636.00,344.00 638.00,375.00"/>
<polyline fill="none" stroke="#808080" stroke-width="1.0" stroke-dasharray="1.7 2.0" stroke-opacity="0.6" stroke-linejoin="round" points="762.00,163.60 715.60,197.80 684.50,244.50 653.00,306.70 641.00,337.80 645.00,360.00 664.00,400.00"/>
<polyline fill="none" stroke="#808080" stroke-width="1.0" stroke-dasharray="1.7 2.0" stroke-opacity="0.6" stroke-linejoin="round" points="1037.00,137.00 1070.00,138.00 1100.00,143.00 1124.00,145.00 1170.00,160.00 1222.00,176.00 1289.00,202.00"/>
<polyline fill="none" stroke="#808080" stroke-width="1.3" stroke-linejoin="round" points="1120.00,142.00 1127.00,147.00"/>
<polyline fill="none" stroke="#ff2200" stroke-width="1.6" stroke-dasharray="1.7 2.0" stroke-linejoin="round" points="778.00,111.00 784.90,125.30 789.80,176.70 794.70,220.70 805.80,266.20 809.30,280.40 811.00,289.30"/>
<polyline fill="none" stroke="#ff2200" stroke-width="1.6" stroke-dasharray="1.7 2.0" stroke-linejoin="round" points="1053.00,79.70 1033.00,71.70 976.00,50.50"/>
<polyline fill="none" stroke="#ff2200" stroke-width="1.6" stroke-dasharray="1.7 2.0" stroke-linejoin="round" points="886.00,35.00 888.40,36.50 886.60,44.40 883.50,55.40 879.90,65.00 860.70,127.80 846.00,176.70 837.80,221.80 833.30,240.40 824.40,257.30 819.00,273.30 811.00,292.00"/>
<polyline fill="none" stroke="#ff2200" stroke-width="1.6" stroke-dasharray="1.7 2.0" stroke-linejoin="round" points="833.00,48.30 846.70,44.20 856.70,41.70 866.70,39.20 874.40,37.70 886.00,35.00"/>
<polyline fill="none" stroke="#ff2200" stroke-width="1.6" stroke-dasharray="1.7 2.0" stroke-linejoin="round" points="1035.00,91.70 980.00,71.70 937.30,62.30 926.70,66.70 917.00,79.00 900.00,101.00 887.60,122.90 860.70,181.60 845.80,221.80 821.80,264.40 813.80,290.20"/>
<polyline fill="none" stroke="#ff2200" stroke-width="1.6" stroke-dasharray="1.7 2.0" stroke-linejoin="round" points="1145.00,150.80 1100.00,131.70 1033.30,107.70 1016.00,101.00 973.30,91.00 956.00,90.30 926.70,111.70 900.00,138.00 877.80,176.70 848.00,225.00 835.00,240.00 832.40,264.40 831.60,291.00"/>
<polyline fill="none" stroke="#ffa500" stroke-width="1.6" stroke-dasharray="1.7 2.0" stroke-linejoin="round" points="796.70,111.70 814.00,88.70 822.70,76.00 829.30,64.00 836.00,55.00 846.70,50.00 872.00,40.00"/>
<polyline fill="none" stroke="#ffa500" stroke-width="1.6" stroke-dasharray="1.7 2.0" stroke-linejoin="round" points="816.70,129.00 836.70,88.70 843.30,72.70 850.00,56.70 855.00,46.00 866.70,41.00 880.00,37.00"/>
<polyline fill="none" stroke="#ffa500" stroke-width="1.6" stroke-dasharray="1.7 2.0" stroke-linejoin="round" points="888.00,103.30 889.60,72.40 889.60,38.30"/>
<polyline fill="none" stroke="#ffa500" stroke-width="1.6" stroke-dasharray="1.7 2.0" stroke-linejoin="round" points="881.20,66.70 883.00,52.00 885.00,37.00"/>
<polyline fill="none" stroke="#ffa500" stroke-width="1.6" stroke-dasharray="1.7 2.0" stroke-linejoin="round" points="1037.00,114.00 1033.30,111.70 1024.00,102.30 1013.30,91.70 993.30,75.70 980.00,59.00 975.00,54.00"/>
<polyline fill="none" stroke="#ffa500" stroke-width="1.6" stroke-dasharray="1.7 2.0" stroke-linejoin="round" points="1069.30,101.00 1046.70,86.30 1020.00,69.00 993.30,57.00 985.00,54.00"/>
<polyline fill="none" stroke="#ffa500" stroke-width="1.6" stroke-dasharray="1.7 2.0" stroke-linejoin="round" points="810.00,61.00 840.00,50.00 872.00,40.00"/>
<polyline fill="none" stroke="#ffa500" stroke-width="1.6" stroke-dasharray="1.7 2.0" stroke-linejoin="round" points="814.70,57.30 840.00,49.30 866.70,41.00 880.00,37.00"/>
<polyline fill="none" stroke="#808080" stroke-width="1.5" stroke-linejoin="round" points="893.90,56.60 901.80,57.20 911.00,62.70 920.00,68.80 929.30,74.90 953.30,91.70 985.00,117.00 1017.30,143.70 1041.70,166.70"/>
<polyline fill="none" stroke="#808080" stroke-width="1.5" stroke-linejoin="round" points="1012.50,150.00 1017.00,145.50 1033.00,139.00"/>
<polyline fill="none" stroke="#808080" stroke-width="1.5" stroke-linejoin="round" points="682.70,138.00 696.00,135.70"/>
<polyline fill="none" stroke="#808080" stroke-width="1.5" stroke-linejoin="round" points="888.00,103.00 892.00,101.00 898.00,100.00"/>
<path fill="none" stroke="#ffa500" stroke-width="2.2" stroke-linecap="round" d="M725,84.2 Q729,87.5 740,86.6 C770,83 800,70 872.5,38.7"/>
<polyline fill="none" stroke="#ffa500" stroke-width="1.8" stroke-linejoin="round" points="864.00,38.30 872.50,38.50 872.70,42.00"/>
<polyline fill="none" stroke="#ffa500" stroke-width="2.2" stroke-linejoin="round" points="941.30,40.30 980.00,56.30 1020.00,69.00 1077.30,83.70"/>
<polyline fill="none" stroke="#ff2200" stroke-width="1.8" stroke-linejoin="round" points="1053.30,79.00 1084.00,91.00"/>
<polyline fill="none" stroke="#ff2200" stroke-width="1.8" stroke-linejoin="round" points="1035.30,91.70 1161.70,143.30"/>
<polyline fill="none" stroke="#ff2200" stroke-width="1.8" stroke-linejoin="round" points="1145.00,150.80 1169.00,160.80"/>
<polyline fill="none" stroke="#ff2200" stroke-width="1.8" stroke-linejoin="round" points="767.50,105.00 772.00,107.00 778.00,111.00"/>
<polyline fill="none" stroke="#cc2200" stroke-width="0.8" stroke-linejoin="round" points="834.00,240.40 818.00,269.80"/>
<polyline fill="none" stroke="#ffa500" stroke-width="2.0" stroke-linejoin="round" points="788.30,125.00 796.70,111.70"/>
<polyline fill="none" stroke="#ffa500" stroke-width="2.0" stroke-linejoin="round" points="811.70,139.00 816.70,129.00"/>
<polyline fill="none" stroke="#ffa500" stroke-width="2.0" stroke-linejoin="round" points="888.00,118.30 888.00,103.30"/>
<polyline fill="none" stroke="#ffa500" stroke-width="2.0" stroke-linejoin="round" points="1069.30,101.00 1082.70,109.00"/>
<polyline fill="none" stroke="#ffa500" stroke-width="2.0" stroke-linejoin="round" points="882.30,79.10 881.20,66.70"/>
<polyline fill="none" stroke="#ffa500" stroke-width="2.0" stroke-linejoin="round" points="1036.00,113.70 1046.70,124.30"/>
<polyline fill="none" stroke="#ffff00" stroke-width="2.0" stroke-linejoin="round" points="1033.30,135.70 1044.00,123.70"/>
<circle cx="882.3" cy="79.1" r="1.6" fill="#ff5533"/>
<circle cx="788.3" cy="125.0" r="1.6" fill="#ff5533"/>
<circle cx="811.7" cy="139.0" r="1.6" fill="#ff5533"/>
<circle cx="888.0" cy="118.3" r="1.6" fill="#ff5533"/>
<circle cx="1082.7" cy="109.0" r="1.6" fill="#ff5533"/>
<circle cx="1046.7" cy="124.3" r="1.6" fill="#ff5533"/>
<circle cx="1033.3" cy="135.7" r="1.6" fill="#ff5533"/>
<circle cx="1084.0" cy="91.0" r="1.6" fill="#ff5533"/>
<circle cx="1161.7" cy="143.3" r="1.6" fill="#ff5533"/>
<circle cx="1169.0" cy="160.8" r="1.6" fill="#ff5533"/>
<circle cx="767.5" cy="105.0" r="1.6" fill="#ff5533"/>
<ellipse cx="1067.9" cy="129.2" rx="48" ry="12" transform="rotate(25 1067.9 129.2)" fill="none" stroke="#ffff00" stroke-width="2.2"/>
<circle cx="810" cy="292.5" r="24.2" fill="none" stroke="#ff2200" stroke-width="2.2"/>
<path d="M1049.8 120.3h7.0M1053.3 116.8v7.0" stroke="#ff1010" stroke-width="1.4"/>
<path d="M806.0 292.0h6.0M809.0 289.0v6.0" stroke="#ff2200" stroke-width="1.3"/>
<path d="M829.0 291.0h6.0M832.0 288.0v6.0" stroke="#ff2200" stroke-width="1.3"/>
<circle cx="802.5" cy="62.5" r="3.2" fill="#ff1010"/>
<g fill="#ffffff" font-family="Liberation Sans" font-size="11" text-anchor="middle">
<text x="801.4" y="66">OCT</text><text x="1067" y="131.7">DRA</text><text x="810.5" y="296">STA</text>
</g>
<g fill="#ffffff" font-family="Liberation Mono" font-size="13.9">
<text x="315.5" y="30.00" xml:space="preserve">HU0009</text>
<text x="315.5" y="43.04" xml:space="preserve">Beg: 20251005 19:39:08 (sol = 192.47°)</text>
<text x="315.5" y="56.08" xml:space="preserve">End: 20251005 22:59:23 (sol = 192.60°)</text>
<text x="315.5" y="69.12" xml:space="preserve">--------------------------------------</text>
<text x="315.5" y="82.16" xml:space="preserve">...: 6</text>
<text x="315.5" y="95.20" xml:space="preserve">OCT: 6</text>
<text x="315.5" y="108.24" xml:space="preserve">STA: 4</text>
<text x="315.5" y="121.28" xml:space="preserve">DRA: 1</text>
</g>
<defs><clipPath id="ax"><rect x="19.5" y="641.5" width="1766.0" height="201.0"/></clipPath></defs>
<g clip-path="url(#ax)">
<g fill="#555555" font-family="Liberation Sans" font-size="31.5">
<text transform="translate(149.20 697.20) rotate(-90)" textLength="54.60" lengthAdjust="spacingAndGlyphs">APR</text>
<text transform="translate(294.20 701.60) rotate(-90)" textLength="56.80" lengthAdjust="spacingAndGlyphs">MAY</text>
<text transform="translate(436.30 690.80) rotate(-90)" textLength="48.60" lengthAdjust="spacingAndGlyphs">JUN</text>
<text transform="translate(576.40 687.00) rotate(-90)" textLength="45.40" lengthAdjust="spacingAndGlyphs">JUL</text>
<text transform="translate(723.10 700.80) rotate(-90)" textLength="58.20" lengthAdjust="spacingAndGlyphs">AUG</text>
<text transform="translate(872.50 694.40) rotate(-90)" textLength="50.60" lengthAdjust="spacingAndGlyphs">SEP</text>
<text transform="translate(1016.40 700.80) rotate(-90)" textLength="57.20" lengthAdjust="spacingAndGlyphs">OCT</text>
<text transform="translate(1169.20 704.20) rotate(-90)" textLength="59.40" lengthAdjust="spacingAndGlyphs">NOV</text>
<text transform="translate(1318.60 700.40) rotate(-90)" textLength="55.40" lengthAdjust="spacingAndGlyphs">DEC</text>
<text transform="translate(1469.60 688.40) rotate(-90)" textLength="47.00" lengthAdjust="spacingAndGlyphs">JAN</text>
<text transform="translate(1628.60 696.60) rotate(-90)" textLength="50.40" lengthAdjust="spacingAndGlyphs">FEB</text>
<text transform="translate(1766.40 705.40) rotate(-90)" textLength="60.40" lengthAdjust="spacingAndGlyphs">MAR</text>
</g>
<g stroke="#5e5e5e" stroke-width="2" stroke-dasharray="2 3.5">
<line x1="74.2" y1="641.5" x2="74.2" y2="842.5"/>
<line x1="218.2" y1="641.5" x2="218.2" y2="842.5"/>
<line x1="365.0" y1="641.5" x2="365.0" y2="842.5"/>
<line x1="505.0" y1="641.5" x2="505.0" y2="842.5"/>
<line x1="650.0" y1="641.5" x2="650.0" y2="842.5"/>
<line x1="797.0" y1="641.5" x2="797.0" y2="842.5"/>
<line x1="940.0" y1="641.5" x2="940.0" y2="842.5"/>
<line x1="1091.0" y1="641.5" x2="1091.0" y2="842.5"/>
<line x1="1239.0" y1="641.5" x2="1239.0" y2="842.5"/>
<line x1="1394.0" y1="641.5" x2="1394.0" y2="842.5"/>
<line x1="1548.3" y1="641.5" x2="1548.3" y2="842.5"/>
<line x1="1687.0" y1="641.5" x2="1687.0" y2="842.5"/>
</g>
<line x1="964" y1="641.5" x2="964" y2="842.5" stroke="#ff0000" stroke-width="2.5" stroke-dasharray="5 2.26" stroke-dashoffset="2.76"/>
<rect x="106.2" y="832.0" width="22.6" height="4" fill="#ee82ee"/>
<rect x="165.2" y="832.0" width="179.8" height="4" fill="#ee82ee"/>
<rect x="366.0" y="832.0" width="259.0" height="4" fill="#ee82ee"/>
<rect x="635.0" y="832.0" width="151.0" height="4" fill="#ee82ee"/>
<rect x="807.0" y="832.0" width="92.0" height="4" fill="#ee82ee"/>
<rect x="920.0" y="832.0" width="53.0" height="4" fill="#ee82ee"/>
<rect x="984.0" y="832.0" width="82.0" height="4" fill="#ee82ee"/>
<rect x="1082.0" y="832.0" width="121.0" height="4" fill="#ee82ee"/>
<rect x="1244.0" y="832.0" width="82.0" height="4" fill="#ee82ee"/>
<rect x="1337.0" y="832.0" width="18.0" height="4" fill="#ee82ee"/>
<rect x="1381.0" y="832.0" width="63.0" height="4" fill="#ee82ee"/>
<rect x="1459.0" y="832.0" width="53.0" height="4" fill="#ee82ee"/>
<rect x="1523.0" y="832.0" width="24.0" height="4" fill="#ee82ee"/>
<rect x="1724.0" y="832.0" width="24.0" height="4" fill="#ee82ee"/>
<rect x="1758.0" y="832.0" width="24.0" height="4" fill="#ee82ee"/>
<rect x="165.2" y="815.6" width="22.6" height="4" fill="#dd11ee"/>
<rect x="223.3" y="815.6" width="62.5" height="4" fill="#dd11ee"/>
<rect x="312.0" y="815.6" width="28.0" height="4" fill="#dd11ee"/>
<rect x="366.0" y="815.6" width="126.0" height="4" fill="#dd11ee"/>
<rect x="508.0" y="815.6" width="146.0" height="4" fill="#dd11ee"/>
<rect x="704.0" y="815.6" width="33.0" height="4" fill="#dd11ee"/>
<rect x="773.0" y="815.6" width="72.0" height="4" fill="#dd11ee"/>
<rect x="871.0" y="815.6" width="117.0" height="4" fill="#dd11ee"/>
<rect x="1003.0" y="815.6" width="14.0" height="4" fill="#dd11ee"/>
<rect x="1062.0" y="815.6" width="151.0" height="4" fill="#dd11ee"/>
<rect x="1244.0" y="815.6" width="23.0" height="4" fill="#dd11ee"/>
<rect x="1293.0" y="815.6" width="23.0" height="4" fill="#dd11ee"/>
<rect x="1342.0" y="815.6" width="23.0" height="4" fill="#dd11ee"/>
<rect x="1386.0" y="815.6" width="43.0" height="4" fill="#dd11ee"/>
<rect x="1459.0" y="815.6" width="24.0" height="4" fill="#dd11ee"/>
<rect x="1548.0" y="815.6" width="23.0" height="4" fill="#dd11ee"/>
<rect x="165.2" y="799.3" width="22.6" height="4" fill="#ff2200"/>
<rect x="258.0" y="799.3" width="229.0" height="4" fill="#ff2200"/>
<rect x="508.0" y="799.3" width="107.0" height="4" fill="#ff2200"/>
<rect x="626.0" y="799.3" width="92.0" height="4" fill="#ff2200"/>
<rect x="729.0" y="799.3" width="97.0" height="4" fill="#ff2200"/>
<rect x="949.0" y="799.3" width="200.0" height="4" fill="#ff2200"/>
<rect x="1160.0" y="799.3" width="88.0" height="4" fill="#ff2200"/>
<rect x="1258.0" y="799.3" width="186.0" height="4" fill="#ff2200"/>
<rect x="1459.0" y="799.3" width="24.0" height="4" fill="#ff2200"/>
<rect x="1552.0" y="799.3" width="24.0" height="4" fill="#ff2200"/>
<rect x="194.1" y="783.0" width="24.1" height="4" fill="#ffaa11"/>
<rect x="320.8" y="783.0" width="186.2" height="4" fill="#ffaa11"/>
<rect x="518.0" y="783.0" width="22.8" height="4" fill="#ffaa11"/>
<rect x="557.0" y="783.0" width="126.0" height="4" fill="#ffaa11"/>
<rect x="807.0" y="783.0" width="24.0" height="4" fill="#ffaa11"/>
<rect x="954.0" y="783.0" width="19.0" height="4" fill="#ffaa11"/>
<rect x="988.0" y="783.0" width="137.0" height="4" fill="#ffaa11"/>
<rect x="1155.0" y="783.0" width="63.0" height="4" fill="#ffaa11"/>
<rect x="1244.0" y="783.0" width="23.0" height="4" fill="#ffaa11"/>
<rect x="1317.0" y="783.0" width="24.0" height="4" fill="#ffaa11"/>
<rect x="1396.0" y="783.0" width="23.0" height="4" fill="#ffaa11"/>
<rect x="1464.0" y="783.0" width="186.0" height="4" fill="#ffaa11"/>
<rect x="341.0" y="766.6" width="29.0" height="4" fill="#ffee00"/>
<rect x="410.0" y="766.6" width="37.8" height="4" fill="#ffee00"/>
<rect x="468.8" y="766.6" width="23.2" height="4" fill="#ffee00"/>
<rect x="527.0" y="766.6" width="18.8" height="4" fill="#ffee00"/>
<rect x="562.0" y="766.6" width="28.0" height="4" fill="#ffee00"/>
<rect x="616.0" y="766.6" width="33.0" height="4" fill="#ffee00"/>
<rect x="959.0" y="766.6" width="29.0" height="4" fill="#ffee00"/>
<rect x="1062.0" y="766.6" width="24.0" height="4" fill="#ffee00"/>
<rect x="1101.0" y="766.6" width="24.0" height="4" fill="#ffee00"/>
<rect x="1160.0" y="766.6" width="34.0" height="4" fill="#ffee00"/>
<rect x="1248.0" y="766.6" width="24.0" height="4" fill="#ffee00"/>
<rect x="1425.0" y="766.6" width="87.0" height="4" fill="#ffee00"/>
<rect x="420.0" y="750.2" width="22.8" height="4" fill="#aaff33"/>
<rect x="532.0" y="750.2" width="23.8" height="4" fill="#aaff33"/>
<rect x="567.0" y="750.2" width="23.0" height="4" fill="#aaff33"/>
<rect x="621.0" y="750.2" width="121.0" height="4" fill="#aaff33"/>
<rect x="969.0" y="750.2" width="166.0" height="4" fill="#aaff33"/>
<rect x="1185.0" y="750.2" width="161.0" height="4" fill="#aaff33"/>
<rect x="1469.0" y="750.2" width="24.0" height="4" fill="#aaff33"/>
<rect x="428.8" y="733.9" width="24.0" height="4" fill="#55cc00"/>
<rect x="576.0" y="733.9" width="157.0" height="4" fill="#55cc00"/>
<rect x="993.0" y="733.9" width="112.0" height="4" fill="#55cc00"/>
<rect x="1116.0" y="733.9" width="107.0" height="4" fill="#55cc00"/>
<rect x="1263.0" y="733.9" width="29.0" height="4" fill="#55cc00"/>
<rect x="1489.0" y="733.9" width="23.0" height="4" fill="#55cc00"/>
<rect x="591.0" y="717.5" width="24.0" height="4" fill="#00ff77"/>
<rect x="655.0" y="717.5" width="117.0" height="4" fill="#00ff77"/>
<rect x="1072.0" y="717.5" width="171.0" height="4" fill="#00ff77"/>
<rect x="1263.0" y="717.5" width="24.0" height="4" fill="#00ff77"/>
<rect x="596.0" y="701.2" width="137.0" height="4" fill="#00ddff"/>
<rect x="1091.0" y="701.2" width="29.0" height="4" fill="#00ddff"/>
<rect x="1199.0" y="701.2" width="24.0" height="4" fill="#00ddff"/>
<rect x="1273.0" y="701.2" width="53.0" height="4" fill="#00ddff"/>
<rect x="1111.0" y="684.9" width="24.0" height="4" fill="#0011cc"/>
<g fill="#ffffff" font-family="Liberation Sans" font-size="10.4" text-anchor="middle">
<text x="117.2" y="831.9">KSE</text>
<text x="254.7" y="831.9">ETA</text>
<text x="494.5" y="831.9">NZC</text>
<text x="710.4" y="831.9">NDA</text>
<text x="852.9" y="831.9">SPE</text>
<text x="945.4" y="831.9">ARD</text>
<text x="1024.9" y="831.9">EGE</text>
<text x="1142.4" y="831.9">NTA</text>
<text x="1283.5" y="831.9">MON</text>
<text x="1343.5" y="831.9">URS</text>
<text x="1411.7" y="831.9">AHY</text>
<text x="1485.7" y="831.9">GUM</text>
<text x="1535.7" y="831.9">OHY</text>
<text x="1735.3" y="831.9">XHE</text>
<text x="1769.7" y="831.9">EVI</text>
<text x="175.3" y="815.5">AVB</text>
<text x="254.8" y="815.5">ELY</text>
<text x="323.7" y="815.5">CAM</text>
<text x="431.7" y="815.5">SSG</text>
<text x="578.7" y="815.5">PCA</text>
<text x="720.7" y="815.5">AUD</text>
<text x="808.2" y="815.5">AUR</text>
<text x="930.9" y="815.5">DSX</text>
<text x="1009.7" y="815.5">OCU</text>
<text x="1137.2" y="815.5">OER</text>
<text x="1254.5" y="815.5">DKD</text>
<text x="1303.9" y="815.5">DSV</text>
<text x="1353.2" y="815.5">ALY</text>
<text x="1407.5" y="815.5">ILE</text>
<text x="1471.7" y="815.5">SCC</text>
<text x="1559.2" y="815.5">FEV</text>
<text x="176.2" y="799.2">LYR</text>
<text x="372.7" y="799.2">JMC</text>
<text x="558.8" y="799.2">JPE</text>
<text x="671.4" y="799.2">PAU</text>
<text x="773.9" y="799.2">NIA</text>
<text x="1049.5" y="799.2">STA</text>
<text x="1205.5" y="799.2">NOO</text>
<text x="1353.0" y="799.2">COM</text>
<text x="1470.4" y="799.2">NCC</text>
<text x="1563.4" y="799.2">FED</text>
<text x="204.7" y="782.9">HVI</text>
<text x="412.0" y="782.9">ARI</text>
<text x="529.7" y="782.9">SZC</text>
<text x="617.7" y="782.9">CAP</text>
<text x="818.2" y="782.9">NUE</text>
<text x="961.3" y="782.9">OCT</text>
<text x="1059.4" y="782.9">ORI</text>
<text x="1186.5" y="782.9">AMO</text>
<text x="1255.0" y="782.9">DPC</text>
<text x="1328.5" y="782.9">XVI</text>
<text x="1407.7" y="782.9">QUA</text>
<text x="1559.5" y="782.9">AAN</text>
<text x="352.9" y="766.5">TAH</text>
<text x="431.0" y="766.5">JEA</text>
<text x="480.2" y="766.5">JIP</text>
<text x="538.9" y="766.5">PPS</text>
<text x="578.7" y="766.5">ZCS</text>
<text x="632.9" y="766.5">GDR</text>
<text x="970.4" y="766.5">DRA</text>
<text x="1073.4" y="766.5">LUM</text>
<text x="1112.9" y="766.5">RPU</text>
<text x="1176.5" y="766.5">THA</text>
<text x="1259.0" y="766.5">PSU</text>
<text x="1470.7" y="766.5">XCB</text>
<text x="430.0" y="750.1">IRC</text>
<text x="545.8" y="750.1">CAN</text>
<text x="577.9" y="750.1">FAN</text>
<text x="681.2" y="750.1">PER</text>
<text x="1049.0" y="750.1">CTA</text>
<text x="1264.0" y="750.1">HYD</text>
<text x="1481.2" y="750.1">XUM</text>
<text x="441.7" y="733.8">COR</text>
<text x="656.9" y="733.8">SDA</text>
<text x="1048.9" y="733.8">LMI</text>
<text x="1166.5" y="733.8">LEO</text>
<text x="1274.7" y="733.8">EHY</text>
<text x="1499.7" y="733.8">ECV</text>
<text x="602.5" y="717.4">JXA</text>
<text x="714.9" y="717.4">KCG</text>
<text x="1156.5" y="717.4">AND</text>
<text x="1274.7" y="717.4">DAD</text>
<text x="666.4" y="701.1">ERI</text>
<text x="1108.4" y="701.1">SLD</text>
<text x="1211.0" y="701.1">ORS</text>
<text x="1298.5" y="701.1">GEM</text>
<text x="1122.5" y="684.8">KUM</text>
</g>
<g stroke="#ffffff" stroke-width="2">
<path d="M113.1 834.0h8M117.1 830.0v8"/>
<path d="M241.0 834.0h8M245.0 830.0v8"/>
<path d="M511.0 834.0h8M515.0 830.0v8"/>
<path d="M707.0 834.0h8M711.0 830.0v8"/>
<path d="M833.0 834.0h8M837.0 830.0v8"/>
<path d="M962.0 834.0h8M966.0 830.0v8"/>
<path d="M986.0 834.0h8M990.0 830.0v8"/>
<path d="M1116.0 834.0h8M1120.0 830.0v8"/>
<path d="M1295.0 834.0h8M1299.0 830.0v8"/>
<path d="M1342.0 834.0h8M1346.0 830.0v8"/>
<path d="M1413.0 834.0h8M1417.0 830.0v8"/>
<path d="M1482.0 834.0h8M1486.0 830.0v8"/>
<path d="M1531.0 834.0h8M1535.0 830.0v8"/>
<path d="M1732.0 834.0h8M1736.0 830.0v8"/>
<path d="M1766.0 834.0h8M1770.0 830.0v8"/>
<path d="M172.2 817.6h8M176.2 813.6v8"/>
<path d="M255.7 817.6h8M259.7 813.6v8"/>
<path d="M323.0 817.6h8M327.0 813.6v8"/>
<path d="M436.8 817.6h8M440.8 813.6v8"/>
<path d="M599.0 817.6h8M603.0 813.6v8"/>
<path d="M717.0 817.6h8M721.0 813.6v8"/>
<path d="M793.0 817.6h8M797.0 813.6v8"/>
<path d="M939.0 817.6h8M943.0 813.6v8"/>
<path d="M1006.0 817.6h8M1010.0 813.6v8"/>
<path d="M1153.0 817.6h8M1157.0 813.6v8"/>
<path d="M1251.0 817.6h8M1255.0 813.6v8"/>
<path d="M1300.0 817.6h8M1304.0 813.6v8"/>
<path d="M1349.0 817.6h8M1353.0 813.6v8"/>
<path d="M1403.0 817.6h8M1407.0 813.6v8"/>
<path d="M1467.0 817.6h8M1471.0 813.6v8"/>
<path d="M1555.0 817.6h8M1559.0 813.6v8"/>
<path d="M173.8 801.3h8M177.8 797.3v8"/>
<path d="M378.0 801.3h8M382.0 797.3v8"/>
<path d="M544.7 801.3h8M548.7 797.3v8"/>
<path d="M682.0 801.3h8M686.0 797.3v8"/>
<path d="M741.0 801.3h8M745.0 797.3v8"/>
<path d="M1075.0 801.3h8M1079.0 797.3v8"/>
<path d="M1217.0 801.3h8M1221.0 797.3v8"/>
<path d="M1305.0 801.3h8M1309.0 797.3v8"/>
<path d="M1467.0 801.3h8M1471.0 797.3v8"/>
<path d="M1560.0 801.3h8M1564.0 797.3v8"/>
<path d="M201.8 785.0h8M205.8 781.0v8"/>
<path d="M399.7 785.0h8M403.7 781.0v8"/>
<path d="M524.7 785.0h8M528.7 781.0v8"/>
<path d="M639.0 785.0h8M643.0 781.0v8"/>
<path d="M815.0 785.0h8M819.0 781.0v8"/>
<path d="M959.0 785.0h8M963.0 781.0v8"/>
<path d="M1040.0 785.0h8M1044.0 781.0v8"/>
<path d="M1188.0 785.0h8M1192.0 781.0v8"/>
<path d="M1251.0 785.0h8M1255.0 781.0v8"/>
<path d="M1325.0 785.0h8M1329.0 781.0v8"/>
<path d="M1403.0 785.0h8M1407.0 781.0v8"/>
<path d="M1546.0 785.0h8M1550.0 781.0v8"/>
<path d="M356.0 768.6h8M360.0 764.6v8"/>
<path d="M426.0 768.6h8M430.0 764.6v8"/>
<path d="M476.0 768.6h8M480.0 764.6v8"/>
<path d="M534.8 768.6h8M538.8 764.6v8"/>
<path d="M571.0 768.6h8M575.0 764.6v8"/>
<path d="M631.0 768.6h8M635.0 764.6v8"/>
<path d="M974.0 768.6h8M978.0 764.6v8"/>
<path d="M1070.0 768.6h8M1074.0 764.6v8"/>
<path d="M1109.0 768.6h8M1113.0 764.6v8"/>
<path d="M1178.0 768.6h8M1182.0 764.6v8"/>
<path d="M1256.0 768.6h8M1260.0 764.6v8"/>
<path d="M1467.0 768.6h8M1471.0 764.6v8"/>
<path d="M426.8 752.2h8M430.8 748.2v8"/>
<path d="M539.7 752.2h8M543.7 748.2v8"/>
<path d="M574.0 752.2h8M578.0 748.2v8"/>
<path d="M704.0 752.2h8M708.0 748.2v8"/>
<path d="M1094.0 752.2h8M1098.0 748.2v8"/>
<path d="M1271.0 752.2h8M1275.0 748.2v8"/>
<path d="M1477.0 752.2h8M1481.0 748.2v8"/>
<path d="M436.8 735.9h8M440.8 731.9v8"/>
<path d="M631.0 735.9h8M635.0 731.9v8"/>
<path d="M1039.0 735.9h8M1043.0 731.9v8"/>
<path d="M1168.0 735.9h8M1172.0 731.9v8"/>
<path d="M1275.0 735.9h8M1279.0 731.9v8"/>
<path d="M1497.0 735.9h8M1501.0 731.9v8"/>
<path d="M598.6 719.5h8M602.6 715.5v8"/>
<path d="M727.0 719.5h8M731.0 715.5v8"/>
<path d="M1188.0 719.5h8M1192.0 715.5v8"/>
<path d="M1271.0 719.5h8M1275.0 715.5v8"/>
<path d="M687.0 703.2h8M691.0 699.2v8"/>
<path d="M1102.0 703.2h8M1106.0 699.2v8"/>
<path d="M1207.0 703.2h8M1211.0 699.2v8"/>
<path d="M1300.0 703.2h8M1304.0 699.2v8"/>
<path d="M1119.0 686.9h8M1123.0 682.9v8"/>
</g>
</g>
<rect x="19.5" y="641.5" width="1766.0" height="201.0" fill="none" stroke="#ffffff" stroke-width="1.1"/>
<g stroke="#ffffff" stroke-width="1.1">
<line x1="19.90" y1="842.5" x2="19.90" y2="847.4"/>
<line x1="265.13" y1="842.5" x2="265.13" y2="847.4"/>
<line x1="510.36" y1="842.5" x2="510.36" y2="847.4"/>
<line x1="755.59" y1="842.5" x2="755.59" y2="847.4"/>
<line x1="1000.82" y1="842.5" x2="1000.82" y2="847.4"/>
<line x1="1246.05" y1="842.5" x2="1246.05" y2="847.4"/>
<line x1="1491.28" y1="842.5" x2="1491.28" y2="847.4"/>
<line x1="1736.51" y1="842.5" x2="1736.51" y2="847.4"/>
</g>
<g fill="#ffffff" font-family="Liberation Sans" font-size="14.8" text-anchor="middle">
<text x="19.10" y="861.7" textLength="8.0" lengthAdjust="spacingAndGlyphs">0</text>
<text x="264.33" y="861.7" textLength="16.0" lengthAdjust="spacingAndGlyphs">50</text>
<text x="509.56" y="861.7" textLength="24.0" lengthAdjust="spacingAndGlyphs">100</text>
<text x="754.79" y="861.7" textLength="24.0" lengthAdjust="spacingAndGlyphs">150</text>
<text x="1000.02" y="861.7" textLength="24.0" lengthAdjust="spacingAndGlyphs">200</text>
<text x="1245.25" y="861.7" textLength="24.0" lengthAdjust="spacingAndGlyphs">250</text>
<text x="1490.48" y="861.7" textLength="24.0" lengthAdjust="spacingAndGlyphs">300</text>
<text x="1735.71" y="861.7" textLength="24.0" lengthAdjust="spacingAndGlyphs">350</text>
<text x="902.2" y="882" font-size="14.6" textLength="147" lengthAdjust="spacingAndGlyphs">Solar longitude (deg)</text>
</g></svg></body></html>
